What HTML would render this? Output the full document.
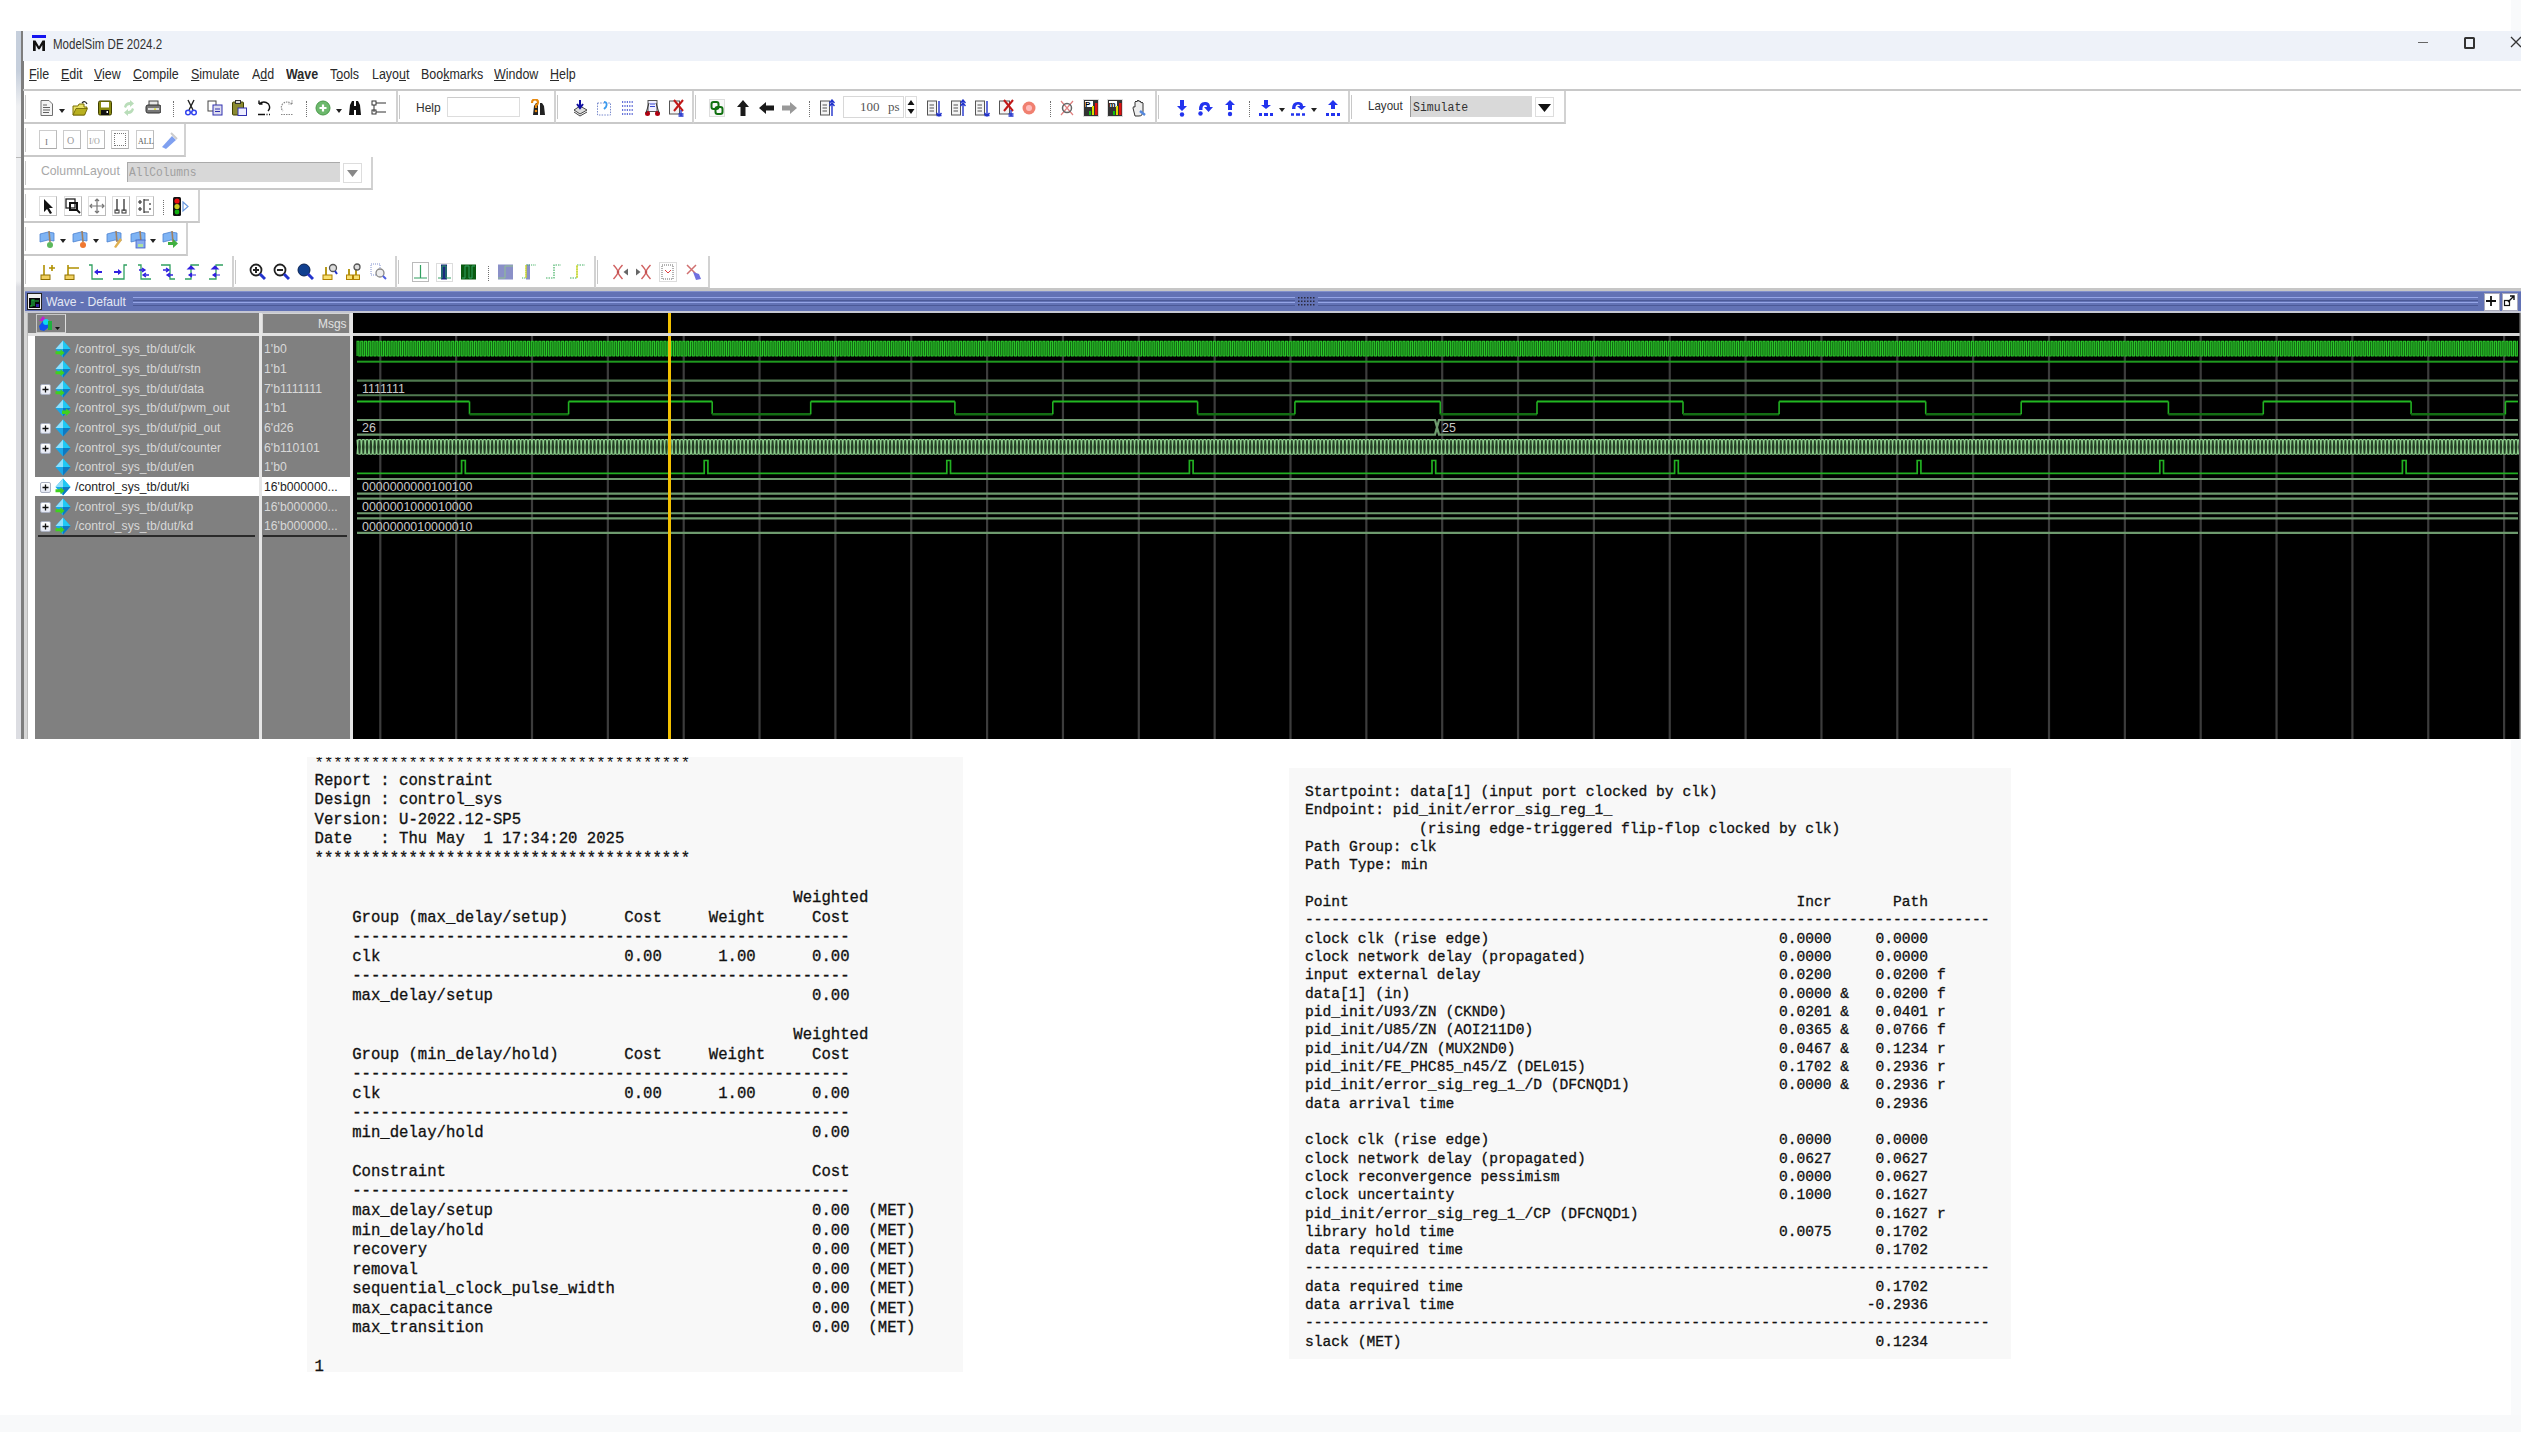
<!DOCTYPE html><html><head><meta charset="utf-8"><style>html,body{margin:0;padding:0;}body{width:2521px;height:1432px;position:relative;overflow:hidden;background:#fff;}</style></head><body><div style="position:absolute;left:0px;top:1415px;width:2521px;height:17px;background:#F8F9FA;"></div><div style="position:absolute;left:2511px;top:0px;width:10px;height:31px;background:#F9FAFB;"></div><div style="position:absolute;left:2511px;top:740px;width:10px;height:675px;background:#F9FAFB;"></div><div style="position:absolute;left:16px;top:31px;width:5px;height:708px;background:linear-gradient(#C6CFDC 0px,#C6CFDC 40px,#EEEFF1 75px,#EEEFF1 250px,#DCDDE2 256px,#DCDDE2 100%);"></div><div style="position:absolute;left:16px;top:157px;width:5px;height:1px;background:#B8B8B8;"></div><div style="position:absolute;left:21px;top:31px;width:2.5px;height:708px;background:#7E7E7E;"></div><div style="position:absolute;left:23.5px;top:91px;width:4px;height:648px;background:#D6D6D6;"></div><div style="position:absolute;left:23px;top:31px;width:2498px;height:30px;background:#EEF2F9;"></div><div style="position:absolute;left:32px;top:35px;width:14px;height:2.5px;background:#1414F0;"></div><svg style="position:absolute;left:31px;top:39px;" width="16" height="13" viewBox="0 0 16 13"><path d="M2 12 V1.5 H4.5 L8 7.5 L11.5 1.5 H14 V12 H11.3 V6 L8.8 10.3 H7.2 L4.7 6 V12 Z" fill="#111"/></svg><div style="position:absolute;left:53px;top:28.80px;height:30px;line-height:30px;font-family:'Liberation Sans', sans-serif;font-size:15px;color:#333;font-weight:normal;white-space:pre;transform:scaleX(0.77);transform-origin:0 0;">ModelSim DE 2024.2</div><div style="position:absolute;left:2418px;top:42px;width:10px;height:1px;background:#666;"></div><div style="position:absolute;left:2464px;top:37px;width:7px;height:8px;border:2px solid #333;border-radius:1.5px"></div><svg style="position:absolute;left:2510px;top:36px;" width="11" height="12" viewBox="0 0 11 12"><path d="M1 1 L11 11 M11 1 L1 11" stroke="#333" stroke-width="1.3"/></svg><div style="position:absolute;left:29px;top:60.15px;height:28px;line-height:28px;font-family:'Liberation Sans', sans-serif;font-size:14px;color:#2a2a2a;font-weight:normal;white-space:pre;transform:scaleX(0.89);transform-origin:0 0;text-underline-offset:1px;"><u>F</u>ile</div><div style="position:absolute;left:61px;top:60.15px;height:28px;line-height:28px;font-family:'Liberation Sans', sans-serif;font-size:14px;color:#2a2a2a;font-weight:normal;white-space:pre;transform:scaleX(0.89);transform-origin:0 0;text-underline-offset:1px;"><u>E</u>dit</div><div style="position:absolute;left:94px;top:60.15px;height:28px;line-height:28px;font-family:'Liberation Sans', sans-serif;font-size:14px;color:#2a2a2a;font-weight:normal;white-space:pre;transform:scaleX(0.89);transform-origin:0 0;text-underline-offset:1px;"><u>V</u>iew</div><div style="position:absolute;left:133px;top:60.15px;height:28px;line-height:28px;font-family:'Liberation Sans', sans-serif;font-size:14px;color:#2a2a2a;font-weight:normal;white-space:pre;transform:scaleX(0.89);transform-origin:0 0;text-underline-offset:1px;"><u>C</u>ompile</div><div style="position:absolute;left:191px;top:60.15px;height:28px;line-height:28px;font-family:'Liberation Sans', sans-serif;font-size:14px;color:#2a2a2a;font-weight:normal;white-space:pre;transform:scaleX(0.89);transform-origin:0 0;text-underline-offset:1px;"><u>S</u>imulate</div><div style="position:absolute;left:252px;top:60.15px;height:28px;line-height:28px;font-family:'Liberation Sans', sans-serif;font-size:14px;color:#2a2a2a;font-weight:normal;white-space:pre;transform:scaleX(0.89);transform-origin:0 0;text-underline-offset:1px;">A<u>d</u>d</div><div style="position:absolute;left:286px;top:60.15px;height:28px;line-height:28px;font-family:'Liberation Sans', sans-serif;font-size:14px;color:#2a2a2a;font-weight:bold;white-space:pre;transform:scaleX(0.89);transform-origin:0 0;text-underline-offset:1px;">W<u>a</u>ve</div><div style="position:absolute;left:330px;top:60.15px;height:28px;line-height:28px;font-family:'Liberation Sans', sans-serif;font-size:14px;color:#2a2a2a;font-weight:normal;white-space:pre;transform:scaleX(0.89);transform-origin:0 0;text-underline-offset:1px;">T<u>o</u>ols</div><div style="position:absolute;left:372px;top:60.15px;height:28px;line-height:28px;font-family:'Liberation Sans', sans-serif;font-size:14px;color:#2a2a2a;font-weight:normal;white-space:pre;transform:scaleX(0.89);transform-origin:0 0;text-underline-offset:1px;">Layo<u>u</u>t</div><div style="position:absolute;left:421px;top:60.15px;height:28px;line-height:28px;font-family:'Liberation Sans', sans-serif;font-size:14px;color:#2a2a2a;font-weight:normal;white-space:pre;transform:scaleX(0.89);transform-origin:0 0;text-underline-offset:1px;">Boo<u>k</u>marks</div><div style="position:absolute;left:494px;top:60.15px;height:28px;line-height:28px;font-family:'Liberation Sans', sans-serif;font-size:14px;color:#2a2a2a;font-weight:normal;white-space:pre;transform:scaleX(0.89);transform-origin:0 0;text-underline-offset:1px;"><u>W</u>indow</div><div style="position:absolute;left:550px;top:60.15px;height:28px;line-height:28px;font-family:'Liberation Sans', sans-serif;font-size:14px;color:#2a2a2a;font-weight:normal;white-space:pre;transform:scaleX(0.89);transform-origin:0 0;text-underline-offset:1px;"><u>H</u>elp</div><div style="position:absolute;left:23px;top:89px;width:2498px;height:2px;background:#C8C8C8;"></div><div style="position:absolute;left:24px;top:91px;width:374px;height:33px;background:#fff;border-right:2px solid #D2D2D2;border-bottom:2px solid #C9C9C9;box-sizing:border-box"></div><div style="position:absolute;left:25px;top:95px;width:1px;height:24px;background:#C8C8C8;"></div><div style="position:absolute;left:26px;top:95px;width:1px;height:24px;background:#FFFFFF;"></div><svg style="position:absolute;left:39px;top:99px;" width="16" height="18" viewBox="0 0 16 18"><path d="M2 1.5 H10 L13.5 5 V16.5 H2 Z" fill="#f4f4f4" stroke="#707070" stroke-width="1"/><path d="M4 6 H8 M4 8.5 H11 M4 11 H11 M4 13.5 H10" stroke="#606060" stroke-width="1.2"/></svg><svg style="position:absolute;left:72px;top:99px;" width="16" height="18" viewBox="0 0 16 18"><path d="M1 7 H6 L7 5 H12 V8 H15 L12.5 16 H1 Z" fill="#E8E066" stroke="#7a7000" stroke-width="1"/><path d="M1 16 L4 9.5 H15.5 L12.5 16 Z" fill="#B8B020" stroke="#6a6000" stroke-width="0.8"/><path d="M10 4 Q13 1 15 5" stroke="#222" fill="none" stroke-width="1.2"/></svg><svg style="position:absolute;left:97px;top:99px;" width="16" height="18" viewBox="0 0 16 18"><rect x="1.5" y="2" width="13" height="14" rx="1.5" fill="#8a8a10" stroke="#404000"/><rect x="4" y="3" width="8" height="5.5" fill="#fff"/><rect x="4" y="11" width="8" height="5" fill="#111"/><rect x="9.5" y="12" width="1.5" height="2" fill="#fff"/></svg><svg style="position:absolute;left:121px;top:99px;" width="16" height="18" viewBox="0 0 16 18"><path d="M3 8 Q4 3 9 3 L9 1 L13 4.5 L9 8 V6 Q6 6 5 9 Z M13 10 Q12 15 7 15 V17 L3 13.5 L7 10 V12 Q10 12 11 9 Z" fill="#B9DDB9"/></svg><svg style="position:absolute;left:145px;top:99px;" width="16" height="18" viewBox="0 0 16 18"><rect x="4" y="2" width="9" height="5" fill="#e8e8e8" stroke="#444"/><rect x="1" y="6" width="15" height="8" rx="2" fill="#777" stroke="#333"/><rect x="3" y="9" width="11" height="2" fill="#ddd"/><rect x="9" y="9.5" width="2" height="1.2" fill="#dd0"/></svg><svg style="position:absolute;left:183px;top:99px;" width="16" height="18" viewBox="0 0 16 18"><path d="M5 1 L10 11 M11 1 L6 11" stroke="#222" stroke-width="1.4"/><circle cx="5" cy="13.5" r="2.3" fill="none" stroke="#3344ee" stroke-width="1.5"/><circle cx="11" cy="13.5" r="2.3" fill="none" stroke="#3344ee" stroke-width="1.5"/></svg><svg style="position:absolute;left:207px;top:99px;" width="16" height="18" viewBox="0 0 16 18"><rect x="1" y="2" width="8" height="10" fill="#fff" stroke="#444"/><rect x="6" y="6" width="9" height="10" fill="#dde" stroke="#3030b0"/><path d="M8 10 H13 M8 12.5 H13" stroke="#3030b0"/></svg><svg style="position:absolute;left:231px;top:99px;" width="16" height="18" viewBox="0 0 16 18"><rect x="1.5" y="3" width="11" height="13" rx="1" fill="#8a8a30" stroke="#404000"/><rect x="4.5" y="1.5" width="5" height="3" fill="#ddd" stroke="#333"/><rect x="7" y="9" width="8.5" height="7.5" fill="#eef" stroke="#3030b0"/></svg><svg style="position:absolute;left:256px;top:99px;" width="16" height="18" viewBox="0 0 16 18"><path d="M3 5 L3 1.5 M3 5 H6.5 M3 5 Q8 1 12.5 5 Q15 9 12 12" stroke="#111" stroke-width="1.4" fill="none"/><path d="M2 15.5 H9 M10.5 15.5 H11.5 M13 15.5 H14" stroke="#111" stroke-width="1.6"/></svg><svg style="position:absolute;left:279px;top:99px;" width="16" height="18" viewBox="0 0 16 18"><path d="M13 5 L13 1.5 M13 5 H9.5 M13 5 Q8 1 3.5 5 Q1 9 4 12" stroke="#888" stroke-width="1.2" fill="none" stroke-dasharray="1.5 1"/><path d="M2 15.5 H14" stroke="#888" stroke-width="1.2" stroke-dasharray="1.5 1"/></svg><svg style="position:absolute;left:315px;top:99px;" width="16" height="18" viewBox="0 0 16 18"><circle cx="8" cy="9" r="7" fill="#6cb86c" stroke="#4a9a4a"/><path d="M8 5.5 V12.5 M4.5 9 H11.5" stroke="#fff" stroke-width="2.2"/></svg><svg style="position:absolute;left:347px;top:99px;" width="16" height="18" viewBox="0 0 16 18"><path d="M2 16 L3 6 L5 2 H7 V16 Z M14 16 L13 6 L11 2 H9 V16 Z" fill="#111"/><rect x="6" y="7" width="4" height="4" fill="#111"/></svg><svg style="position:absolute;left:371px;top:99px;" width="16" height="18" viewBox="0 0 16 18"><rect x="1" y="2" width="4" height="4" fill="#fff" stroke="#333"/><rect x="1" y="11" width="4" height="4" fill="#fff" stroke="#333"/><path d="M3 6 V13 M5 4 H15 M5 13 H15" stroke="#333"/></svg><svg style="position:absolute;left:59px;top:109px;" width="6" height="4" viewBox="0 0 6 4"><path d="M0 0 H6 L3 4 Z" fill="#222"/></svg><svg style="position:absolute;left:336px;top:109px;" width="6" height="4" viewBox="0 0 6 4"><path d="M0 0 H6 L3 4 Z" fill="#222"/></svg><div style="position:absolute;left:173px;top:101px;width:0;height:16px;border-left:1.5px dotted #707070"></div><div style="position:absolute;left:306px;top:101px;width:0;height:16px;border-left:1.5px dotted #707070"></div><div style="position:absolute;left:398px;top:91px;width:158px;height:33px;background:#fff;border-right:2px solid #D2D2D2;border-bottom:2px solid #C9C9C9;box-sizing:border-box"></div><div style="position:absolute;left:399px;top:95px;width:1px;height:24px;background:#C8C8C8;"></div><div style="position:absolute;left:400px;top:95px;width:1px;height:24px;background:#FFFFFF;"></div><div style="position:absolute;left:416px;top:94.50px;height:26px;line-height:26px;font-family:'Liberation Sans', sans-serif;font-size:13px;color:#333;font-weight:normal;white-space:pre;transform:scaleX(0.92);transform-origin:0 0;">Help</div><div style="position:absolute;left:447px;top:97px;width:73px;height:20px;background:#fff;border:1px solid #ddd;border-top-color:#ccc;box-sizing:border-box"></div><svg style="position:absolute;left:530px;top:99px;" width="16" height="18" viewBox="0 0 16 18"><path d="M3 16 L4 7 L6 4 H8 V16 Z M15 16 L14 7 L12 4 H10 V16 Z" fill="#222"/><path d="M2 4 Q2 0.5 5 0.5 Q8 0.5 8 3.5 Q8 5 6 6.5 V9" stroke="#E88A10" stroke-width="2.2" fill="none"/><circle cx="6" cy="12" r="1.3" fill="#E88A10"/></svg><div style="position:absolute;left:556px;top:91px;width:138px;height:33px;background:#fff;border-right:2px solid #D2D2D2;border-bottom:2px solid #C9C9C9;box-sizing:border-box"></div><div style="position:absolute;left:557px;top:95px;width:1px;height:24px;background:#C8C8C8;"></div><div style="position:absolute;left:558px;top:95px;width:1px;height:24px;background:#FFFFFF;"></div><svg style="position:absolute;left:572px;top:99px;" width="16" height="18" viewBox="0 0 16 18"><path d="M2 11 L8 7 L15 11 L8 15 Z" fill="#ddd" stroke="#444"/><path d="M2 13 L8 17 L15 13" stroke="#444" fill="none"/><path d="M8 1 V8 M5 5 L8 9 L11 5" stroke="#1010a0" stroke-width="2" fill="none"/></svg><svg style="position:absolute;left:596px;top:99px;" width="16" height="18" viewBox="0 0 16 18"><rect x="1.5" y="4" width="13" height="12" fill="none" stroke="#7788cc" stroke-dasharray="1.5 1.2"/><path d="M8 3 Q12 3 10 8 L8 10" stroke="#3a9aee" stroke-width="1.8" fill="none"/></svg><svg style="position:absolute;left:620px;top:99px;" width="16" height="18" viewBox="0 0 16 18"><path d="M2 3 H14 M2 7 H14 M2 11 H14 M2 15 H14" stroke="#3344cc" stroke-width="1.5" stroke-dasharray="1.2 1.2"/></svg><svg style="position:absolute;left:644px;top:99px;" width="16" height="18" viewBox="0 0 16 18"><rect x="4" y="1.5" width="9" height="11" fill="#eef" stroke="#555"/><path d="M6 5 H11 M6 7.5 H11" stroke="#3344cc"/><circle cx="3.5" cy="14.5" r="2.5" fill="#b00010"/><circle cx="13.5" cy="14.5" r="2.5" fill="#b00010"/><path d="M2 14 L5 4 M15 14 L12 4" stroke="#333"/></svg><svg style="position:absolute;left:668px;top:99px;" width="16" height="18" viewBox="0 0 16 18"><rect x="1.5" y="2" width="10" height="13" fill="#f4f4f4" stroke="#555"/><path d="M6 1 L15 12 M15 1 L6 12" stroke="#c01818" stroke-width="2"/><path d="M13 11 V17 M10.5 15 H15.5 M10.5 17 H15.5" stroke="#2233cc" stroke-width="1.3"/></svg><div style="position:absolute;left:694px;top:91px;width:463px;height:33px;background:#fff;border-right:2px solid #D2D2D2;border-bottom:2px solid #C9C9C9;box-sizing:border-box"></div><div style="position:absolute;left:695px;top:95px;width:1px;height:24px;background:#C8C8C8;"></div><div style="position:absolute;left:696px;top:95px;width:1px;height:24px;background:#FFFFFF;"></div><svg style="position:absolute;left:709px;top:99px;" width="16" height="18" viewBox="0 0 16 18"><rect x="0.5" y="0.5" width="15" height="17" fill="#f8f8f8" stroke="#ddd"/><rect x="2.5" y="3" width="7" height="7" rx="2" fill="none" stroke="#107010" stroke-width="2"/><rect x="6.5" y="8" width="7" height="7" rx="2" fill="none" stroke="#107010" stroke-width="2"/></svg><svg style="position:absolute;left:735px;top:99px;" width="16" height="18" viewBox="0 0 16 18"><path d="M8 1 L14 8 H10.5 V17 H5.5 V8 H2 Z" fill="#1a1a1a"/></svg><svg style="position:absolute;left:758px;top:99px;" width="16" height="18" viewBox="0 0 16 18"><path d="M1 9 L8 3 V6.5 H16 V11.5 H8 V15 Z" fill="#1a1a1a"/></svg><svg style="position:absolute;left:781px;top:99px;" width="16" height="18" viewBox="0 0 16 18"><path d="M16 9 L9 3 V6.5 H1 V11.5 H9 V15 Z" fill="#999"/></svg><svg style="position:absolute;left:819px;top:99px;" width="16" height="18" viewBox="0 0 16 18"><rect x="1.5" y="2" width="9" height="14" fill="#f4f4f4" stroke="#555"/><path d="M3.5 6 H8 M3.5 9 H8 M3.5 12 H8" stroke="#555"/><path d="M13 1 V17 M10.5 4 L13 1 L15.5 4 M10.5 7 L13 4 L15.5 7" stroke="#2233cc" stroke-width="1.4" fill="none"/></svg><svg style="position:absolute;left:926px;top:99px;" width="16" height="18" viewBox="0 0 16 18"><rect x="1.5" y="2" width="9" height="14" fill="#f4f4f4" stroke="#555"/><path d="M3.5 6 H8 M3.5 9 H8 M3.5 12 H8" stroke="#555"/><path d="M13 2 V16 M10.5 16.5 H15.5 M10.5 14 L13 17 L15.5 14" stroke="#2233cc" stroke-width="1.4" fill="none"/></svg><svg style="position:absolute;left:950px;top:99px;" width="16" height="18" viewBox="0 0 16 18"><rect x="1.5" y="2" width="9" height="14" fill="#f4f4f4" stroke="#555"/><path d="M3.5 6 H8 M3.5 9 H8 M3.5 12 H8" stroke="#555"/><path d="M13 1 V17 M10.5 4 L13 1 L15.5 4 M10.5 7 L13 4 L15.5 7" stroke="#2233cc" stroke-width="1.4" fill="none"/></svg><svg style="position:absolute;left:974px;top:99px;" width="16" height="18" viewBox="0 0 16 18"><rect x="1.5" y="2" width="9" height="14" fill="#f4f4f4" stroke="#555"/><path d="M3.5 6 H8 M3.5 9 H8 M3.5 12 H8" stroke="#555"/><path d="M13 2 V16 M10.5 16.5 H15.5 M10.5 14 L13 17 L15.5 14" stroke="#2233cc" stroke-width="1.4" fill="none"/></svg><svg style="position:absolute;left:998px;top:99px;" width="16" height="18" viewBox="0 0 16 18"><rect x="1.5" y="2" width="10" height="13" fill="#f4f4f4" stroke="#555"/><path d="M6 1 L15 12 M15 1 L6 12" stroke="#c01818" stroke-width="2"/><path d="M13 11 V17 M10.5 15 H15.5 M10.5 17 H15.5" stroke="#2233cc" stroke-width="1.3"/></svg><svg style="position:absolute;left:1021px;top:99px;" width="16" height="18" viewBox="0 0 16 18"><circle cx="8" cy="9" r="6.5" fill="#f08070"/><circle cx="8" cy="9" r="3" fill="#fbb"/></svg><svg style="position:absolute;left:1059px;top:99px;" width="16" height="18" viewBox="0 0 16 18"><path d="M2 2 L14 16 M14 2 L2 16" stroke="#e08080" stroke-width="1.2"/><circle cx="8" cy="9" r="4.5" fill="none" stroke="#666" stroke-width="1.5"/></svg><svg style="position:absolute;left:1083px;top:99px;" width="16" height="18" viewBox="0 0 16 18"><rect x="0.5" y="0.5" width="15" height="17" fill="#333" stroke="#ddd"/><rect x="2" y="2" width="8" height="6" fill="#fff"/><text x="2" y="8" font-size="8" font-weight="bold" fill="#000" font-family="Liberation Sans">P</text><rect x="9" y="7" width="2" height="9" fill="#dd0"/><rect x="12" y="4" width="2.5" height="12" fill="#e01010"/><rect x="6" y="12" width="2" height="4" fill="#10c010"/></svg><svg style="position:absolute;left:1107px;top:99px;" width="16" height="18" viewBox="0 0 16 18"><rect x="0.5" y="0.5" width="15" height="17" fill="#333" stroke="#ddd"/><rect x="2" y="2" width="8" height="6" fill="#fff"/><text x="1.5" y="8" font-size="8" font-weight="bold" fill="#000" font-family="Liberation Sans">m</text><rect x="9" y="7" width="2" height="9" fill="#dd0"/><rect x="12" y="4" width="2.5" height="12" fill="#e01010"/><rect x="6" y="12" width="2" height="4" fill="#10c010"/></svg><svg style="position:absolute;left:1131px;top:99px;" width="16" height="18" viewBox="0 0 16 18"><path d="M4 17 L2 9 Q2 7 4 8 V3 Q5 1 6 3 V2 Q7 0.5 8 2 V2.5 Q9 1 10 3 V4 Q11 2.5 12 4 V12 Q12 17 8 17 Z" fill="#eee" stroke="#333"/><path d="M9 12 L14 16" stroke="#5588dd" stroke-width="2.5"/></svg><div style="position:absolute;left:809px;top:101px;width:0;height:16px;border-left:1.5px dotted #707070"></div><div style="position:absolute;left:1050px;top:101px;width:0;height:16px;border-left:1.5px dotted #707070"></div><div style="position:absolute;left:843px;top:96px;width:61px;height:22px;background:#fff;border:1px solid #d8d8d8;box-sizing:border-box"></div><div style="position:absolute;left:860px;top:94.34px;height:26px;line-height:26px;font-family:'Liberation Serif', serif;font-size:13px;color:#555;font-weight:normal;white-space:pre;">100</div><div style="position:absolute;left:888px;top:94.34px;height:26px;line-height:26px;font-family:'Liberation Serif', serif;font-size:13px;color:#555;font-weight:normal;white-space:pre;">ps</div><div style="position:absolute;left:905px;top:96px;width:12px;height:22px;background:#fff;border:1px solid #ddd;box-sizing:border-box"></div><svg style="position:absolute;left:906px;top:98px;" width="10" height="18" viewBox="0 0 10 18"><path d="M1.5 7 L5 2 L8.5 7 Z M1.5 11 L5 16 L8.5 11 Z" fill="#111"/></svg><div style="position:absolute;left:1157px;top:91px;width:193px;height:33px;background:#fff;border-right:2px solid #D2D2D2;border-bottom:2px solid #C9C9C9;box-sizing:border-box"></div><div style="position:absolute;left:1158px;top:95px;width:1px;height:24px;background:#C8C8C8;"></div><div style="position:absolute;left:1159px;top:95px;width:1px;height:24px;background:#FFFFFF;"></div><svg style="position:absolute;left:1174px;top:99px;" width="16" height="18" viewBox="0 0 16 18"><path d="M6 1 V7 H3 L8 12 L13 7 H10 V1 Z" fill="#2233ee"/><circle cx="8" cy="15.5" r="2.2" fill="#2233ee"/></svg><svg style="position:absolute;left:1197px;top:99px;" width="16" height="18" viewBox="0 0 16 18"><path d="M2 11 Q2 2 9 3 Q13 3.5 13 8 H16 L11.5 13 L7 8 H10 Q10 6 8 6 Q5 6.5 5.5 11 Z" fill="#2233ee"/><circle cx="3.5" cy="14.5" r="2.2" fill="#2233ee"/></svg><svg style="position:absolute;left:1222px;top:99px;" width="16" height="18" viewBox="0 0 16 18"><path d="M8 1 L13 6 H10 V11 H6 V6 H3 Z" fill="#2233ee"/><circle cx="8" cy="15" r="2.2" fill="#2233ee"/></svg><svg style="position:absolute;left:1258px;top:99px;" width="16" height="18" viewBox="0 0 16 18"><path d="M6 1 V6 H3 L8 10 L13 6 H10 V1 Z" fill="#2233ee"/><path d="M1 15.5 H4 M6 15.5 H10 M12 15.5 H15" stroke="#2233ee" stroke-width="3"/></svg><svg style="position:absolute;left:1290px;top:99px;" width="16" height="18" viewBox="0 0 16 18"><path d="M2 10 Q2 2 9 3 Q13 3.5 13 7 H16 L11.5 11 L7 7 H10 Q10 5.5 8 5.5 Q5 6 5.5 10 Z" fill="#2233ee"/><path d="M1 15.5 H4 M6 15.5 H10 M12 15.5 H15" stroke="#2233ee" stroke-width="2.5"/></svg><svg style="position:absolute;left:1325px;top:99px;" width="16" height="18" viewBox="0 0 16 18"><path d="M8 1 L13 6 H10 V10 H6 V6 H3 Z" fill="#2233ee"/><path d="M1 15.5 H4 M6 15.5 H10 M12 15.5 H15" stroke="#2233ee" stroke-width="3"/></svg><svg style="position:absolute;left:1279px;top:108px;" width="6" height="4" viewBox="0 0 6 4"><path d="M0 0 H6 L3 4 Z" fill="#222"/></svg><svg style="position:absolute;left:1311px;top:108px;" width="6" height="4" viewBox="0 0 6 4"><path d="M0 0 H6 L3 4 Z" fill="#222"/></svg><div style="position:absolute;left:1249px;top:101px;width:0;height:16px;border-left:1.5px dotted #707070"></div><div style="position:absolute;left:1350px;top:91px;width:216px;height:33px;background:#fff;border-right:2px solid #D2D2D2;border-bottom:2px solid #C9C9C9;box-sizing:border-box"></div><div style="position:absolute;left:1351px;top:95px;width:1px;height:24px;background:#C8C8C8;"></div><div style="position:absolute;left:1352px;top:95px;width:1px;height:24px;background:#FFFFFF;"></div><div style="position:absolute;left:1368px;top:92.50px;height:26px;line-height:26px;font-family:'Liberation Sans', sans-serif;font-size:13px;color:#333;font-weight:normal;white-space:pre;transform:scaleX(0.89);transform-origin:0 0;">Layout</div><div style="position:absolute;left:1410px;top:96px;width:122px;height:21px;background:#D9D9D9;border-left:1.5px solid #999;box-sizing:border-box"></div><div style="position:absolute;left:1413px;top:96.17px;height:25.0px;line-height:25.0px;font-family:'Liberation Mono', monospace;font-size:12.5px;color:#333;font-weight:normal;white-space:pre;transform:scaleX(0.92);transform-origin:0 0;">Simulate</div><div style="position:absolute;left:1535px;top:97px;width:19px;height:20px;background:#fff;border:1px solid #ddd;box-sizing:border-box"></div><svg style="position:absolute;left:1537px;top:103px;" width="15" height="10" viewBox="0 0 15 10"><path d="M1 1 H14 L7.5 9 Z" fill="#111"/></svg><div style="position:absolute;left:24px;top:124px;width:162px;height:33px;background:#fff;border-right:2px solid #D2D2D2;border-bottom:2px solid #C9C9C9;box-sizing:border-box"></div><div style="position:absolute;left:25px;top:128px;width:1px;height:24px;background:#C8C8C8;"></div><div style="position:absolute;left:26px;top:128px;width:1px;height:24px;background:#FFFFFF;"></div><div style="position:absolute;left:39px;top:130px;width:18px;height:19px;background:#fff;border:1px solid #ccc;border-right-color:#bbb;border-bottom-color:#aaa;box-sizing:border-box"></div><div style="position:absolute;left:63px;top:130px;width:18px;height:19px;background:#fff;border:1px solid #ccc;border-right-color:#bbb;border-bottom-color:#aaa;box-sizing:border-box"></div><div style="position:absolute;left:87px;top:130px;width:18px;height:19px;background:#fff;border:1px solid #ccc;border-right-color:#bbb;border-bottom-color:#aaa;box-sizing:border-box"></div><div style="position:absolute;left:111px;top:130px;width:18px;height:19px;background:#fff;border:1px solid #ccc;border-right-color:#bbb;border-bottom-color:#aaa;box-sizing:border-box"></div><div style="position:absolute;left:136px;top:130px;width:18px;height:19px;background:#fff;border:1px solid #ccc;border-right-color:#bbb;border-bottom-color:#aaa;box-sizing:border-box"></div><div style="position:absolute;left:45px;top:132.60px;height:18px;line-height:18px;font-family:'Liberation Serif', serif;font-size:9px;color:#777;font-weight:normal;white-space:pre;">I</div><div style="position:absolute;left:67px;top:131.34px;height:20px;line-height:20px;font-family:'Liberation Serif', serif;font-size:10px;color:#999;font-weight:normal;white-space:pre;">O</div><div style="position:absolute;left:89px;top:133.87px;height:16px;line-height:16px;font-family:'Liberation Serif', serif;font-size:8px;color:#999;font-weight:normal;white-space:pre;">I/O</div><div style="position:absolute;left:114px;top:133px;width:12px;height:13px;border:1px dotted #777;box-sizing:border-box"></div><div style="position:absolute;left:138px;top:133.87px;height:16px;line-height:16px;font-family:'Liberation Serif', serif;font-size:8px;color:#555;font-weight:normal;white-space:pre;">ALL</div><svg style="position:absolute;left:159px;top:130px;" width="20" height="20" viewBox="0 0 20 20"><path d="M3 17 L13 6 L17 10 L7 19 Z" fill="#7fa0f0"/><path d="M12 3 L18 9" stroke="#ccc" stroke-width="2"/></svg><div style="position:absolute;left:24px;top:157px;width:349px;height:33px;background:#fff;border-right:2px solid #D2D2D2;border-bottom:2px solid #C9C9C9;box-sizing:border-box"></div><div style="position:absolute;left:25px;top:161px;width:1px;height:24px;background:#C8C8C8;"></div><div style="position:absolute;left:26px;top:161px;width:1px;height:24px;background:#FFFFFF;"></div><div style="position:absolute;left:41px;top:158.00px;height:26px;line-height:26px;font-family:'Liberation Sans', sans-serif;font-size:13px;color:#A8A8A8;font-weight:normal;white-space:pre;transform:scaleX(0.94);transform-origin:0 0;">ColumnLayout</div><div style="position:absolute;left:127px;top:162px;width:213px;height:20px;background:#D8D8D8;border-top:1.5px solid #aaa;border-left:1.5px solid #aaa;box-sizing:border-box"></div><div style="position:absolute;left:129px;top:161.17px;height:25.0px;line-height:25.0px;font-family:'Liberation Mono', monospace;font-size:12.5px;color:#A0A0A0;font-weight:normal;white-space:pre;transform:scaleX(0.9);transform-origin:0 0;">AllColumns</div><div style="position:absolute;left:343px;top:163px;width:19px;height:20px;background:#fff;border:1px solid #ddd;box-sizing:border-box"></div><svg style="position:absolute;left:345px;top:169px;" width="15" height="9" viewBox="0 0 15 9"><path d="M2 1 H13 L7.5 8 Z" fill="#888"/></svg><div style="position:absolute;left:24px;top:190px;width:176px;height:33px;background:#fff;border-right:2px solid #D2D2D2;border-bottom:2px solid #C9C9C9;box-sizing:border-box"></div><div style="position:absolute;left:25px;top:194px;width:1px;height:24px;background:#C8C8C8;"></div><div style="position:absolute;left:26px;top:194px;width:1px;height:24px;background:#FFFFFF;"></div><div style="position:absolute;left:39px;top:196px;width:18px;height:20px;background:#fff;border:1px solid #ddd;border-right-color:#bbb;border-bottom-color:#bbb;box-sizing:border-box"></div><div style="position:absolute;left:64px;top:196px;width:18px;height:20px;background:#fff;border:1px solid #ddd;border-right-color:#bbb;border-bottom-color:#bbb;box-sizing:border-box"></div><div style="position:absolute;left:88px;top:196px;width:18px;height:20px;background:#fff;border:1px solid #ddd;border-right-color:#bbb;border-bottom-color:#bbb;box-sizing:border-box"></div><div style="position:absolute;left:112px;top:196px;width:18px;height:20px;background:#fff;border:1px solid #ddd;border-right-color:#bbb;border-bottom-color:#bbb;box-sizing:border-box"></div><div style="position:absolute;left:136px;top:196px;width:18px;height:20px;background:#fff;border:1px solid #ddd;border-right-color:#bbb;border-bottom-color:#bbb;box-sizing:border-box"></div><svg style="position:absolute;left:41px;top:198px;" width="14" height="16" viewBox="0 0 14 16"><path d="M3 1 L12 10 H8 L11 15 L9 16 L6 11 L3 14 Z" fill="#111"/></svg><svg style="position:absolute;left:65px;top:198px;" width="16" height="16" viewBox="0 0 16 16"><rect x="1" y="1" width="9" height="9" fill="none" stroke="#222" stroke-width="1.3"/><rect x="5" y="5" width="7" height="7" fill="none" stroke="#111" stroke-width="2"/><path d="M11 11 L15 15" stroke="#111" stroke-width="1.8"/></svg><svg style="position:absolute;left:89px;top:198px;" width="16" height="16" viewBox="0 0 16 16"><path d="M8 1 V15 M1 8 H15 M6 3 L8 1 L10 3 M6 13 L8 15 L10 13 M3 6 L1 8 L3 10 M13 6 L15 8 L13 10" stroke="#777" fill="none" stroke-width="1.2"/></svg><svg style="position:absolute;left:113px;top:198px;" width="16" height="16" viewBox="0 0 16 16"><path d="M4 1 V13 M11 1 V13" stroke="#333" stroke-width="1.3"/><rect x="2" y="12" width="4" height="3" fill="none" stroke="#333"/><rect x="9" y="12" width="4" height="3" fill="none" stroke="#333"/></svg><svg style="position:absolute;left:137px;top:198px;" width="16" height="16" viewBox="0 0 16 16"><path d="M1 4 H5 M3 2 V6 M1 11 H5 M3 9 V13 M7 1 V15 M7 2 H12 M7 14 H12 M13 5 V7 M13 10 V12" stroke="#333" stroke-width="1.2"/></svg><div style="position:absolute;left:163px;top:200px;width:0;height:15px;border-left:1.5px dotted #707070"></div><svg style="position:absolute;left:172px;top:196px;" width="18" height="21" viewBox="0 0 18 21"><rect x="1" y="1" width="8" height="19" rx="1.5" fill="#111"/><circle cx="5" cy="5" r="2.6" fill="#ee1010"/><circle cx="5" cy="10.5" r="2.6" fill="#cccc20"/><circle cx="5" cy="16" r="2.4" fill="#10b010"/><path d="M11 6 L16 10.5 L11 15 Z" fill="none" stroke="#6a9ae0" stroke-width="1.2"/></svg><div style="position:absolute;left:24px;top:223px;width:164px;height:33px;background:#fff;border-right:2px solid #D2D2D2;border-bottom:2px solid #C9C9C9;box-sizing:border-box"></div><div style="position:absolute;left:25px;top:227px;width:1px;height:24px;background:#C8C8C8;"></div><div style="position:absolute;left:26px;top:227px;width:1px;height:24px;background:#FFFFFF;"></div><svg style="position:absolute;left:39px;top:230px;" width="17" height="19" viewBox="0 0 17 19"><path d="M1 4 L9 2 L15 3 L15 11 L9 10 L1 12 Z" fill="#7fb4f4" stroke="#4a80d0" stroke-width="0.8"/><path d="M10 1 L11 12" stroke="#a08060" stroke-width="1.6"/><circle cx="11" cy="15" r="3" fill="#5cb85c"/></svg><svg style="position:absolute;left:60px;top:239px;" width="6" height="4" viewBox="0 0 6 4"><path d="M0 0 H6 L3 4 Z" fill="#222"/></svg><svg style="position:absolute;left:72px;top:230px;" width="17" height="19" viewBox="0 0 17 19"><path d="M1 4 L9 2 L15 3 L15 11 L9 10 L1 12 Z" fill="#7fb4f4" stroke="#4a80d0" stroke-width="0.8"/><path d="M10 1 L11 12" stroke="#a08060" stroke-width="1.6"/><circle cx="11" cy="15" r="3" fill="#f07830"/></svg><svg style="position:absolute;left:93px;top:239px;" width="6" height="4" viewBox="0 0 6 4"><path d="M0 0 H6 L3 4 Z" fill="#222"/></svg><svg style="position:absolute;left:106px;top:230px;" width="17" height="19" viewBox="0 0 17 19"><path d="M1 4 L9 2 L15 3 L15 11 L9 10 L1 12 Z" fill="#7fb4f4" stroke="#4a80d0" stroke-width="0.8"/><path d="M10 1 L11 12" stroke="#a08060" stroke-width="1.6"/><path d="M8 17 L14 8 L16 10 L10 18 Z" fill="#e0b050"/></svg><svg style="position:absolute;left:130px;top:230px;" width="17" height="19" viewBox="0 0 17 19"><path d="M1 4 L9 2 L15 3 L15 11 L9 10 L1 12 Z" fill="#7fb4f4" stroke="#4a80d0" stroke-width="0.8"/><path d="M10 1 L11 12" stroke="#a08060" stroke-width="1.6"/><rect x="6" y="10" width="9" height="8" fill="#88aaee" stroke="#4060c0" stroke-width="0.8"/><rect x="8" y="14" width="5" height="3" fill="#aee0a0"/></svg><svg style="position:absolute;left:150px;top:239px;" width="6" height="4" viewBox="0 0 6 4"><path d="M0 0 H6 L3 4 Z" fill="#222"/></svg><svg style="position:absolute;left:162px;top:230px;" width="17" height="19" viewBox="0 0 17 19"><path d="M1 4 L9 2 L15 3 L15 11 L9 10 L1 12 Z" fill="#7fb4f4" stroke="#4a80d0" stroke-width="0.8"/><path d="M10 1 L11 12" stroke="#a08060" stroke-width="1.6"/><path d="M6 12 H11 V9 L16 13.5 L11 18 V15 H6 Z" fill="#40b040"/></svg><div style="position:absolute;left:24px;top:256px;width:210px;height:33px;background:#fff;border-right:2px solid #D2D2D2;border-bottom:2px solid #C9C9C9;box-sizing:border-box"></div><div style="position:absolute;left:25px;top:260px;width:1px;height:24px;background:#C8C8C8;"></div><div style="position:absolute;left:26px;top:260px;width:1px;height:24px;background:#FFFFFF;"></div><svg style="position:absolute;left:40px;top:263px;" width="16" height="18" viewBox="0 0 16 18"><path d="M4 2 V12 M9 5 H15 M12 2 V8" stroke="#b09000" stroke-width="1.6"/><rect x="1" y="12" width="9" height="4.5" fill="#f0d060" stroke="#907000"/></svg><svg style="position:absolute;left:64px;top:263px;" width="16" height="18" viewBox="0 0 16 18"><path d="M4 2 V12 M4 5 H15" stroke="#b09000" stroke-width="1.6"/><rect x="1" y="12" width="9" height="4.5" fill="#f0d060" stroke="#907000"/></svg><svg style="position:absolute;left:88px;top:263px;" width="16" height="18" viewBox="0 0 16 18"><path d="M1 2 H4 V16 H15" stroke="#30a060" fill="none" stroke-width="1.3"/><path d="M6 9 L10 6 V12 Z M10 8 H14 V10 H10 Z" fill="#3020e0"/></svg><svg style="position:absolute;left:112px;top:263px;" width="16" height="18" viewBox="0 0 16 18"><path d="M15 2 H12 V16 H1" stroke="#30a060" fill="none" stroke-width="1.3"/><path d="M10 9 L6 6 V12 Z M2 8 H6 V10 H2 Z" fill="#3020e0"/></svg><svg style="position:absolute;left:136px;top:263px;" width="16" height="18" viewBox="0 0 16 18"><path d="M2 2 H5 V16 H15" stroke="#30a060" fill="none" stroke-width="1.3"/><path d="M3 7 H9 M6 5 L9 7 L6 9 M7 12 H13 M10 10 L7 12 L10 14" stroke="#3020e0" fill="none" stroke-width="1.3"/></svg><svg style="position:absolute;left:160px;top:263px;" width="16" height="18" viewBox="0 0 16 18"><path d="M1 2 H10 V16 H15" stroke="#30a060" fill="none" stroke-width="1.3"/><path d="M3 7 H9 M6 5 L9 7 L6 9 M7 12 H13 M10 10 L7 12 L10 14" stroke="#3020e0" fill="none" stroke-width="1.3"/></svg><svg style="position:absolute;left:184px;top:263px;" width="16" height="18" viewBox="0 0 16 18"><path d="M1 16 H7 V2 H15" stroke="#30a060" fill="none" stroke-width="1.3"/><path d="M4 6 L7 3 L10 6 Z M5 12 H12 M8 10 L5 12 L8 14" fill="#3020e0" stroke="#3020e0" stroke-width="1.2"/></svg><svg style="position:absolute;left:208px;top:263px;" width="16" height="18" viewBox="0 0 16 18"><path d="M1 16 H8 V2 H15" stroke="#30a060" fill="none" stroke-width="1.3"/><path d="M4 6 L7 3 L10 6 Z M5 12 H12 M8 10 L5 12 L8 14" fill="#3020e0" stroke="#3020e0" stroke-width="1.2"/></svg><div style="position:absolute;left:234px;top:256px;width:163px;height:33px;background:#fff;border-right:2px solid #D2D2D2;border-bottom:2px solid #C9C9C9;box-sizing:border-box"></div><div style="position:absolute;left:235px;top:260px;width:1px;height:24px;background:#C8C8C8;"></div><div style="position:absolute;left:236px;top:260px;width:1px;height:24px;background:#FFFFFF;"></div><svg style="position:absolute;left:249px;top:263px;" width="17" height="18" viewBox="0 0 17 18"><circle cx="7" cy="7" r="5.5" fill="#fff" stroke="#222" stroke-width="1.8"/><path d="M7 4 V10 M4 7 H10" stroke="#222" stroke-width="2"/><path d="M11 11 L16 16" stroke="#2233cc" stroke-width="3"/></svg><svg style="position:absolute;left:273px;top:263px;" width="17" height="18" viewBox="0 0 17 18"><circle cx="7" cy="7" r="5.5" fill="#fff" stroke="#222" stroke-width="1.8"/><path d="M4 7 H10" stroke="#222" stroke-width="2"/><path d="M11 11 L16 16" stroke="#2233cc" stroke-width="3"/></svg><svg style="position:absolute;left:297px;top:263px;" width="17" height="18" viewBox="0 0 17 18"><circle cx="7" cy="7" r="6" fill="#104090" stroke="#082050"/><path d="M11 11 L16 16" stroke="#2233cc" stroke-width="3"/></svg><svg style="position:absolute;left:322px;top:263px;" width="18" height="18" viewBox="0 0 18 18"><path d="M4 4 V13" stroke="#b09000" stroke-width="1.8"/><rect x="1" y="12" width="9" height="4.5" fill="#f8e070" stroke="#b08000"/><circle cx="11" cy="5" r="3.5" fill="#ddd" stroke="#555" stroke-width="1.3"/><path d="M13 8 L15 11" stroke="#2233cc" stroke-width="2"/></svg><svg style="position:absolute;left:346px;top:263px;" width="18" height="18" viewBox="0 0 18 18"><path d="M3 6 V13 M10 4 V13" stroke="#b09000" stroke-width="1.8"/><rect x="0.5" y="12" width="6" height="4.5" fill="#f8e070" stroke="#b08000"/><rect x="7.5" y="12" width="6" height="4.5" fill="#f8e070" stroke="#b08000"/><circle cx="11" cy="4" r="3" fill="#ddd" stroke="#555" stroke-width="1.3"/></svg><svg style="position:absolute;left:370px;top:263px;" width="17" height="18" viewBox="0 0 17 18"><rect x="1" y="1" width="9" height="11" fill="none" stroke="#8090d0" stroke-dasharray="1 1"/><circle cx="10" cy="10" r="4" fill="#eee" stroke="#888" stroke-width="1.3"/><path d="M13 13 L16 16" stroke="#5060e0" stroke-width="2"/></svg><div style="position:absolute;left:397px;top:256px;width:199px;height:33px;background:#fff;border-right:2px solid #D2D2D2;border-bottom:2px solid #C9C9C9;box-sizing:border-box"></div><div style="position:absolute;left:398px;top:260px;width:1px;height:24px;background:#C8C8C8;"></div><div style="position:absolute;left:399px;top:260px;width:1px;height:24px;background:#FFFFFF;"></div><div style="position:absolute;left:412px;top:262px;width:17px;height:20px;background:#fff;border:1px solid #bbb;box-sizing:border-box"></div><svg style="position:absolute;left:413px;top:263px;" width="15" height="18" viewBox="0 0 15 18"><path d="M7.5 2 V15 M1 15 H14" stroke="#30a060" stroke-width="1.2"/></svg><div style="position:absolute;left:436px;top:263px;width:17px;height:19px;background:#fff;border:1px solid #ddd;box-sizing:border-box"></div><svg style="position:absolute;left:437px;top:263px;" width="15" height="18" viewBox="0 0 15 18"><rect x="4" y="1.5" width="6" height="15" fill="#1a2a80"/><path d="M1 15 H5 V3 H9 V15 H14" stroke="#30a060" fill="none" stroke-width="1"/></svg><svg style="position:absolute;left:460px;top:263px;" width="17" height="18" viewBox="0 0 17 18"><rect x="1" y="1.5" width="15" height="15" fill="#0a5a10"/><path d="M2 15 H5 V3 H9 V15 H12 V3 H15" stroke="#30a060" fill="none" stroke-width="1"/></svg><div style="position:absolute;left:488px;top:266px;width:0;height:15px;border-left:1.5px dotted #707070"></div><svg style="position:absolute;left:497px;top:263px;" width="17" height="18" viewBox="0 0 17 18"><rect x="1" y="1.5" width="15" height="15" fill="#8a90c8"/><path d="M1 15 H8 V3 H16" stroke="#90c090" fill="none" stroke-width="1"/></svg><svg style="position:absolute;left:521px;top:263px;" width="17" height="18" viewBox="0 0 17 18"><rect x="5" y="1.5" width="4" height="15" fill="#8a90c8"/><path d="M1 15 H5 V2 H15" stroke="#40b060" fill="none" stroke-width="1" stroke-dasharray="1.2 1"/><path d="M5 2 V15" stroke="#e8e020" stroke-width="1.2"/></svg><svg style="position:absolute;left:545px;top:263px;" width="17" height="18" viewBox="0 0 17 18"><path d="M1 15 H9 V2 H16" stroke="#40b060" fill="none" stroke-width="1.2" stroke-dasharray="1.5 1"/></svg><svg style="position:absolute;left:569px;top:263px;" width="17" height="18" viewBox="0 0 17 18"><path d="M1 15 H8 V2 H16" stroke="#40b060" fill="none" stroke-width="1.2" stroke-dasharray="1.5 1"/><path d="M8 2 V15" stroke="#e8e020" stroke-width="1.2"/></svg><div style="position:absolute;left:596px;top:256px;width:114px;height:33px;background:#fff;border-right:2px solid #D2D2D2;border-bottom:2px solid #C9C9C9;box-sizing:border-box"></div><div style="position:absolute;left:597px;top:260px;width:1px;height:24px;background:#C8C8C8;"></div><div style="position:absolute;left:598px;top:260px;width:1px;height:24px;background:#FFFFFF;"></div><svg style="position:absolute;left:612px;top:263px;" width="17" height="18" viewBox="0 0 17 18"><path d="M1.5 2 Q6 7 6 9 Q6 11 1.5 16 M10.5 2 Q6 7 6 9 Q6 11 10.5 16" stroke="#d06060" fill="none" stroke-width="1.4"/><circle cx="6" cy="9" r="1.3" fill="#c05050"/><path d="M16 5.5 L11.5 9 L16 12.5 Z" fill="#666"/></svg><svg style="position:absolute;left:635px;top:263px;" width="17" height="18" viewBox="0 0 17 18"><path d="M6.5 2 Q11 7 11 9 Q11 11 6.5 16 M15.5 2 Q11 7 11 9 Q11 11 15.5 16" stroke="#d06060" fill="none" stroke-width="1.4"/><circle cx="11" cy="9" r="1.3" fill="#c05050"/><path d="M1 5.5 L5.5 9 L1 12.5 Z" fill="#666"/></svg><div style="position:absolute;left:659px;top:262px;width:18px;height:20px;background:#fff;border:1px solid #ddd;box-sizing:border-box"></div><svg style="position:absolute;left:661px;top:264px;" width="14" height="16" viewBox="0 0 14 16"><rect x="1" y="1" width="11" height="14" fill="none" stroke="#666" stroke-dasharray="1 1"/><path d="M4 6 L7 9 L10 6" stroke="#e04040" fill="none"/></svg><svg style="position:absolute;left:686px;top:263px;" width="16" height="18" viewBox="0 0 16 18"><path d="M1 2 L10 11 M10 2 L1 11" stroke="#d07070" stroke-width="1.5"/><path d="M7 9 L13 11 L15 16 L10 17 Z" fill="#7070e0"/></svg><div style="position:absolute;left:23.5px;top:288px;width:2497.5px;height:3px;background:#C6C6C6;"></div><div style="position:absolute;left:25px;top:291px;width:2496px;height:20px;background:#6272B5;"></div><div style="position:absolute;left:25px;top:291px;width:2496px;height:1px;background:#8290CC;"></div><div style="position:absolute;left:25px;top:311px;width:2496px;height:2px;background:#C4C6D2;"></div><svg style="position:absolute;left:27px;top:293px;" width="15" height="17" viewBox="0 0 15 17"><rect x="0.5" y="0.5" width="14" height="16" fill="#eee" stroke="#222"/><rect x="2" y="5" width="11" height="10" fill="#06060a"/><path d="M3 13 H5 V7 H7 V13 M8 8 H12" stroke="#20c040" stroke-width="1.2" fill="none"/><rect x="9" y="11" width="3" height="3" fill="#3020a0"/></svg><div style="position:absolute;left:46px;top:287.82px;height:27.0px;line-height:27.0px;font-family:'Liberation Sans', sans-serif;font-size:13.5px;color:#E4E8F4;font-weight:normal;white-space:pre;transform:scaleX(0.9);transform-origin:0 0;">Wave - Default</div><div style="position:absolute;left:133px;top:297px;width:1162px;height:1px;background:#95A5E6;"></div><div style="position:absolute;left:1318px;top:297px;width:1160px;height:1px;background:#95A5E6;"></div><div style="position:absolute;left:133px;top:299.5px;width:1162px;height:1.5px;background:#4C5A98;"></div><div style="position:absolute;left:1318px;top:299.5px;width:1160px;height:1.5px;background:#4C5A98;"></div><div style="position:absolute;left:133px;top:302px;width:1162px;height:1px;background:#95A5E6;"></div><div style="position:absolute;left:1318px;top:302px;width:1160px;height:1px;background:#95A5E6;"></div><div style="position:absolute;left:133px;top:304.5px;width:1162px;height:1.5px;background:#4C5A98;"></div><div style="position:absolute;left:1318px;top:304.5px;width:1160px;height:1.5px;background:#4C5A98;"></div><svg style="position:absolute;left:1296px;top:296px;" width="20" height="11" viewBox="0 0 20 11"><rect x="2" y="1.0" width="1.5" height="1.5" fill="#2a2a40"/><rect x="2" y="4.5" width="1.5" height="1.5" fill="#2a2a40"/><rect x="2" y="8.0" width="1.5" height="1.5" fill="#2a2a40"/><rect x="5" y="1.0" width="1.5" height="1.5" fill="#2a2a40"/><rect x="5" y="4.5" width="1.5" height="1.5" fill="#2a2a40"/><rect x="5" y="8.0" width="1.5" height="1.5" fill="#2a2a40"/><rect x="8" y="1.0" width="1.5" height="1.5" fill="#2a2a40"/><rect x="8" y="4.5" width="1.5" height="1.5" fill="#2a2a40"/><rect x="8" y="8.0" width="1.5" height="1.5" fill="#2a2a40"/><rect x="11" y="1.0" width="1.5" height="1.5" fill="#2a2a40"/><rect x="11" y="4.5" width="1.5" height="1.5" fill="#2a2a40"/><rect x="11" y="8.0" width="1.5" height="1.5" fill="#2a2a40"/><rect x="14" y="1.0" width="1.5" height="1.5" fill="#2a2a40"/><rect x="14" y="4.5" width="1.5" height="1.5" fill="#2a2a40"/><rect x="14" y="8.0" width="1.5" height="1.5" fill="#2a2a40"/><rect x="17" y="1.0" width="1.5" height="1.5" fill="#2a2a40"/><rect x="17" y="4.5" width="1.5" height="1.5" fill="#2a2a40"/><rect x="17" y="8.0" width="1.5" height="1.5" fill="#2a2a40"/></svg><div style="position:absolute;left:2484px;top:293px;width:14px;height:16px;background:#fff;border:1px solid #aab"></div><svg style="position:absolute;left:2484px;top:293px;" width="14" height="16" viewBox="0 0 14 16"><path d="M7 3 V13 M2 8 H12" stroke="#111" stroke-width="1.8"/></svg><div style="position:absolute;left:2502px;top:293px;width:14px;height:16px;background:#fff;border:1px solid #aab"></div><svg style="position:absolute;left:2502px;top:293px;" width="14" height="16" viewBox="0 0 14 16"><rect x="2.5" y="7.5" width="5" height="5" fill="none" stroke="#111" stroke-width="1.2"/><path d="M6 9 L12 3 M8 3 H12 V7" stroke="#111" stroke-width="1.4" fill="none"/></svg><div style="position:absolute;left:23.5px;top:313px;width:4px;height:426px;background:#D6D6D6;"></div><div style="position:absolute;left:26.5px;top:313px;width:1px;height:426px;background:#BDBDBD;"></div><div style="position:absolute;left:27.5px;top:313px;width:7.5px;height:20px;background:#808080;"></div><div style="position:absolute;left:27.5px;top:336px;width:7.5px;height:403px;background:#FFFFFF;"></div><div style="position:absolute;left:35px;top:313px;width:224px;height:426px;background:#808080;"></div><div style="position:absolute;left:27.5px;top:333px;width:231.5px;height:3px;background:#E2E2E2;"></div><div style="position:absolute;left:36px;top:314px;width:30px;height:19px;border:1px solid #c8c8c8;border-right-color:#ddd;box-sizing:border-box"></div><svg style="position:absolute;left:38px;top:315px;" width="24" height="18" viewBox="0 0 24 18"><path d="M1 6 L5 1 L9 6 Z" fill="#c020d0"/><path d="M1 11 L5 6 L10 7 L11 12 L6 16 L2 15 Z" fill="#1050f0"/><circle cx="8" cy="7" r="3" fill="#10d8f0"/><rect x="10" y="6" width="4" height="9" fill="#20b040"/><path d="M17 12 H22 L19.5 15 Z" fill="#111"/></svg><div style="position:absolute;left:259px;top:313px;width:3px;height:426px;background:#E6E6E6;"></div><div style="position:absolute;left:262px;top:313px;width:88px;height:426px;background:#808080;"></div><div style="position:absolute;left:262px;top:313px;width:88px;height:20px;border:1px solid #D4D4D4;border-bottom:none;box-sizing:border-box"></div><div style="position:absolute;left:262px;top:333px;width:88px;height:3px;background:#E2E2E2;"></div><div style="position:absolute;left:350px;top:313px;width:3px;height:426px;background:#E6E6E6;"></div><div style="position:absolute;left:318px;top:310.50px;height:26px;line-height:26px;font-family:'Liberation Sans', sans-serif;font-size:13px;color:#E0E0E0;font-weight:normal;white-space:pre;transform:scaleX(0.92);transform-origin:0 0;">Msgs</div><div style="position:absolute;left:353px;top:313px;width:2168px;height:426px;background:#000;"></div><div style="position:absolute;left:353px;top:333px;width:2168px;height:3px;background:#D6D6D6;"></div><svg style="position:absolute;left:55px;top:340.3px;" width="16" height="18" viewBox="0 0 16 18"><path d="M8 0.5 L15.5 9 L8 17.5 L0.5 9 Z" fill="#18a8e8"/><path d="M8 0.5 L15.5 9 L8 9 Z" fill="#20c8f4"/><path d="M0.5 9 L8 0.5 L8 9 Z" fill="#90e0fa"/><path d="M8 9 L15.5 9 L8 17.5 Z" fill="#1078c0"/><path d="M9.5 12.8 L5.5 9.3 V11.3 H0.5 V14.3 H5.5 V16.3 Z" fill="#40d020"/></svg><div style="position:absolute;left:75px;top:336.30px;height:26px;line-height:26px;font-family:'Liberation Sans', sans-serif;font-size:13px;color:#D8D8D8;font-weight:normal;white-space:pre;transform:scaleX(0.935);transform-origin:0 0;">/control_sys_tb/dut/clk</div><div style="position:absolute;left:264px;top:336.30px;height:26px;line-height:26px;font-family:'Liberation Sans', sans-serif;font-size:13px;color:#D8D8D8;font-weight:normal;white-space:pre;transform:scaleX(0.94);transform-origin:0 0;">1&#x27;b0</div><svg style="position:absolute;left:55px;top:359.97px;" width="16" height="18" viewBox="0 0 16 18"><path d="M8 0.5 L15.5 9 L8 17.5 L0.5 9 Z" fill="#18a8e8"/><path d="M8 0.5 L15.5 9 L8 9 Z" fill="#20c8f4"/><path d="M0.5 9 L8 0.5 L8 9 Z" fill="#90e0fa"/><path d="M8 9 L15.5 9 L8 17.5 Z" fill="#1078c0"/><path d="M9.5 12.8 L5.5 9.3 V11.3 H0.5 V14.3 H5.5 V16.3 Z" fill="#40d020"/></svg><div style="position:absolute;left:75px;top:355.97px;height:26px;line-height:26px;font-family:'Liberation Sans', sans-serif;font-size:13px;color:#D8D8D8;font-weight:normal;white-space:pre;transform:scaleX(0.935);transform-origin:0 0;">/control_sys_tb/dut/rstn</div><div style="position:absolute;left:264px;top:355.97px;height:26px;line-height:26px;font-family:'Liberation Sans', sans-serif;font-size:13px;color:#D8D8D8;font-weight:normal;white-space:pre;transform:scaleX(0.94);transform-origin:0 0;">1&#x27;b1</div><div style="position:absolute;left:40px;top:383.64px;width:11px;height:11px;background:linear-gradient(#fff,#e4e8f4);border:1px solid #aab0c0;border-radius:2px;box-sizing:border-box"></div><svg style="position:absolute;left:40px;top:383.64px;" width="11" height="11" viewBox="0 0 11 11"><path d="M5.5 2.5 V8.5 M2.5 5.5 H8.5" stroke="#111" stroke-width="1.3"/></svg><svg style="position:absolute;left:55px;top:379.64px;" width="16" height="18" viewBox="0 0 16 18"><path d="M8 0.5 L15.5 9 L8 17.5 L0.5 9 Z" fill="#18a8e8"/><path d="M8 0.5 L15.5 9 L8 9 Z" fill="#20c8f4"/><path d="M0.5 9 L8 0.5 L8 9 Z" fill="#90e0fa"/><path d="M8 9 L15.5 9 L8 17.5 Z" fill="#1078c0"/><path d="M9.5 12.8 L5.5 9.3 V11.3 H0.5 V14.3 H5.5 V16.3 Z" fill="#40d020"/></svg><div style="position:absolute;left:75px;top:375.64px;height:26px;line-height:26px;font-family:'Liberation Sans', sans-serif;font-size:13px;color:#D8D8D8;font-weight:normal;white-space:pre;transform:scaleX(0.935);transform-origin:0 0;">/control_sys_tb/dut/data</div><div style="position:absolute;left:264px;top:375.64px;height:26px;line-height:26px;font-family:'Liberation Sans', sans-serif;font-size:13px;color:#D8D8D8;font-weight:normal;white-space:pre;transform:scaleX(0.94);transform-origin:0 0;">7&#x27;b1111111</div><svg style="position:absolute;left:55px;top:399.31px;" width="16" height="18" viewBox="0 0 16 18"><path d="M8 0.5 L15.5 9 L8 17.5 L0.5 9 Z" fill="#18a8e8"/><path d="M8 0.5 L15.5 9 L8 9 Z" fill="#20c8f4"/><path d="M0.5 9 L8 0.5 L8 9 Z" fill="#90e0fa"/><path d="M8 9 L15.5 9 L8 17.5 Z" fill="#1078c0"/><path d="M15.5 13 L11 9.5 V11.5 H7 V15 H11 V17 Z" fill="#40d020"/></svg><div style="position:absolute;left:75px;top:395.31px;height:26px;line-height:26px;font-family:'Liberation Sans', sans-serif;font-size:13px;color:#D8D8D8;font-weight:normal;white-space:pre;transform:scaleX(0.935);transform-origin:0 0;">/control_sys_tb/dut/pwm_out</div><div style="position:absolute;left:264px;top:395.31px;height:26px;line-height:26px;font-family:'Liberation Sans', sans-serif;font-size:13px;color:#D8D8D8;font-weight:normal;white-space:pre;transform:scaleX(0.94);transform-origin:0 0;">1&#x27;b1</div><div style="position:absolute;left:40px;top:422.98px;width:11px;height:11px;background:linear-gradient(#fff,#e4e8f4);border:1px solid #aab0c0;border-radius:2px;box-sizing:border-box"></div><svg style="position:absolute;left:40px;top:422.98px;" width="11" height="11" viewBox="0 0 11 11"><path d="M5.5 2.5 V8.5 M2.5 5.5 H8.5" stroke="#111" stroke-width="1.3"/></svg><svg style="position:absolute;left:55px;top:418.98px;" width="16" height="18" viewBox="0 0 16 18"><path d="M8 0.5 L15.5 9 L8 17.5 L0.5 9 Z" fill="#18a8e8"/><path d="M8 0.5 L15.5 9 L8 9 Z" fill="#20c8f4"/><path d="M0.5 9 L8 0.5 L8 9 Z" fill="#90e0fa"/><path d="M8 9 L15.5 9 L8 17.5 Z" fill="#1078c0"/></svg><div style="position:absolute;left:75px;top:414.98px;height:26px;line-height:26px;font-family:'Liberation Sans', sans-serif;font-size:13px;color:#D8D8D8;font-weight:normal;white-space:pre;transform:scaleX(0.935);transform-origin:0 0;">/control_sys_tb/dut/pid_out</div><div style="position:absolute;left:264px;top:414.98px;height:26px;line-height:26px;font-family:'Liberation Sans', sans-serif;font-size:13px;color:#D8D8D8;font-weight:normal;white-space:pre;transform:scaleX(0.94);transform-origin:0 0;">6&#x27;d26</div><div style="position:absolute;left:40px;top:442.65px;width:11px;height:11px;background:linear-gradient(#fff,#e4e8f4);border:1px solid #aab0c0;border-radius:2px;box-sizing:border-box"></div><svg style="position:absolute;left:40px;top:442.65000000000003px;" width="11" height="11" viewBox="0 0 11 11"><path d="M5.5 2.5 V8.5 M2.5 5.5 H8.5" stroke="#111" stroke-width="1.3"/></svg><svg style="position:absolute;left:55px;top:438.65000000000003px;" width="16" height="18" viewBox="0 0 16 18"><path d="M8 0.5 L15.5 9 L8 17.5 L0.5 9 Z" fill="#18a8e8"/><path d="M8 0.5 L15.5 9 L8 9 Z" fill="#20c8f4"/><path d="M0.5 9 L8 0.5 L8 9 Z" fill="#90e0fa"/><path d="M8 9 L15.5 9 L8 17.5 Z" fill="#1078c0"/></svg><div style="position:absolute;left:75px;top:434.65px;height:26px;line-height:26px;font-family:'Liberation Sans', sans-serif;font-size:13px;color:#D8D8D8;font-weight:normal;white-space:pre;transform:scaleX(0.935);transform-origin:0 0;">/control_sys_tb/dut/counter</div><div style="position:absolute;left:264px;top:434.65px;height:26px;line-height:26px;font-family:'Liberation Sans', sans-serif;font-size:13px;color:#D8D8D8;font-weight:normal;white-space:pre;transform:scaleX(0.94);transform-origin:0 0;">6&#x27;b110101</div><svg style="position:absolute;left:55px;top:458.32000000000005px;" width="16" height="18" viewBox="0 0 16 18"><path d="M8 0.5 L15.5 9 L8 17.5 L0.5 9 Z" fill="#18a8e8"/><path d="M8 0.5 L15.5 9 L8 9 Z" fill="#20c8f4"/><path d="M0.5 9 L8 0.5 L8 9 Z" fill="#90e0fa"/><path d="M8 9 L15.5 9 L8 17.5 Z" fill="#1078c0"/></svg><div style="position:absolute;left:75px;top:454.32px;height:26px;line-height:26px;font-family:'Liberation Sans', sans-serif;font-size:13px;color:#D8D8D8;font-weight:normal;white-space:pre;transform:scaleX(0.935);transform-origin:0 0;">/control_sys_tb/dut/en</div><div style="position:absolute;left:264px;top:454.32px;height:26px;line-height:26px;font-family:'Liberation Sans', sans-serif;font-size:13px;color:#D8D8D8;font-weight:normal;white-space:pre;transform:scaleX(0.94);transform-origin:0 0;">1&#x27;b0</div><div style="position:absolute;left:35px;top:477.39px;width:223.5px;height:18.2px;background:#FFFFFF;"></div><div style="position:absolute;left:262px;top:477.39px;width:88px;height:18.2px;background:#FFFFFF;"></div><div style="position:absolute;left:40px;top:481.99px;width:11px;height:11px;background:linear-gradient(#fff,#e4e8f4);border:1px solid #aab0c0;border-radius:2px;box-sizing:border-box"></div><svg style="position:absolute;left:40px;top:481.99px;" width="11" height="11" viewBox="0 0 11 11"><path d="M5.5 2.5 V8.5 M2.5 5.5 H8.5" stroke="#111" stroke-width="1.3"/></svg><svg style="position:absolute;left:55px;top:477.99px;" width="16" height="18" viewBox="0 0 16 18"><path d="M8 0.5 L15.5 9 L8 17.5 L0.5 9 Z" fill="#18a8e8"/><path d="M8 0.5 L15.5 9 L8 9 Z" fill="#20c8f4"/><path d="M0.5 9 L8 0.5 L8 9 Z" fill="#90e0fa"/><path d="M8 9 L15.5 9 L8 17.5 Z" fill="#1078c0"/><path d="M9.5 12.8 L5.5 9.3 V11.3 H0.5 V14.3 H5.5 V16.3 Z" fill="#40d020"/></svg><div style="position:absolute;left:75px;top:473.99px;height:26px;line-height:26px;font-family:'Liberation Sans', sans-serif;font-size:13px;color:#222;font-weight:normal;white-space:pre;transform:scaleX(0.935);transform-origin:0 0;">/control_sys_tb/dut/ki</div><div style="position:absolute;left:264px;top:473.99px;height:26px;line-height:26px;font-family:'Liberation Sans', sans-serif;font-size:13px;color:#222;font-weight:normal;white-space:pre;transform:scaleX(0.94);transform-origin:0 0;">16&#x27;b000000...</div><div style="position:absolute;left:40px;top:501.66px;width:11px;height:11px;background:linear-gradient(#fff,#e4e8f4);border:1px solid #aab0c0;border-radius:2px;box-sizing:border-box"></div><svg style="position:absolute;left:40px;top:501.66px;" width="11" height="11" viewBox="0 0 11 11"><path d="M5.5 2.5 V8.5 M2.5 5.5 H8.5" stroke="#111" stroke-width="1.3"/></svg><svg style="position:absolute;left:55px;top:497.66px;" width="16" height="18" viewBox="0 0 16 18"><path d="M8 0.5 L15.5 9 L8 17.5 L0.5 9 Z" fill="#18a8e8"/><path d="M8 0.5 L15.5 9 L8 9 Z" fill="#20c8f4"/><path d="M0.5 9 L8 0.5 L8 9 Z" fill="#90e0fa"/><path d="M8 9 L15.5 9 L8 17.5 Z" fill="#1078c0"/><path d="M9.5 12.8 L5.5 9.3 V11.3 H0.5 V14.3 H5.5 V16.3 Z" fill="#40d020"/></svg><div style="position:absolute;left:75px;top:493.66px;height:26px;line-height:26px;font-family:'Liberation Sans', sans-serif;font-size:13px;color:#D8D8D8;font-weight:normal;white-space:pre;transform:scaleX(0.935);transform-origin:0 0;">/control_sys_tb/dut/kp</div><div style="position:absolute;left:264px;top:493.66px;height:26px;line-height:26px;font-family:'Liberation Sans', sans-serif;font-size:13px;color:#D8D8D8;font-weight:normal;white-space:pre;transform:scaleX(0.94);transform-origin:0 0;">16&#x27;b000000...</div><div style="position:absolute;left:40px;top:521.33px;width:11px;height:11px;background:linear-gradient(#fff,#e4e8f4);border:1px solid #aab0c0;border-radius:2px;box-sizing:border-box"></div><svg style="position:absolute;left:40px;top:521.33px;" width="11" height="11" viewBox="0 0 11 11"><path d="M5.5 2.5 V8.5 M2.5 5.5 H8.5" stroke="#111" stroke-width="1.3"/></svg><svg style="position:absolute;left:55px;top:517.33px;" width="16" height="18" viewBox="0 0 16 18"><path d="M8 0.5 L15.5 9 L8 17.5 L0.5 9 Z" fill="#18a8e8"/><path d="M8 0.5 L15.5 9 L8 9 Z" fill="#20c8f4"/><path d="M0.5 9 L8 0.5 L8 9 Z" fill="#90e0fa"/><path d="M8 9 L15.5 9 L8 17.5 Z" fill="#1078c0"/><path d="M9.5 12.8 L5.5 9.3 V11.3 H0.5 V14.3 H5.5 V16.3 Z" fill="#40d020"/></svg><div style="position:absolute;left:75px;top:513.33px;height:26px;line-height:26px;font-family:'Liberation Sans', sans-serif;font-size:13px;color:#D8D8D8;font-weight:normal;white-space:pre;transform:scaleX(0.935);transform-origin:0 0;">/control_sys_tb/dut/kd</div><div style="position:absolute;left:264px;top:513.33px;height:26px;line-height:26px;font-family:'Liberation Sans', sans-serif;font-size:13px;color:#D8D8D8;font-weight:normal;white-space:pre;transform:scaleX(0.94);transform-origin:0 0;">16&#x27;b000000...</div><div style="position:absolute;left:38px;top:535px;width:217px;height:1.6px;background:#2a2a2a;"></div><div style="position:absolute;left:263px;top:535px;width:84px;height:1.6px;background:#2a2a2a;"></div><svg style="position:absolute;left:353px;top:313px;" width="2168" height="426" viewBox="0 0 2168 426"><rect x="26.20" y="23" width="2.2" height="403" fill="#3c3c3c"/><rect x="102.05" y="23" width="2.2" height="403" fill="#3c3c3c"/><rect x="177.90" y="23" width="2.2" height="403" fill="#3c3c3c"/><rect x="253.75" y="23" width="2.2" height="403" fill="#3c3c3c"/><rect x="329.60" y="23" width="2.2" height="403" fill="#3c3c3c"/><rect x="405.45" y="23" width="2.2" height="403" fill="#3c3c3c"/><rect x="481.30" y="23" width="2.2" height="403" fill="#3c3c3c"/><rect x="557.15" y="23" width="2.2" height="403" fill="#3c3c3c"/><rect x="633.00" y="23" width="2.2" height="403" fill="#3c3c3c"/><rect x="708.85" y="23" width="2.2" height="403" fill="#3c3c3c"/><rect x="784.70" y="23" width="2.2" height="403" fill="#3c3c3c"/><rect x="860.55" y="23" width="2.2" height="403" fill="#3c3c3c"/><rect x="936.40" y="23" width="2.2" height="403" fill="#3c3c3c"/><rect x="1012.25" y="23" width="2.2" height="403" fill="#3c3c3c"/><rect x="1088.10" y="23" width="2.2" height="403" fill="#3c3c3c"/><rect x="1163.95" y="23" width="2.2" height="403" fill="#3c3c3c"/><rect x="1239.80" y="23" width="2.2" height="403" fill="#3c3c3c"/><rect x="1315.65" y="23" width="2.2" height="403" fill="#3c3c3c"/><rect x="1391.50" y="23" width="2.2" height="403" fill="#3c3c3c"/><rect x="1467.35" y="23" width="2.2" height="403" fill="#3c3c3c"/><rect x="1543.20" y="23" width="2.2" height="403" fill="#3c3c3c"/><rect x="1619.05" y="23" width="2.2" height="403" fill="#3c3c3c"/><rect x="1694.90" y="23" width="2.2" height="403" fill="#3c3c3c"/><rect x="1770.75" y="23" width="2.2" height="403" fill="#3c3c3c"/><rect x="1846.60" y="23" width="2.2" height="403" fill="#3c3c3c"/><rect x="1922.45" y="23" width="2.2" height="403" fill="#3c3c3c"/><rect x="1998.30" y="23" width="2.2" height="403" fill="#3c3c3c"/><rect x="2074.15" y="23" width="2.2" height="403" fill="#3c3c3c"/><rect x="2150.00" y="23" width="2.2" height="403" fill="#3c3c3c"/><rect x="4" y="28.30" width="2161" height="14.60" fill="#115811"/><path d="M4.00 42.90 V28.30 H5.89 V42.90 H7.79 V28.30 H9.68 V42.90 H11.58 V28.30 H13.47 V42.90 H15.37 V28.30 H17.26 V42.90 H19.16 V28.30 H21.05 V42.90 H22.95 V28.30 H24.84 V42.90 H26.74 V28.30 H28.63 V42.90 H30.53 V28.30 H32.42 V42.90 H34.32 V28.30 H36.22 V42.90 H38.11 V28.30 H40.01 V42.90 H41.90 V28.30 H43.80 V42.90 H45.69 V28.30 H47.59 V42.90 H49.48 V28.30 H51.38 V42.90 H53.27 V28.30 H55.17 V42.90 H57.06 V28.30 H58.96 V42.90 H60.85 V28.30 H62.75 V42.90 H64.64 V28.30 H66.54 V42.90 H68.43 V28.30 H70.33 V42.90 H72.22 V28.30 H74.12 V42.90 H76.01 V28.30 H77.91 V42.90 H79.80 V28.30 H81.70 V42.90 H83.59 V28.30 H85.48 V42.90 H87.38 V28.30 H89.27 V42.90 H91.17 V28.30 H93.06 V42.90 H94.96 V28.30 H96.85 V42.90 H98.75 V28.30 H100.64 V42.90 H102.54 V28.30 H104.43 V42.90 H106.33 V28.30 H108.22 V42.90 H110.12 V28.30 H112.01 V42.90 H113.91 V28.30 H115.80 V42.90 H117.70 V28.30 H119.59 V42.90 H121.49 V28.30 H123.38 V42.90 H125.28 V28.30 H127.17 V42.90 H129.07 V28.30 H130.96 V42.90 H132.86 V28.30 H134.75 V42.90 H136.65 V28.30 H138.54 V42.90 H140.44 V28.30 H142.33 V42.90 H144.23 V28.30 H146.12 V42.90 H148.02 V28.30 H149.92 V42.90 H151.81 V28.30 H153.71 V42.90 H155.60 V28.30 H157.50 V42.90 H159.39 V28.30 H161.29 V42.90 H163.18 V28.30 H165.08 V42.90 H166.97 V28.30 H168.87 V42.90 H170.76 V28.30 H172.66 V42.90 H174.55 V28.30 H176.45 V42.90 H178.34 V28.30 H180.24 V42.90 H182.13 V28.30 H184.03 V42.90 H185.92 V28.30 H187.82 V42.90 H189.71 V28.30 H191.61 V42.90 H193.50 V28.30 H195.40 V42.90 H197.29 V28.30 H199.19 V42.90 H201.08 V28.30 H202.98 V42.90 H204.87 V28.30 H206.77 V42.90 H208.66 V28.30 H210.56 V42.90 H212.45 V28.30 H214.35 V42.90 H216.24 V28.30 H218.14 V42.90 H220.03 V28.30 H221.93 V42.90 H223.82 V28.30 H225.72 V42.90 H227.61 V28.30 H229.51 V42.90 H231.40 V28.30 H233.30 V42.90 H235.19 V28.30 H237.09 V42.90 H238.98 V28.30 H240.88 V42.90 H242.77 V28.30 H244.67 V42.90 H246.56 V28.30 H248.46 V42.90 H250.35 V28.30 H252.25 V42.90 H254.14 V28.30 H256.04 V42.90 H257.93 V28.30 H259.83 V42.90 H261.72 V28.30 H263.62 V42.90 H265.51 V28.30 H267.41 V42.90 H269.30 V28.30 H271.20 V42.90 H273.09 V28.30 H274.99 V42.90 H276.88 V28.30 H278.78 V42.90 H280.67 V28.30 H282.57 V42.90 H284.46 V28.30 H286.36 V42.90 H288.25 V28.30 H290.15 V42.90 H292.04 V28.30 H293.94 V42.90 H295.83 V28.30 H297.73 V42.90 H299.62 V28.30 H301.52 V42.90 H303.41 V28.30 H305.31 V42.90 H307.20 V28.30 H309.10 V42.90 H310.99 V28.30 H312.89 V42.90 H314.78 V28.30 H316.68 V42.90 H318.57 V28.30 H320.46 V42.90 H322.36 V28.30 H324.25 V42.90 H326.15 V28.30 H328.04 V42.90 H329.94 V28.30 H331.83 V42.90 H333.73 V28.30 H335.62 V42.90 H337.52 V28.30 H339.41 V42.90 H341.31 V28.30 H343.20 V42.90 H345.10 V28.30 H346.99 V42.90 H348.89 V28.30 H350.78 V42.90 H352.68 V28.30 H354.57 V42.90 H356.47 V28.30 H358.36 V42.90 H360.26 V28.30 H362.15 V42.90 H364.05 V28.30 H365.94 V42.90 H367.84 V28.30 H369.73 V42.90 H371.63 V28.30 H373.52 V42.90 H375.42 V28.30 H377.31 V42.90 H379.21 V28.30 H381.10 V42.90 H383.00 V28.30 H384.89 V42.90 H386.79 V28.30 H388.68 V42.90 H390.58 V28.30 H392.47 V42.90 H394.37 V28.30 H396.26 V42.90 H398.16 V28.30 H400.05 V42.90 H401.95 V28.30 H403.84 V42.90 H405.74 V28.30 H407.63 V42.90 H409.53 V28.30 H411.42 V42.90 H413.32 V28.30 H415.21 V42.90 H417.11 V28.30 H419.00 V42.90 H420.90 V28.30 H422.79 V42.90 H424.69 V28.30 H426.58 V42.90 H428.48 V28.30 H430.37 V42.90 H432.27 V28.30 H434.16 V42.90 H436.06 V28.30 H437.95 V42.90 H439.85 V28.30 H441.74 V42.90 H443.64 V28.30 H445.53 V42.90 H447.43 V28.30 H449.32 V42.90 H451.22 V28.30 H453.11 V42.90 H455.01 V28.30 H456.90 V42.90 H458.80 V28.30 H460.69 V42.90 H462.59 V28.30 H464.48 V42.90 H466.38 V28.30 H468.27 V42.90 H470.17 V28.30 H472.06 V42.90 H473.96 V28.30 H475.85 V42.90 H477.75 V28.30 H479.64 V42.90 H481.54 V28.30 H483.43 V42.90 H485.33 V28.30 H487.22 V42.90 H489.12 V28.30 H491.01 V42.90 H492.91 V28.30 H494.80 V42.90 H496.70 V28.30 H498.59 V42.90 H500.49 V28.30 H502.38 V42.90 H504.28 V28.30 H506.17 V42.90 H508.07 V28.30 H509.96 V42.90 H511.86 V28.30 H513.75 V42.90 H515.65 V28.30 H517.54 V42.90 H519.44 V28.30 H521.33 V42.90 H523.23 V28.30 H525.12 V42.90 H527.02 V28.30 H528.91 V42.90 H530.81 V28.30 H532.70 V42.90 H534.60 V28.30 H536.49 V42.90 H538.39 V28.30 H540.28 V42.90 H542.18 V28.30 H544.07 V42.90 H545.97 V28.30 H547.86 V42.90 H549.76 V28.30 H551.65 V42.90 H553.55 V28.30 H555.44 V42.90 H557.34 V28.30 H559.23 V42.90 H561.13 V28.30 H563.02 V42.90 H564.92 V28.30 H566.81 V42.90 H568.71 V28.30 H570.60 V42.90 H572.50 V28.30 H574.39 V42.90 H576.29 V28.30 H578.18 V42.90 H580.08 V28.30 H581.97 V42.90 H583.87 V28.30 H585.76 V42.90 H587.66 V28.30 H589.55 V42.90 H591.45 V28.30 H593.34 V42.90 H595.24 V28.30 H597.13 V42.90 H599.03 V28.30 H600.92 V42.90 H602.82 V28.30 H604.71 V42.90 H606.61 V28.30 H608.50 V42.90 H610.40 V28.30 H612.29 V42.90 H614.19 V28.30 H616.08 V42.90 H617.98 V28.30 H619.87 V42.90 H621.77 V28.30 H623.66 V42.90 H625.56 V28.30 H627.45 V42.90 H629.35 V28.30 H631.24 V42.90 H633.14 V28.30 H635.03 V42.90 H636.93 V28.30 H638.82 V42.90 H640.72 V28.30 H642.61 V42.90 H644.51 V28.30 H646.40 V42.90 H648.30 V28.30 H650.19 V42.90 H652.09 V28.30 H653.98 V42.90 H655.88 V28.30 H657.77 V42.90 H659.67 V28.30 H661.56 V42.90 H663.46 V28.30 H665.35 V42.90 H667.25 V28.30 H669.14 V42.90 H671.04 V28.30 H672.93 V42.90 H674.83 V28.30 H676.72 V42.90 H678.62 V28.30 H680.51 V42.90 H682.41 V28.30 H684.30 V42.90 H686.20 V28.30 H688.09 V42.90 H689.99 V28.30 H691.88 V42.90 H693.78 V28.30 H695.67 V42.90 H697.57 V28.30 H699.46 V42.90 H701.36 V28.30 H703.25 V42.90 H705.15 V28.30 H707.04 V42.90 H708.94 V28.30 H710.83 V42.90 H712.73 V28.30 H714.62 V42.90 H716.52 V28.30 H718.41 V42.90 H720.31 V28.30 H722.20 V42.90 H724.10 V28.30 H725.99 V42.90 H727.89 V28.30 H729.78 V42.90 H731.68 V28.30 H733.57 V42.90 H735.47 V28.30 H737.36 V42.90 H739.26 V28.30 H741.15 V42.90 H743.05 V28.30 H744.94 V42.90 H746.84 V28.30 H748.73 V42.90 H750.63 V28.30 H752.52 V42.90 H754.42 V28.30 H756.31 V42.90 H758.21 V28.30 H760.10 V42.90 H762.00 V28.30 H763.89 V42.90 H765.79 V28.30 H767.68 V42.90 H769.58 V28.30 H771.47 V42.90 H773.37 V28.30 H775.26 V42.90 H777.16 V28.30 H779.05 V42.90 H780.95 V28.30 H782.84 V42.90 H784.74 V28.30 H786.63 V42.90 H788.53 V28.30 H790.42 V42.90 H792.32 V28.30 H794.21 V42.90 H796.11 V28.30 H798.00 V42.90 H799.90 V28.30 H801.79 V42.90 H803.69 V28.30 H805.58 V42.90 H807.48 V28.30 H809.37 V42.90 H811.27 V28.30 H813.16 V42.90 H815.06 V28.30 H816.95 V42.90 H818.85 V28.30 H820.74 V42.90 H822.64 V28.30 H824.53 V42.90 H826.43 V28.30 H828.32 V42.90 H830.22 V28.30 H832.11 V42.90 H834.01 V28.30 H835.90 V42.90 H837.80 V28.30 H839.69 V42.90 H841.59 V28.30 H843.48 V42.90 H845.38 V28.30 H847.27 V42.90 H849.17 V28.30 H851.06 V42.90 H852.96 V28.30 H854.85 V42.90 H856.75 V28.30 H858.64 V42.90 H860.54 V28.30 H862.43 V42.90 H864.33 V28.30 H866.22 V42.90 H868.12 V28.30 H870.01 V42.90 H871.91 V28.30 H873.80 V42.90 H875.70 V28.30 H877.59 V42.90 H879.49 V28.30 H881.38 V42.90 H883.28 V28.30 H885.17 V42.90 H887.07 V28.30 H888.96 V42.90 H890.86 V28.30 H892.75 V42.90 H894.65 V28.30 H896.54 V42.90 H898.44 V28.30 H900.33 V42.90 H902.23 V28.30 H904.12 V42.90 H906.02 V28.30 H907.91 V42.90 H909.81 V28.30 H911.70 V42.90 H913.60 V28.30 H915.49 V42.90 H917.39 V28.30 H919.28 V42.90 H921.18 V28.30 H923.07 V42.90 H924.97 V28.30 H926.86 V42.90 H928.76 V28.30 H930.65 V42.90 H932.55 V28.30 H934.44 V42.90 H936.34 V28.30 H938.23 V42.90 H940.13 V28.30 H942.02 V42.90 H943.92 V28.30 H945.81 V42.90 H947.71 V28.30 H949.60 V42.90 H951.50 V28.30 H953.39 V42.90 H955.29 V28.30 H957.18 V42.90 H959.08 V28.30 H960.97 V42.90 H962.87 V28.30 H964.76 V42.90 H966.66 V28.30 H968.55 V42.90 H970.45 V28.30 H972.34 V42.90 H974.24 V28.30 H976.13 V42.90 H978.03 V28.30 H979.92 V42.90 H981.82 V28.30 H983.71 V42.90 H985.61 V28.30 H987.50 V42.90 H989.40 V28.30 H991.29 V42.90 H993.19 V28.30 H995.08 V42.90 H996.98 V28.30 H998.87 V42.90 H1000.77 V28.30 H1002.66 V42.90 H1004.56 V28.30 H1006.45 V42.90 H1008.35 V28.30 H1010.24 V42.90 H1012.14 V28.30 H1014.03 V42.90 H1015.93 V28.30 H1017.82 V42.90 H1019.72 V28.30 H1021.61 V42.90 H1023.51 V28.30 H1025.40 V42.90 H1027.30 V28.30 H1029.19 V42.90 H1031.09 V28.30 H1032.98 V42.90 H1034.88 V28.30 H1036.77 V42.90 H1038.67 V28.30 H1040.56 V42.90 H1042.46 V28.30 H1044.35 V42.90 H1046.25 V28.30 H1048.14 V42.90 H1050.04 V28.30 H1051.93 V42.90 H1053.83 V28.30 H1055.72 V42.90 H1057.62 V28.30 H1059.51 V42.90 H1061.41 V28.30 H1063.30 V42.90 H1065.20 V28.30 H1067.09 V42.90 H1068.99 V28.30 H1070.88 V42.90 H1072.78 V28.30 H1074.67 V42.90 H1076.57 V28.30 H1078.46 V42.90 H1080.36 V28.30 H1082.25 V42.90 H1084.15 V28.30 H1086.04 V42.90 H1087.94 V28.30 H1089.83 V42.90 H1091.73 V28.30 H1093.62 V42.90 H1095.52 V28.30 H1097.41 V42.90 H1099.31 V28.30 H1101.20 V42.90 H1103.10 V28.30 H1104.99 V42.90 H1106.89 V28.30 H1108.78 V42.90 H1110.68 V28.30 H1112.57 V42.90 H1114.47 V28.30 H1116.36 V42.90 H1118.26 V28.30 H1120.15 V42.90 H1122.05 V28.30 H1123.94 V42.90 H1125.84 V28.30 H1127.73 V42.90 H1129.63 V28.30 H1131.52 V42.90 H1133.42 V28.30 H1135.31 V42.90 H1137.21 V28.30 H1139.10 V42.90 H1141.00 V28.30 H1142.89 V42.90 H1144.79 V28.30 H1146.68 V42.90 H1148.58 V28.30 H1150.47 V42.90 H1152.37 V28.30 H1154.26 V42.90 H1156.16 V28.30 H1158.05 V42.90 H1159.95 V28.30 H1161.84 V42.90 H1163.74 V28.30 H1165.63 V42.90 H1167.53 V28.30 H1169.42 V42.90 H1171.32 V28.30 H1173.21 V42.90 H1175.11 V28.30 H1177.00 V42.90 H1178.90 V28.30 H1180.79 V42.90 H1182.69 V28.30 H1184.58 V42.90 H1186.48 V28.30 H1188.37 V42.90 H1190.27 V28.30 H1192.16 V42.90 H1194.06 V28.30 H1195.95 V42.90 H1197.85 V28.30 H1199.74 V42.90 H1201.64 V28.30 H1203.53 V42.90 H1205.43 V28.30 H1207.32 V42.90 H1209.22 V28.30 H1211.11 V42.90 H1213.01 V28.30 H1214.90 V42.90 H1216.80 V28.30 H1218.69 V42.90 H1220.59 V28.30 H1222.48 V42.90 H1224.38 V28.30 H1226.27 V42.90 H1228.17 V28.30 H1230.06 V42.90 H1231.96 V28.30 H1233.85 V42.90 H1235.75 V28.30 H1237.64 V42.90 H1239.54 V28.30 H1241.43 V42.90 H1243.33 V28.30 H1245.22 V42.90 H1247.12 V28.30 H1249.01 V42.90 H1250.91 V28.30 H1252.80 V42.90 H1254.70 V28.30 H1256.59 V42.90 H1258.49 V28.30 H1260.38 V42.90 H1262.28 V28.30 H1264.17 V42.90 H1266.07 V28.30 H1267.96 V42.90 H1269.86 V28.30 H1271.75 V42.90 H1273.65 V28.30 H1275.54 V42.90 H1277.44 V28.30 H1279.33 V42.90 H1281.23 V28.30 H1283.12 V42.90 H1285.02 V28.30 H1286.91 V42.90 H1288.81 V28.30 H1290.70 V42.90 H1292.60 V28.30 H1294.49 V42.90 H1296.39 V28.30 H1298.28 V42.90 H1300.18 V28.30 H1302.07 V42.90 H1303.97 V28.30 H1305.86 V42.90 H1307.76 V28.30 H1309.65 V42.90 H1311.55 V28.30 H1313.44 V42.90 H1315.34 V28.30 H1317.23 V42.90 H1319.13 V28.30 H1321.02 V42.90 H1322.92 V28.30 H1324.81 V42.90 H1326.71 V28.30 H1328.60 V42.90 H1330.50 V28.30 H1332.39 V42.90 H1334.29 V28.30 H1336.18 V42.90 H1338.08 V28.30 H1339.97 V42.90 H1341.87 V28.30 H1343.76 V42.90 H1345.66 V28.30 H1347.55 V42.90 H1349.45 V28.30 H1351.34 V42.90 H1353.24 V28.30 H1355.13 V42.90 H1357.03 V28.30 H1358.92 V42.90 H1360.82 V28.30 H1362.71 V42.90 H1364.61 V28.30 H1366.50 V42.90 H1368.40 V28.30 H1370.29 V42.90 H1372.19 V28.30 H1374.08 V42.90 H1375.98 V28.30 H1377.87 V42.90 H1379.77 V28.30 H1381.66 V42.90 H1383.56 V28.30 H1385.45 V42.90 H1387.35 V28.30 H1389.24 V42.90 H1391.14 V28.30 H1393.03 V42.90 H1394.93 V28.30 H1396.82 V42.90 H1398.72 V28.30 H1400.61 V42.90 H1402.51 V28.30 H1404.40 V42.90 H1406.30 V28.30 H1408.19 V42.90 H1410.09 V28.30 H1411.98 V42.90 H1413.88 V28.30 H1415.77 V42.90 H1417.67 V28.30 H1419.56 V42.90 H1421.46 V28.30 H1423.35 V42.90 H1425.25 V28.30 H1427.14 V42.90 H1429.04 V28.30 H1430.93 V42.90 H1432.83 V28.30 H1434.72 V42.90 H1436.62 V28.30 H1438.51 V42.90 H1440.41 V28.30 H1442.30 V42.90 H1444.20 V28.30 H1446.09 V42.90 H1447.99 V28.30 H1449.88 V42.90 H1451.78 V28.30 H1453.67 V42.90 H1455.57 V28.30 H1457.46 V42.90 H1459.36 V28.30 H1461.25 V42.90 H1463.15 V28.30 H1465.04 V42.90 H1466.94 V28.30 H1468.83 V42.90 H1470.73 V28.30 H1472.62 V42.90 H1474.52 V28.30 H1476.41 V42.90 H1478.31 V28.30 H1480.20 V42.90 H1482.10 V28.30 H1483.99 V42.90 H1485.89 V28.30 H1487.78 V42.90 H1489.68 V28.30 H1491.57 V42.90 H1493.47 V28.30 H1495.36 V42.90 H1497.26 V28.30 H1499.15 V42.90 H1501.05 V28.30 H1502.94 V42.90 H1504.84 V28.30 H1506.73 V42.90 H1508.63 V28.30 H1510.52 V42.90 H1512.42 V28.30 H1514.31 V42.90 H1516.21 V28.30 H1518.10 V42.90 H1520.00 V28.30 H1521.89 V42.90 H1523.79 V28.30 H1525.68 V42.90 H1527.58 V28.30 H1529.47 V42.90 H1531.37 V28.30 H1533.26 V42.90 H1535.16 V28.30 H1537.05 V42.90 H1538.95 V28.30 H1540.84 V42.90 H1542.74 V28.30 H1544.63 V42.90 H1546.53 V28.30 H1548.42 V42.90 H1550.32 V28.30 H1552.21 V42.90 H1554.11 V28.30 H1556.00 V42.90 H1557.90 V28.30 H1559.79 V42.90 H1561.69 V28.30 H1563.58 V42.90 H1565.48 V28.30 H1567.37 V42.90 H1569.27 V28.30 H1571.16 V42.90 H1573.06 V28.30 H1574.95 V42.90 H1576.85 V28.30 H1578.74 V42.90 H1580.64 V28.30 H1582.53 V42.90 H1584.43 V28.30 H1586.32 V42.90 H1588.22 V28.30 H1590.11 V42.90 H1592.01 V28.30 H1593.90 V42.90 H1595.80 V28.30 H1597.69 V42.90 H1599.59 V28.30 H1601.48 V42.90 H1603.38 V28.30 H1605.27 V42.90 H1607.17 V28.30 H1609.06 V42.90 H1610.96 V28.30 H1612.85 V42.90 H1614.75 V28.30 H1616.64 V42.90 H1618.54 V28.30 H1620.43 V42.90 H1622.33 V28.30 H1624.22 V42.90 H1626.12 V28.30 H1628.01 V42.90 H1629.91 V28.30 H1631.80 V42.90 H1633.70 V28.30 H1635.59 V42.90 H1637.49 V28.30 H1639.38 V42.90 H1641.28 V28.30 H1643.17 V42.90 H1645.07 V28.30 H1646.96 V42.90 H1648.86 V28.30 H1650.75 V42.90 H1652.65 V28.30 H1654.54 V42.90 H1656.44 V28.30 H1658.33 V42.90 H1660.23 V28.30 H1662.12 V42.90 H1664.02 V28.30 H1665.91 V42.90 H1667.81 V28.30 H1669.70 V42.90 H1671.60 V28.30 H1673.49 V42.90 H1675.39 V28.30 H1677.28 V42.90 H1679.18 V28.30 H1681.07 V42.90 H1682.97 V28.30 H1684.86 V42.90 H1686.76 V28.30 H1688.65 V42.90 H1690.55 V28.30 H1692.44 V42.90 H1694.34 V28.30 H1696.23 V42.90 H1698.13 V28.30 H1700.02 V42.90 H1701.92 V28.30 H1703.81 V42.90 H1705.71 V28.30 H1707.60 V42.90 H1709.50 V28.30 H1711.39 V42.90 H1713.29 V28.30 H1715.18 V42.90 H1717.08 V28.30 H1718.97 V42.90 H1720.87 V28.30 H1722.76 V42.90 H1724.66 V28.30 H1726.55 V42.90 H1728.45 V28.30 H1730.34 V42.90 H1732.24 V28.30 H1734.13 V42.90 H1736.03 V28.30 H1737.92 V42.90 H1739.82 V28.30 H1741.71 V42.90 H1743.61 V28.30 H1745.50 V42.90 H1747.40 V28.30 H1749.29 V42.90 H1751.19 V28.30 H1753.08 V42.90 H1754.98 V28.30 H1756.87 V42.90 H1758.77 V28.30 H1760.66 V42.90 H1762.56 V28.30 H1764.45 V42.90 H1766.35 V28.30 H1768.24 V42.90 H1770.14 V28.30 H1772.03 V42.90 H1773.93 V28.30 H1775.82 V42.90 H1777.72 V28.30 H1779.61 V42.90 H1781.51 V28.30 H1783.40 V42.90 H1785.30 V28.30 H1787.19 V42.90 H1789.09 V28.30 H1790.98 V42.90 H1792.88 V28.30 H1794.77 V42.90 H1796.67 V28.30 H1798.56 V42.90 H1800.46 V28.30 H1802.35 V42.90 H1804.25 V28.30 H1806.14 V42.90 H1808.04 V28.30 H1809.93 V42.90 H1811.83 V28.30 H1813.72 V42.90 H1815.62 V28.30 H1817.51 V42.90 H1819.41 V28.30 H1821.30 V42.90 H1823.20 V28.30 H1825.09 V42.90 H1826.99 V28.30 H1828.88 V42.90 H1830.78 V28.30 H1832.67 V42.90 H1834.57 V28.30 H1836.46 V42.90 H1838.36 V28.30 H1840.25 V42.90 H1842.15 V28.30 H1844.04 V42.90 H1845.94 V28.30 H1847.83 V42.90 H1849.73 V28.30 H1851.62 V42.90 H1853.52 V28.30 H1855.41 V42.90 H1857.31 V28.30 H1859.20 V42.90 H1861.10 V28.30 H1862.99 V42.90 H1864.89 V28.30 H1866.78 V42.90 H1868.68 V28.30 H1870.57 V42.90 H1872.47 V28.30 H1874.36 V42.90 H1876.26 V28.30 H1878.15 V42.90 H1880.05 V28.30 H1881.94 V42.90 H1883.84 V28.30 H1885.73 V42.90 H1887.63 V28.30 H1889.52 V42.90 H1891.42 V28.30 H1893.31 V42.90 H1895.21 V28.30 H1897.10 V42.90 H1899.00 V28.30 H1900.89 V42.90 H1902.79 V28.30 H1904.68 V42.90 H1906.58 V28.30 H1908.47 V42.90 H1910.37 V28.30 H1912.26 V42.90 H1914.16 V28.30 H1916.05 V42.90 H1917.95 V28.30 H1919.84 V42.90 H1921.74 V28.30 H1923.63 V42.90 H1925.53 V28.30 H1927.42 V42.90 H1929.32 V28.30 H1931.21 V42.90 H1933.11 V28.30 H1935.00 V42.90 H1936.90 V28.30 H1938.79 V42.90 H1940.69 V28.30 H1942.58 V42.90 H1944.48 V28.30 H1946.37 V42.90 H1948.27 V28.30 H1950.16 V42.90 H1952.06 V28.30 H1953.95 V42.90 H1955.85 V28.30 H1957.74 V42.90 H1959.64 V28.30 H1961.53 V42.90 H1963.43 V28.30 H1965.32 V42.90 H1967.22 V28.30 H1969.11 V42.90 H1971.01 V28.30 H1972.90 V42.90 H1974.80 V28.30 H1976.69 V42.90 H1978.59 V28.30 H1980.48 V42.90 H1982.38 V28.30 H1984.27 V42.90 H1986.17 V28.30 H1988.06 V42.90 H1989.96 V28.30 H1991.85 V42.90 H1993.75 V28.30 H1995.64 V42.90 H1997.54 V28.30 H1999.43 V42.90 H2001.33 V28.30 H2003.22 V42.90 H2005.12 V28.30 H2007.01 V42.90 H2008.91 V28.30 H2010.80 V42.90 H2012.70 V28.30 H2014.59 V42.90 H2016.49 V28.30 H2018.38 V42.90 H2020.28 V28.30 H2022.17 V42.90 H2024.07 V28.30 H2025.96 V42.90 H2027.86 V28.30 H2029.75 V42.90 H2031.65 V28.30 H2033.54 V42.90 H2035.44 V28.30 H2037.33 V42.90 H2039.23 V28.30 H2041.12 V42.90 H2043.02 V28.30 H2044.91 V42.90 H2046.81 V28.30 H2048.70 V42.90 H2050.60 V28.30 H2052.49 V42.90 H2054.39 V28.30 H2056.28 V42.90 H2058.18 V28.30 H2060.07 V42.90 H2061.97 V28.30 H2063.86 V42.90 H2065.76 V28.30 H2067.65 V42.90 H2069.55 V28.30 H2071.44 V42.90 H2073.34 V28.30 H2075.23 V42.90 H2077.13 V28.30 H2079.02 V42.90 H2080.92 V28.30 H2082.81 V42.90 H2084.71 V28.30 H2086.60 V42.90 H2088.50 V28.30 H2090.39 V42.90 H2092.29 V28.30 H2094.18 V42.90 H2096.08 V28.30 H2097.97 V42.90 H2099.87 V28.30 H2101.76 V42.90 H2103.66 V28.30 H2105.55 V42.90 H2107.45 V28.30 H2109.34 V42.90 H2111.24 V28.30 H2113.13 V42.90 H2115.03 V28.30 H2116.92 V42.90 H2118.82 V28.30 H2120.71 V42.90 H2122.61 V28.30 H2124.50 V42.90 H2126.40 V28.30 H2128.29 V42.90 H2130.19 V28.30 H2132.08 V42.90 H2133.98 V28.30 H2135.87 V42.90 H2137.77 V28.30 H2139.66 V42.90 H2141.56 V28.30 H2143.45 V42.90 H2145.35 V28.30 H2147.24 V42.90 H2149.14 V28.30 H2151.03 V42.90 H2152.93 V28.30 H2154.82 V42.90 H2156.72 V28.30 H2158.61 V42.90 H2160.51 V28.30 H2162.40 V42.90 H2164.30 V28.30 H2165.00" fill="none" stroke="#2AC82A" stroke-width="1.05"/><rect x="4" y="47.67" width="2161" height="2" fill="#1F9A1F"/><path d="M4.00 88.51 H116.50" stroke="#22B822" stroke-width="1.8" fill="none"/><path d="M116.50 88.51 V101.31" stroke="#22B022" stroke-width="1.6"/><path d="M116.50 101.31 H215.60" stroke="#136E13" stroke-width="2.6" fill="none"/><path d="M215.60 88.51 V101.31" stroke="#22B022" stroke-width="1.6"/><path d="M215.60 88.51 H359.20" stroke="#22B822" stroke-width="1.8" fill="none"/><path d="M359.20 88.51 V101.31" stroke="#22B022" stroke-width="1.6"/><path d="M359.20 101.31 H457.70" stroke="#136E13" stroke-width="2.6" fill="none"/><path d="M457.70 88.51 V101.31" stroke="#22B022" stroke-width="1.6"/><path d="M457.70 88.51 H601.90" stroke="#22B822" stroke-width="1.8" fill="none"/><path d="M601.90 88.51 V101.31" stroke="#22B022" stroke-width="1.6"/><path d="M601.90 101.31 H699.80" stroke="#136E13" stroke-width="2.6" fill="none"/><path d="M699.80 88.51 V101.31" stroke="#22B022" stroke-width="1.6"/><path d="M699.80 88.51 H844.60" stroke="#22B822" stroke-width="1.8" fill="none"/><path d="M844.60 88.51 V101.31" stroke="#22B022" stroke-width="1.6"/><path d="M844.60 101.31 H941.90" stroke="#136E13" stroke-width="2.6" fill="none"/><path d="M941.90 88.51 V101.31" stroke="#22B022" stroke-width="1.6"/><path d="M941.90 88.51 H1087.30" stroke="#22B822" stroke-width="1.8" fill="none"/><path d="M1087.30 88.51 V101.31" stroke="#22B022" stroke-width="1.6"/><path d="M1087.30 101.31 H1184.00" stroke="#136E13" stroke-width="2.6" fill="none"/><path d="M1184.00 88.51 V101.31" stroke="#22B022" stroke-width="1.6"/><path d="M1184.00 88.51 H1330.00" stroke="#22B822" stroke-width="1.8" fill="none"/><path d="M1330.00 88.51 V101.31" stroke="#22B022" stroke-width="1.6"/><path d="M1330.00 101.31 H1426.10" stroke="#136E13" stroke-width="2.6" fill="none"/><path d="M1426.10 88.51 V101.31" stroke="#22B022" stroke-width="1.6"/><path d="M1426.10 88.51 H1572.70" stroke="#22B822" stroke-width="1.8" fill="none"/><path d="M1572.70 88.51 V101.31" stroke="#22B022" stroke-width="1.6"/><path d="M1572.70 101.31 H1668.20" stroke="#136E13" stroke-width="2.6" fill="none"/><path d="M1668.20 88.51 V101.31" stroke="#22B022" stroke-width="1.6"/><path d="M1668.20 88.51 H1815.40" stroke="#22B822" stroke-width="1.8" fill="none"/><path d="M1815.40 88.51 V101.31" stroke="#22B022" stroke-width="1.6"/><path d="M1815.40 101.31 H1910.30" stroke="#136E13" stroke-width="2.6" fill="none"/><path d="M1910.30 88.51 V101.31" stroke="#22B022" stroke-width="1.6"/><path d="M1910.30 88.51 H2058.10" stroke="#22B822" stroke-width="1.8" fill="none"/><path d="M2058.10 88.51 V101.31" stroke="#22B022" stroke-width="1.6"/><path d="M2058.10 101.31 H2152.40" stroke="#136E13" stroke-width="2.6" fill="none"/><path d="M2152.40 88.51 V101.31" stroke="#22B022" stroke-width="1.6"/><path d="M2152.40 88.51 H2165.00" stroke="#22B822" stroke-width="1.8" fill="none"/><path d="M4 160.32 H108.60 V147.52 H112.30 V160.32 H351.20 V147.52 H354.90 V160.32 H593.80 V147.52 H597.50 V160.32 H836.40 V147.52 H840.10 V160.32 H1079.00 V147.52 H1082.70 V160.32 H1321.60 V147.52 H1325.30 V160.32 H1564.20 V147.52 H1567.90 V160.32 H1806.80 V147.52 H1810.50 V160.32 H2049.40 V147.52 H2053.10 V160.32 H2165" fill="none" stroke="#22B022" stroke-width="1.7"/><path d="M4 67.64 H2165 M4 82.24 H2165" stroke="#507A50" stroke-width="2.2" fill="none"/><path d="M4 165.99 H2165 M4 180.59 H2165" stroke="#6E9A6E" stroke-width="2.2" fill="none"/><path d="M4 185.66 H2165 M4 200.26 H2165" stroke="#6E9A6E" stroke-width="2.2" fill="none"/><path d="M4 205.33 H2165 M4 219.93 H2165" stroke="#6E9A6E" stroke-width="2.2" fill="none"/><path d="M4 106.98 H1082 L1086 121.58 H2165 M4 121.58 H1082 L1086 106.98 H2165" stroke="#6E9A6E" stroke-width="2.2" fill="none"/><rect x="4" y="126.65" width="2161" height="14.60" fill="#243E24"/><path d="M4.00 126.65 L5.20 141.25 M4.00 141.25 L5.20 126.65 M5.20 126.65 H7.79 M5.20 141.25 H7.79 M7.79 126.65 L8.99 141.25 M7.79 141.25 L8.99 126.65 M8.99 126.65 H11.58 M8.99 141.25 H11.58 M11.58 126.65 L12.78 141.25 M11.58 141.25 L12.78 126.65 M12.78 126.65 H15.37 M12.78 141.25 H15.37 M15.37 126.65 L16.57 141.25 M15.37 141.25 L16.57 126.65 M16.57 126.65 H19.16 M16.57 141.25 H19.16 M19.16 126.65 L20.36 141.25 M19.16 141.25 L20.36 126.65 M20.36 126.65 H22.95 M20.36 141.25 H22.95 M22.95 126.65 L24.15 141.25 M22.95 141.25 L24.15 126.65 M24.15 126.65 H26.74 M24.15 141.25 H26.74 M26.74 126.65 L27.94 141.25 M26.74 141.25 L27.94 126.65 M27.94 126.65 H30.53 M27.94 141.25 H30.53 M30.53 126.65 L31.73 141.25 M30.53 141.25 L31.73 126.65 M31.73 126.65 H34.32 M31.73 141.25 H34.32 M34.32 126.65 L35.52 141.25 M34.32 141.25 L35.52 126.65 M35.52 126.65 H38.11 M35.52 141.25 H38.11 M38.11 126.65 L39.31 141.25 M38.11 141.25 L39.31 126.65 M39.31 126.65 H41.90 M39.31 141.25 H41.90 M41.90 126.65 L43.10 141.25 M41.90 141.25 L43.10 126.65 M43.10 126.65 H45.69 M43.10 141.25 H45.69 M45.69 126.65 L46.89 141.25 M45.69 141.25 L46.89 126.65 M46.89 126.65 H49.48 M46.89 141.25 H49.48 M49.48 126.65 L50.68 141.25 M49.48 141.25 L50.68 126.65 M50.68 126.65 H53.27 M50.68 141.25 H53.27 M53.27 126.65 L54.47 141.25 M53.27 141.25 L54.47 126.65 M54.47 126.65 H57.06 M54.47 141.25 H57.06 M57.06 126.65 L58.26 141.25 M57.06 141.25 L58.26 126.65 M58.26 126.65 H60.85 M58.26 141.25 H60.85 M60.85 126.65 L62.05 141.25 M60.85 141.25 L62.05 126.65 M62.05 126.65 H64.64 M62.05 141.25 H64.64 M64.64 126.65 L65.84 141.25 M64.64 141.25 L65.84 126.65 M65.84 126.65 H68.43 M65.84 141.25 H68.43 M68.43 126.65 L69.63 141.25 M68.43 141.25 L69.63 126.65 M69.63 126.65 H72.22 M69.63 141.25 H72.22 M72.22 126.65 L73.42 141.25 M72.22 141.25 L73.42 126.65 M73.42 126.65 H76.01 M73.42 141.25 H76.01 M76.01 126.65 L77.21 141.25 M76.01 141.25 L77.21 126.65 M77.21 126.65 H79.80 M77.21 141.25 H79.80 M79.80 126.65 L81.00 141.25 M79.80 141.25 L81.00 126.65 M81.00 126.65 H83.59 M81.00 141.25 H83.59 M83.59 126.65 L84.79 141.25 M83.59 141.25 L84.79 126.65 M84.79 126.65 H87.38 M84.79 141.25 H87.38 M87.38 126.65 L88.58 141.25 M87.38 141.25 L88.58 126.65 M88.58 126.65 H91.17 M88.58 141.25 H91.17 M91.17 126.65 L92.37 141.25 M91.17 141.25 L92.37 126.65 M92.37 126.65 H94.96 M92.37 141.25 H94.96 M94.96 126.65 L96.16 141.25 M94.96 141.25 L96.16 126.65 M96.16 126.65 H98.75 M96.16 141.25 H98.75 M98.75 126.65 L99.95 141.25 M98.75 141.25 L99.95 126.65 M99.95 126.65 H102.54 M99.95 141.25 H102.54 M102.54 126.65 L103.74 141.25 M102.54 141.25 L103.74 126.65 M103.74 126.65 H106.33 M103.74 141.25 H106.33 M106.33 126.65 L107.53 141.25 M106.33 141.25 L107.53 126.65 M107.53 126.65 H110.12 M107.53 141.25 H110.12 M110.12 126.65 L111.32 141.25 M110.12 141.25 L111.32 126.65 M111.32 126.65 H113.91 M111.32 141.25 H113.91 M113.91 126.65 L115.11 141.25 M113.91 141.25 L115.11 126.65 M115.11 126.65 H117.70 M115.11 141.25 H117.70 M117.70 126.65 L118.90 141.25 M117.70 141.25 L118.90 126.65 M118.90 126.65 H121.49 M118.90 141.25 H121.49 M121.49 126.65 L122.69 141.25 M121.49 141.25 L122.69 126.65 M122.69 126.65 H125.28 M122.69 141.25 H125.28 M125.28 126.65 L126.48 141.25 M125.28 141.25 L126.48 126.65 M126.48 126.65 H129.07 M126.48 141.25 H129.07 M129.07 126.65 L130.27 141.25 M129.07 141.25 L130.27 126.65 M130.27 126.65 H132.86 M130.27 141.25 H132.86 M132.86 126.65 L134.06 141.25 M132.86 141.25 L134.06 126.65 M134.06 126.65 H136.65 M134.06 141.25 H136.65 M136.65 126.65 L137.85 141.25 M136.65 141.25 L137.85 126.65 M137.85 126.65 H140.44 M137.85 141.25 H140.44 M140.44 126.65 L141.64 141.25 M140.44 141.25 L141.64 126.65 M141.64 126.65 H144.23 M141.64 141.25 H144.23 M144.23 126.65 L145.43 141.25 M144.23 141.25 L145.43 126.65 M145.43 126.65 H148.02 M145.43 141.25 H148.02 M148.02 126.65 L149.22 141.25 M148.02 141.25 L149.22 126.65 M149.22 126.65 H151.81 M149.22 141.25 H151.81 M151.81 126.65 L153.01 141.25 M151.81 141.25 L153.01 126.65 M153.01 126.65 H155.60 M153.01 141.25 H155.60 M155.60 126.65 L156.80 141.25 M155.60 141.25 L156.80 126.65 M156.80 126.65 H159.39 M156.80 141.25 H159.39 M159.39 126.65 L160.59 141.25 M159.39 141.25 L160.59 126.65 M160.59 126.65 H163.18 M160.59 141.25 H163.18 M163.18 126.65 L164.38 141.25 M163.18 141.25 L164.38 126.65 M164.38 126.65 H166.97 M164.38 141.25 H166.97 M166.97 126.65 L168.17 141.25 M166.97 141.25 L168.17 126.65 M168.17 126.65 H170.76 M168.17 141.25 H170.76 M170.76 126.65 L171.96 141.25 M170.76 141.25 L171.96 126.65 M171.96 126.65 H174.55 M171.96 141.25 H174.55 M174.55 126.65 L175.75 141.25 M174.55 141.25 L175.75 126.65 M175.75 126.65 H178.34 M175.75 141.25 H178.34 M178.34 126.65 L179.54 141.25 M178.34 141.25 L179.54 126.65 M179.54 126.65 H182.13 M179.54 141.25 H182.13 M182.13 126.65 L183.33 141.25 M182.13 141.25 L183.33 126.65 M183.33 126.65 H185.92 M183.33 141.25 H185.92 M185.92 126.65 L187.12 141.25 M185.92 141.25 L187.12 126.65 M187.12 126.65 H189.71 M187.12 141.25 H189.71 M189.71 126.65 L190.91 141.25 M189.71 141.25 L190.91 126.65 M190.91 126.65 H193.50 M190.91 141.25 H193.50 M193.50 126.65 L194.70 141.25 M193.50 141.25 L194.70 126.65 M194.70 126.65 H197.29 M194.70 141.25 H197.29 M197.29 126.65 L198.49 141.25 M197.29 141.25 L198.49 126.65 M198.49 126.65 H201.08 M198.49 141.25 H201.08 M201.08 126.65 L202.28 141.25 M201.08 141.25 L202.28 126.65 M202.28 126.65 H204.87 M202.28 141.25 H204.87 M204.87 126.65 L206.07 141.25 M204.87 141.25 L206.07 126.65 M206.07 126.65 H208.66 M206.07 141.25 H208.66 M208.66 126.65 L209.86 141.25 M208.66 141.25 L209.86 126.65 M209.86 126.65 H212.45 M209.86 141.25 H212.45 M212.45 126.65 L213.65 141.25 M212.45 141.25 L213.65 126.65 M213.65 126.65 H216.24 M213.65 141.25 H216.24 M216.24 126.65 L217.44 141.25 M216.24 141.25 L217.44 126.65 M217.44 126.65 H220.03 M217.44 141.25 H220.03 M220.03 126.65 L221.23 141.25 M220.03 141.25 L221.23 126.65 M221.23 126.65 H223.82 M221.23 141.25 H223.82 M223.82 126.65 L225.02 141.25 M223.82 141.25 L225.02 126.65 M225.02 126.65 H227.61 M225.02 141.25 H227.61 M227.61 126.65 L228.81 141.25 M227.61 141.25 L228.81 126.65 M228.81 126.65 H231.40 M228.81 141.25 H231.40 M231.40 126.65 L232.60 141.25 M231.40 141.25 L232.60 126.65 M232.60 126.65 H235.19 M232.60 141.25 H235.19 M235.19 126.65 L236.39 141.25 M235.19 141.25 L236.39 126.65 M236.39 126.65 H238.98 M236.39 141.25 H238.98 M238.98 126.65 L240.18 141.25 M238.98 141.25 L240.18 126.65 M240.18 126.65 H242.77 M240.18 141.25 H242.77 M242.77 126.65 L243.97 141.25 M242.77 141.25 L243.97 126.65 M243.97 126.65 H246.56 M243.97 141.25 H246.56 M246.56 126.65 L247.76 141.25 M246.56 141.25 L247.76 126.65 M247.76 126.65 H250.35 M247.76 141.25 H250.35 M250.35 126.65 L251.55 141.25 M250.35 141.25 L251.55 126.65 M251.55 126.65 H254.14 M251.55 141.25 H254.14 M254.14 126.65 L255.34 141.25 M254.14 141.25 L255.34 126.65 M255.34 126.65 H257.93 M255.34 141.25 H257.93 M257.93 126.65 L259.13 141.25 M257.93 141.25 L259.13 126.65 M259.13 126.65 H261.72 M259.13 141.25 H261.72 M261.72 126.65 L262.92 141.25 M261.72 141.25 L262.92 126.65 M262.92 126.65 H265.51 M262.92 141.25 H265.51 M265.51 126.65 L266.71 141.25 M265.51 141.25 L266.71 126.65 M266.71 126.65 H269.30 M266.71 141.25 H269.30 M269.30 126.65 L270.50 141.25 M269.30 141.25 L270.50 126.65 M270.50 126.65 H273.09 M270.50 141.25 H273.09 M273.09 126.65 L274.29 141.25 M273.09 141.25 L274.29 126.65 M274.29 126.65 H276.88 M274.29 141.25 H276.88 M276.88 126.65 L278.08 141.25 M276.88 141.25 L278.08 126.65 M278.08 126.65 H280.67 M278.08 141.25 H280.67 M280.67 126.65 L281.87 141.25 M280.67 141.25 L281.87 126.65 M281.87 126.65 H284.46 M281.87 141.25 H284.46 M284.46 126.65 L285.66 141.25 M284.46 141.25 L285.66 126.65 M285.66 126.65 H288.25 M285.66 141.25 H288.25 M288.25 126.65 L289.45 141.25 M288.25 141.25 L289.45 126.65 M289.45 126.65 H292.04 M289.45 141.25 H292.04 M292.04 126.65 L293.24 141.25 M292.04 141.25 L293.24 126.65 M293.24 126.65 H295.83 M293.24 141.25 H295.83 M295.83 126.65 L297.03 141.25 M295.83 141.25 L297.03 126.65 M297.03 126.65 H299.62 M297.03 141.25 H299.62 M299.62 126.65 L300.82 141.25 M299.62 141.25 L300.82 126.65 M300.82 126.65 H303.41 M300.82 141.25 H303.41 M303.41 126.65 L304.61 141.25 M303.41 141.25 L304.61 126.65 M304.61 126.65 H307.20 M304.61 141.25 H307.20 M307.20 126.65 L308.40 141.25 M307.20 141.25 L308.40 126.65 M308.40 126.65 H310.99 M308.40 141.25 H310.99 M310.99 126.65 L312.19 141.25 M310.99 141.25 L312.19 126.65 M312.19 126.65 H314.78 M312.19 141.25 H314.78 M314.78 126.65 L315.98 141.25 M314.78 141.25 L315.98 126.65 M315.98 126.65 H318.57 M315.98 141.25 H318.57 M318.57 126.65 L319.77 141.25 M318.57 141.25 L319.77 126.65 M319.77 126.65 H322.36 M319.77 141.25 H322.36 M322.36 126.65 L323.56 141.25 M322.36 141.25 L323.56 126.65 M323.56 126.65 H326.15 M323.56 141.25 H326.15 M326.15 126.65 L327.35 141.25 M326.15 141.25 L327.35 126.65 M327.35 126.65 H329.94 M327.35 141.25 H329.94 M329.94 126.65 L331.14 141.25 M329.94 141.25 L331.14 126.65 M331.14 126.65 H333.73 M331.14 141.25 H333.73 M333.73 126.65 L334.93 141.25 M333.73 141.25 L334.93 126.65 M334.93 126.65 H337.52 M334.93 141.25 H337.52 M337.52 126.65 L338.72 141.25 M337.52 141.25 L338.72 126.65 M338.72 126.65 H341.31 M338.72 141.25 H341.31 M341.31 126.65 L342.51 141.25 M341.31 141.25 L342.51 126.65 M342.51 126.65 H345.10 M342.51 141.25 H345.10 M345.10 126.65 L346.30 141.25 M345.10 141.25 L346.30 126.65 M346.30 126.65 H348.89 M346.30 141.25 H348.89 M348.89 126.65 L350.09 141.25 M348.89 141.25 L350.09 126.65 M350.09 126.65 H352.68 M350.09 141.25 H352.68 M352.68 126.65 L353.88 141.25 M352.68 141.25 L353.88 126.65 M353.88 126.65 H356.47 M353.88 141.25 H356.47 M356.47 126.65 L357.67 141.25 M356.47 141.25 L357.67 126.65 M357.67 126.65 H360.26 M357.67 141.25 H360.26 M360.26 126.65 L361.46 141.25 M360.26 141.25 L361.46 126.65 M361.46 126.65 H364.05 M361.46 141.25 H364.05 M364.05 126.65 L365.25 141.25 M364.05 141.25 L365.25 126.65 M365.25 126.65 H367.84 M365.25 141.25 H367.84 M367.84 126.65 L369.04 141.25 M367.84 141.25 L369.04 126.65 M369.04 126.65 H371.63 M369.04 141.25 H371.63 M371.63 126.65 L372.83 141.25 M371.63 141.25 L372.83 126.65 M372.83 126.65 H375.42 M372.83 141.25 H375.42 M375.42 126.65 L376.62 141.25 M375.42 141.25 L376.62 126.65 M376.62 126.65 H379.21 M376.62 141.25 H379.21 M379.21 126.65 L380.41 141.25 M379.21 141.25 L380.41 126.65 M380.41 126.65 H383.00 M380.41 141.25 H383.00 M383.00 126.65 L384.20 141.25 M383.00 141.25 L384.20 126.65 M384.20 126.65 H386.79 M384.20 141.25 H386.79 M386.79 126.65 L387.99 141.25 M386.79 141.25 L387.99 126.65 M387.99 126.65 H390.58 M387.99 141.25 H390.58 M390.58 126.65 L391.78 141.25 M390.58 141.25 L391.78 126.65 M391.78 126.65 H394.37 M391.78 141.25 H394.37 M394.37 126.65 L395.57 141.25 M394.37 141.25 L395.57 126.65 M395.57 126.65 H398.16 M395.57 141.25 H398.16 M398.16 126.65 L399.36 141.25 M398.16 141.25 L399.36 126.65 M399.36 126.65 H401.95 M399.36 141.25 H401.95 M401.95 126.65 L403.15 141.25 M401.95 141.25 L403.15 126.65 M403.15 126.65 H405.74 M403.15 141.25 H405.74 M405.74 126.65 L406.94 141.25 M405.74 141.25 L406.94 126.65 M406.94 126.65 H409.53 M406.94 141.25 H409.53 M409.53 126.65 L410.73 141.25 M409.53 141.25 L410.73 126.65 M410.73 126.65 H413.32 M410.73 141.25 H413.32 M413.32 126.65 L414.52 141.25 M413.32 141.25 L414.52 126.65 M414.52 126.65 H417.11 M414.52 141.25 H417.11 M417.11 126.65 L418.31 141.25 M417.11 141.25 L418.31 126.65 M418.31 126.65 H420.90 M418.31 141.25 H420.90 M420.90 126.65 L422.10 141.25 M420.90 141.25 L422.10 126.65 M422.10 126.65 H424.69 M422.10 141.25 H424.69 M424.69 126.65 L425.89 141.25 M424.69 141.25 L425.89 126.65 M425.89 126.65 H428.48 M425.89 141.25 H428.48 M428.48 126.65 L429.68 141.25 M428.48 141.25 L429.68 126.65 M429.68 126.65 H432.27 M429.68 141.25 H432.27 M432.27 126.65 L433.47 141.25 M432.27 141.25 L433.47 126.65 M433.47 126.65 H436.06 M433.47 141.25 H436.06 M436.06 126.65 L437.26 141.25 M436.06 141.25 L437.26 126.65 M437.26 126.65 H439.85 M437.26 141.25 H439.85 M439.85 126.65 L441.05 141.25 M439.85 141.25 L441.05 126.65 M441.05 126.65 H443.64 M441.05 141.25 H443.64 M443.64 126.65 L444.84 141.25 M443.64 141.25 L444.84 126.65 M444.84 126.65 H447.43 M444.84 141.25 H447.43 M447.43 126.65 L448.63 141.25 M447.43 141.25 L448.63 126.65 M448.63 126.65 H451.22 M448.63 141.25 H451.22 M451.22 126.65 L452.42 141.25 M451.22 141.25 L452.42 126.65 M452.42 126.65 H455.01 M452.42 141.25 H455.01 M455.01 126.65 L456.21 141.25 M455.01 141.25 L456.21 126.65 M456.21 126.65 H458.80 M456.21 141.25 H458.80 M458.80 126.65 L460.00 141.25 M458.80 141.25 L460.00 126.65 M460.00 126.65 H462.59 M460.00 141.25 H462.59 M462.59 126.65 L463.79 141.25 M462.59 141.25 L463.79 126.65 M463.79 126.65 H466.38 M463.79 141.25 H466.38 M466.38 126.65 L467.58 141.25 M466.38 141.25 L467.58 126.65 M467.58 126.65 H470.17 M467.58 141.25 H470.17 M470.17 126.65 L471.37 141.25 M470.17 141.25 L471.37 126.65 M471.37 126.65 H473.96 M471.37 141.25 H473.96 M473.96 126.65 L475.16 141.25 M473.96 141.25 L475.16 126.65 M475.16 126.65 H477.75 M475.16 141.25 H477.75 M477.75 126.65 L478.95 141.25 M477.75 141.25 L478.95 126.65 M478.95 126.65 H481.54 M478.95 141.25 H481.54 M481.54 126.65 L482.74 141.25 M481.54 141.25 L482.74 126.65 M482.74 126.65 H485.33 M482.74 141.25 H485.33 M485.33 126.65 L486.53 141.25 M485.33 141.25 L486.53 126.65 M486.53 126.65 H489.12 M486.53 141.25 H489.12 M489.12 126.65 L490.32 141.25 M489.12 141.25 L490.32 126.65 M490.32 126.65 H492.91 M490.32 141.25 H492.91 M492.91 126.65 L494.11 141.25 M492.91 141.25 L494.11 126.65 M494.11 126.65 H496.70 M494.11 141.25 H496.70 M496.70 126.65 L497.90 141.25 M496.70 141.25 L497.90 126.65 M497.90 126.65 H500.49 M497.90 141.25 H500.49 M500.49 126.65 L501.69 141.25 M500.49 141.25 L501.69 126.65 M501.69 126.65 H504.28 M501.69 141.25 H504.28 M504.28 126.65 L505.48 141.25 M504.28 141.25 L505.48 126.65 M505.48 126.65 H508.07 M505.48 141.25 H508.07 M508.07 126.65 L509.27 141.25 M508.07 141.25 L509.27 126.65 M509.27 126.65 H511.86 M509.27 141.25 H511.86 M511.86 126.65 L513.06 141.25 M511.86 141.25 L513.06 126.65 M513.06 126.65 H515.65 M513.06 141.25 H515.65 M515.65 126.65 L516.85 141.25 M515.65 141.25 L516.85 126.65 M516.85 126.65 H519.44 M516.85 141.25 H519.44 M519.44 126.65 L520.64 141.25 M519.44 141.25 L520.64 126.65 M520.64 126.65 H523.23 M520.64 141.25 H523.23 M523.23 126.65 L524.43 141.25 M523.23 141.25 L524.43 126.65 M524.43 126.65 H527.02 M524.43 141.25 H527.02 M527.02 126.65 L528.22 141.25 M527.02 141.25 L528.22 126.65 M528.22 126.65 H530.81 M528.22 141.25 H530.81 M530.81 126.65 L532.01 141.25 M530.81 141.25 L532.01 126.65 M532.01 126.65 H534.60 M532.01 141.25 H534.60 M534.60 126.65 L535.80 141.25 M534.60 141.25 L535.80 126.65 M535.80 126.65 H538.39 M535.80 141.25 H538.39 M538.39 126.65 L539.59 141.25 M538.39 141.25 L539.59 126.65 M539.59 126.65 H542.18 M539.59 141.25 H542.18 M542.18 126.65 L543.38 141.25 M542.18 141.25 L543.38 126.65 M543.38 126.65 H545.97 M543.38 141.25 H545.97 M545.97 126.65 L547.17 141.25 M545.97 141.25 L547.17 126.65 M547.17 126.65 H549.76 M547.17 141.25 H549.76 M549.76 126.65 L550.96 141.25 M549.76 141.25 L550.96 126.65 M550.96 126.65 H553.55 M550.96 141.25 H553.55 M553.55 126.65 L554.75 141.25 M553.55 141.25 L554.75 126.65 M554.75 126.65 H557.34 M554.75 141.25 H557.34 M557.34 126.65 L558.54 141.25 M557.34 141.25 L558.54 126.65 M558.54 126.65 H561.13 M558.54 141.25 H561.13 M561.13 126.65 L562.33 141.25 M561.13 141.25 L562.33 126.65 M562.33 126.65 H564.92 M562.33 141.25 H564.92 M564.92 126.65 L566.12 141.25 M564.92 141.25 L566.12 126.65 M566.12 126.65 H568.71 M566.12 141.25 H568.71 M568.71 126.65 L569.91 141.25 M568.71 141.25 L569.91 126.65 M569.91 126.65 H572.50 M569.91 141.25 H572.50 M572.50 126.65 L573.70 141.25 M572.50 141.25 L573.70 126.65 M573.70 126.65 H576.29 M573.70 141.25 H576.29 M576.29 126.65 L577.49 141.25 M576.29 141.25 L577.49 126.65 M577.49 126.65 H580.08 M577.49 141.25 H580.08 M580.08 126.65 L581.28 141.25 M580.08 141.25 L581.28 126.65 M581.28 126.65 H583.87 M581.28 141.25 H583.87 M583.87 126.65 L585.07 141.25 M583.87 141.25 L585.07 126.65 M585.07 126.65 H587.66 M585.07 141.25 H587.66 M587.66 126.65 L588.86 141.25 M587.66 141.25 L588.86 126.65 M588.86 126.65 H591.45 M588.86 141.25 H591.45 M591.45 126.65 L592.65 141.25 M591.45 141.25 L592.65 126.65 M592.65 126.65 H595.24 M592.65 141.25 H595.24 M595.24 126.65 L596.44 141.25 M595.24 141.25 L596.44 126.65 M596.44 126.65 H599.03 M596.44 141.25 H599.03 M599.03 126.65 L600.23 141.25 M599.03 141.25 L600.23 126.65 M600.23 126.65 H602.82 M600.23 141.25 H602.82 M602.82 126.65 L604.02 141.25 M602.82 141.25 L604.02 126.65 M604.02 126.65 H606.61 M604.02 141.25 H606.61 M606.61 126.65 L607.81 141.25 M606.61 141.25 L607.81 126.65 M607.81 126.65 H610.40 M607.81 141.25 H610.40 M610.40 126.65 L611.60 141.25 M610.40 141.25 L611.60 126.65 M611.60 126.65 H614.19 M611.60 141.25 H614.19 M614.19 126.65 L615.39 141.25 M614.19 141.25 L615.39 126.65 M615.39 126.65 H617.98 M615.39 141.25 H617.98 M617.98 126.65 L619.18 141.25 M617.98 141.25 L619.18 126.65 M619.18 126.65 H621.77 M619.18 141.25 H621.77 M621.77 126.65 L622.97 141.25 M621.77 141.25 L622.97 126.65 M622.97 126.65 H625.56 M622.97 141.25 H625.56 M625.56 126.65 L626.76 141.25 M625.56 141.25 L626.76 126.65 M626.76 126.65 H629.35 M626.76 141.25 H629.35 M629.35 126.65 L630.55 141.25 M629.35 141.25 L630.55 126.65 M630.55 126.65 H633.14 M630.55 141.25 H633.14 M633.14 126.65 L634.34 141.25 M633.14 141.25 L634.34 126.65 M634.34 126.65 H636.93 M634.34 141.25 H636.93 M636.93 126.65 L638.13 141.25 M636.93 141.25 L638.13 126.65 M638.13 126.65 H640.72 M638.13 141.25 H640.72 M640.72 126.65 L641.92 141.25 M640.72 141.25 L641.92 126.65 M641.92 126.65 H644.51 M641.92 141.25 H644.51 M644.51 126.65 L645.71 141.25 M644.51 141.25 L645.71 126.65 M645.71 126.65 H648.30 M645.71 141.25 H648.30 M648.30 126.65 L649.50 141.25 M648.30 141.25 L649.50 126.65 M649.50 126.65 H652.09 M649.50 141.25 H652.09 M652.09 126.65 L653.29 141.25 M652.09 141.25 L653.29 126.65 M653.29 126.65 H655.88 M653.29 141.25 H655.88 M655.88 126.65 L657.08 141.25 M655.88 141.25 L657.08 126.65 M657.08 126.65 H659.67 M657.08 141.25 H659.67 M659.67 126.65 L660.87 141.25 M659.67 141.25 L660.87 126.65 M660.87 126.65 H663.46 M660.87 141.25 H663.46 M663.46 126.65 L664.66 141.25 M663.46 141.25 L664.66 126.65 M664.66 126.65 H667.25 M664.66 141.25 H667.25 M667.25 126.65 L668.45 141.25 M667.25 141.25 L668.45 126.65 M668.45 126.65 H671.04 M668.45 141.25 H671.04 M671.04 126.65 L672.24 141.25 M671.04 141.25 L672.24 126.65 M672.24 126.65 H674.83 M672.24 141.25 H674.83 M674.83 126.65 L676.03 141.25 M674.83 141.25 L676.03 126.65 M676.03 126.65 H678.62 M676.03 141.25 H678.62 M678.62 126.65 L679.82 141.25 M678.62 141.25 L679.82 126.65 M679.82 126.65 H682.41 M679.82 141.25 H682.41 M682.41 126.65 L683.61 141.25 M682.41 141.25 L683.61 126.65 M683.61 126.65 H686.20 M683.61 141.25 H686.20 M686.20 126.65 L687.40 141.25 M686.20 141.25 L687.40 126.65 M687.40 126.65 H689.99 M687.40 141.25 H689.99 M689.99 126.65 L691.19 141.25 M689.99 141.25 L691.19 126.65 M691.19 126.65 H693.78 M691.19 141.25 H693.78 M693.78 126.65 L694.98 141.25 M693.78 141.25 L694.98 126.65 M694.98 126.65 H697.57 M694.98 141.25 H697.57 M697.57 126.65 L698.77 141.25 M697.57 141.25 L698.77 126.65 M698.77 126.65 H701.36 M698.77 141.25 H701.36 M701.36 126.65 L702.56 141.25 M701.36 141.25 L702.56 126.65 M702.56 126.65 H705.15 M702.56 141.25 H705.15 M705.15 126.65 L706.35 141.25 M705.15 141.25 L706.35 126.65 M706.35 126.65 H708.94 M706.35 141.25 H708.94 M708.94 126.65 L710.14 141.25 M708.94 141.25 L710.14 126.65 M710.14 126.65 H712.73 M710.14 141.25 H712.73 M712.73 126.65 L713.93 141.25 M712.73 141.25 L713.93 126.65 M713.93 126.65 H716.52 M713.93 141.25 H716.52 M716.52 126.65 L717.72 141.25 M716.52 141.25 L717.72 126.65 M717.72 126.65 H720.31 M717.72 141.25 H720.31 M720.31 126.65 L721.51 141.25 M720.31 141.25 L721.51 126.65 M721.51 126.65 H724.10 M721.51 141.25 H724.10 M724.10 126.65 L725.30 141.25 M724.10 141.25 L725.30 126.65 M725.30 126.65 H727.89 M725.30 141.25 H727.89 M727.89 126.65 L729.09 141.25 M727.89 141.25 L729.09 126.65 M729.09 126.65 H731.68 M729.09 141.25 H731.68 M731.68 126.65 L732.88 141.25 M731.68 141.25 L732.88 126.65 M732.88 126.65 H735.47 M732.88 141.25 H735.47 M735.47 126.65 L736.67 141.25 M735.47 141.25 L736.67 126.65 M736.67 126.65 H739.26 M736.67 141.25 H739.26 M739.26 126.65 L740.46 141.25 M739.26 141.25 L740.46 126.65 M740.46 126.65 H743.05 M740.46 141.25 H743.05 M743.05 126.65 L744.25 141.25 M743.05 141.25 L744.25 126.65 M744.25 126.65 H746.84 M744.25 141.25 H746.84 M746.84 126.65 L748.04 141.25 M746.84 141.25 L748.04 126.65 M748.04 126.65 H750.63 M748.04 141.25 H750.63 M750.63 126.65 L751.83 141.25 M750.63 141.25 L751.83 126.65 M751.83 126.65 H754.42 M751.83 141.25 H754.42 M754.42 126.65 L755.62 141.25 M754.42 141.25 L755.62 126.65 M755.62 126.65 H758.21 M755.62 141.25 H758.21 M758.21 126.65 L759.41 141.25 M758.21 141.25 L759.41 126.65 M759.41 126.65 H762.00 M759.41 141.25 H762.00 M762.00 126.65 L763.20 141.25 M762.00 141.25 L763.20 126.65 M763.20 126.65 H765.79 M763.20 141.25 H765.79 M765.79 126.65 L766.99 141.25 M765.79 141.25 L766.99 126.65 M766.99 126.65 H769.58 M766.99 141.25 H769.58 M769.58 126.65 L770.78 141.25 M769.58 141.25 L770.78 126.65 M770.78 126.65 H773.37 M770.78 141.25 H773.37 M773.37 126.65 L774.57 141.25 M773.37 141.25 L774.57 126.65 M774.57 126.65 H777.16 M774.57 141.25 H777.16 M777.16 126.65 L778.36 141.25 M777.16 141.25 L778.36 126.65 M778.36 126.65 H780.95 M778.36 141.25 H780.95 M780.95 126.65 L782.15 141.25 M780.95 141.25 L782.15 126.65 M782.15 126.65 H784.74 M782.15 141.25 H784.74 M784.74 126.65 L785.94 141.25 M784.74 141.25 L785.94 126.65 M785.94 126.65 H788.53 M785.94 141.25 H788.53 M788.53 126.65 L789.73 141.25 M788.53 141.25 L789.73 126.65 M789.73 126.65 H792.32 M789.73 141.25 H792.32 M792.32 126.65 L793.52 141.25 M792.32 141.25 L793.52 126.65 M793.52 126.65 H796.11 M793.52 141.25 H796.11 M796.11 126.65 L797.31 141.25 M796.11 141.25 L797.31 126.65 M797.31 126.65 H799.90 M797.31 141.25 H799.90 M799.90 126.65 L801.10 141.25 M799.90 141.25 L801.10 126.65 M801.10 126.65 H803.69 M801.10 141.25 H803.69 M803.69 126.65 L804.89 141.25 M803.69 141.25 L804.89 126.65 M804.89 126.65 H807.48 M804.89 141.25 H807.48 M807.48 126.65 L808.68 141.25 M807.48 141.25 L808.68 126.65 M808.68 126.65 H811.27 M808.68 141.25 H811.27 M811.27 126.65 L812.47 141.25 M811.27 141.25 L812.47 126.65 M812.47 126.65 H815.06 M812.47 141.25 H815.06 M815.06 126.65 L816.26 141.25 M815.06 141.25 L816.26 126.65 M816.26 126.65 H818.85 M816.26 141.25 H818.85 M818.85 126.65 L820.05 141.25 M818.85 141.25 L820.05 126.65 M820.05 126.65 H822.64 M820.05 141.25 H822.64 M822.64 126.65 L823.84 141.25 M822.64 141.25 L823.84 126.65 M823.84 126.65 H826.43 M823.84 141.25 H826.43 M826.43 126.65 L827.63 141.25 M826.43 141.25 L827.63 126.65 M827.63 126.65 H830.22 M827.63 141.25 H830.22 M830.22 126.65 L831.42 141.25 M830.22 141.25 L831.42 126.65 M831.42 126.65 H834.01 M831.42 141.25 H834.01 M834.01 126.65 L835.21 141.25 M834.01 141.25 L835.21 126.65 M835.21 126.65 H837.80 M835.21 141.25 H837.80 M837.80 126.65 L839.00 141.25 M837.80 141.25 L839.00 126.65 M839.00 126.65 H841.59 M839.00 141.25 H841.59 M841.59 126.65 L842.79 141.25 M841.59 141.25 L842.79 126.65 M842.79 126.65 H845.38 M842.79 141.25 H845.38 M845.38 126.65 L846.58 141.25 M845.38 141.25 L846.58 126.65 M846.58 126.65 H849.17 M846.58 141.25 H849.17 M849.17 126.65 L850.37 141.25 M849.17 141.25 L850.37 126.65 M850.37 126.65 H852.96 M850.37 141.25 H852.96 M852.96 126.65 L854.16 141.25 M852.96 141.25 L854.16 126.65 M854.16 126.65 H856.75 M854.16 141.25 H856.75 M856.75 126.65 L857.95 141.25 M856.75 141.25 L857.95 126.65 M857.95 126.65 H860.54 M857.95 141.25 H860.54 M860.54 126.65 L861.74 141.25 M860.54 141.25 L861.74 126.65 M861.74 126.65 H864.33 M861.74 141.25 H864.33 M864.33 126.65 L865.53 141.25 M864.33 141.25 L865.53 126.65 M865.53 126.65 H868.12 M865.53 141.25 H868.12 M868.12 126.65 L869.32 141.25 M868.12 141.25 L869.32 126.65 M869.32 126.65 H871.91 M869.32 141.25 H871.91 M871.91 126.65 L873.11 141.25 M871.91 141.25 L873.11 126.65 M873.11 126.65 H875.70 M873.11 141.25 H875.70 M875.70 126.65 L876.90 141.25 M875.70 141.25 L876.90 126.65 M876.90 126.65 H879.49 M876.90 141.25 H879.49 M879.49 126.65 L880.69 141.25 M879.49 141.25 L880.69 126.65 M880.69 126.65 H883.28 M880.69 141.25 H883.28 M883.28 126.65 L884.48 141.25 M883.28 141.25 L884.48 126.65 M884.48 126.65 H887.07 M884.48 141.25 H887.07 M887.07 126.65 L888.27 141.25 M887.07 141.25 L888.27 126.65 M888.27 126.65 H890.86 M888.27 141.25 H890.86 M890.86 126.65 L892.06 141.25 M890.86 141.25 L892.06 126.65 M892.06 126.65 H894.65 M892.06 141.25 H894.65 M894.65 126.65 L895.85 141.25 M894.65 141.25 L895.85 126.65 M895.85 126.65 H898.44 M895.85 141.25 H898.44 M898.44 126.65 L899.64 141.25 M898.44 141.25 L899.64 126.65 M899.64 126.65 H902.23 M899.64 141.25 H902.23 M902.23 126.65 L903.43 141.25 M902.23 141.25 L903.43 126.65 M903.43 126.65 H906.02 M903.43 141.25 H906.02 M906.02 126.65 L907.22 141.25 M906.02 141.25 L907.22 126.65 M907.22 126.65 H909.81 M907.22 141.25 H909.81 M909.81 126.65 L911.01 141.25 M909.81 141.25 L911.01 126.65 M911.01 126.65 H913.60 M911.01 141.25 H913.60 M913.60 126.65 L914.80 141.25 M913.60 141.25 L914.80 126.65 M914.80 126.65 H917.39 M914.80 141.25 H917.39 M917.39 126.65 L918.59 141.25 M917.39 141.25 L918.59 126.65 M918.59 126.65 H921.18 M918.59 141.25 H921.18 M921.18 126.65 L922.38 141.25 M921.18 141.25 L922.38 126.65 M922.38 126.65 H924.97 M922.38 141.25 H924.97 M924.97 126.65 L926.17 141.25 M924.97 141.25 L926.17 126.65 M926.17 126.65 H928.76 M926.17 141.25 H928.76 M928.76 126.65 L929.96 141.25 M928.76 141.25 L929.96 126.65 M929.96 126.65 H932.55 M929.96 141.25 H932.55 M932.55 126.65 L933.75 141.25 M932.55 141.25 L933.75 126.65 M933.75 126.65 H936.34 M933.75 141.25 H936.34 M936.34 126.65 L937.54 141.25 M936.34 141.25 L937.54 126.65 M937.54 126.65 H940.13 M937.54 141.25 H940.13 M940.13 126.65 L941.33 141.25 M940.13 141.25 L941.33 126.65 M941.33 126.65 H943.92 M941.33 141.25 H943.92 M943.92 126.65 L945.12 141.25 M943.92 141.25 L945.12 126.65 M945.12 126.65 H947.71 M945.12 141.25 H947.71 M947.71 126.65 L948.91 141.25 M947.71 141.25 L948.91 126.65 M948.91 126.65 H951.50 M948.91 141.25 H951.50 M951.50 126.65 L952.70 141.25 M951.50 141.25 L952.70 126.65 M952.70 126.65 H955.29 M952.70 141.25 H955.29 M955.29 126.65 L956.49 141.25 M955.29 141.25 L956.49 126.65 M956.49 126.65 H959.08 M956.49 141.25 H959.08 M959.08 126.65 L960.28 141.25 M959.08 141.25 L960.28 126.65 M960.28 126.65 H962.87 M960.28 141.25 H962.87 M962.87 126.65 L964.07 141.25 M962.87 141.25 L964.07 126.65 M964.07 126.65 H966.66 M964.07 141.25 H966.66 M966.66 126.65 L967.86 141.25 M966.66 141.25 L967.86 126.65 M967.86 126.65 H970.45 M967.86 141.25 H970.45 M970.45 126.65 L971.65 141.25 M970.45 141.25 L971.65 126.65 M971.65 126.65 H974.24 M971.65 141.25 H974.24 M974.24 126.65 L975.44 141.25 M974.24 141.25 L975.44 126.65 M975.44 126.65 H978.03 M975.44 141.25 H978.03 M978.03 126.65 L979.23 141.25 M978.03 141.25 L979.23 126.65 M979.23 126.65 H981.82 M979.23 141.25 H981.82 M981.82 126.65 L983.02 141.25 M981.82 141.25 L983.02 126.65 M983.02 126.65 H985.61 M983.02 141.25 H985.61 M985.61 126.65 L986.81 141.25 M985.61 141.25 L986.81 126.65 M986.81 126.65 H989.40 M986.81 141.25 H989.40 M989.40 126.65 L990.60 141.25 M989.40 141.25 L990.60 126.65 M990.60 126.65 H993.19 M990.60 141.25 H993.19 M993.19 126.65 L994.39 141.25 M993.19 141.25 L994.39 126.65 M994.39 126.65 H996.98 M994.39 141.25 H996.98 M996.98 126.65 L998.18 141.25 M996.98 141.25 L998.18 126.65 M998.18 126.65 H1000.77 M998.18 141.25 H1000.77 M1000.77 126.65 L1001.97 141.25 M1000.77 141.25 L1001.97 126.65 M1001.97 126.65 H1004.56 M1001.97 141.25 H1004.56 M1004.56 126.65 L1005.76 141.25 M1004.56 141.25 L1005.76 126.65 M1005.76 126.65 H1008.35 M1005.76 141.25 H1008.35 M1008.35 126.65 L1009.55 141.25 M1008.35 141.25 L1009.55 126.65 M1009.55 126.65 H1012.14 M1009.55 141.25 H1012.14 M1012.14 126.65 L1013.34 141.25 M1012.14 141.25 L1013.34 126.65 M1013.34 126.65 H1015.93 M1013.34 141.25 H1015.93 M1015.93 126.65 L1017.13 141.25 M1015.93 141.25 L1017.13 126.65 M1017.13 126.65 H1019.72 M1017.13 141.25 H1019.72 M1019.72 126.65 L1020.92 141.25 M1019.72 141.25 L1020.92 126.65 M1020.92 126.65 H1023.51 M1020.92 141.25 H1023.51 M1023.51 126.65 L1024.71 141.25 M1023.51 141.25 L1024.71 126.65 M1024.71 126.65 H1027.30 M1024.71 141.25 H1027.30 M1027.30 126.65 L1028.50 141.25 M1027.30 141.25 L1028.50 126.65 M1028.50 126.65 H1031.09 M1028.50 141.25 H1031.09 M1031.09 126.65 L1032.29 141.25 M1031.09 141.25 L1032.29 126.65 M1032.29 126.65 H1034.88 M1032.29 141.25 H1034.88 M1034.88 126.65 L1036.08 141.25 M1034.88 141.25 L1036.08 126.65 M1036.08 126.65 H1038.67 M1036.08 141.25 H1038.67 M1038.67 126.65 L1039.87 141.25 M1038.67 141.25 L1039.87 126.65 M1039.87 126.65 H1042.46 M1039.87 141.25 H1042.46 M1042.46 126.65 L1043.66 141.25 M1042.46 141.25 L1043.66 126.65 M1043.66 126.65 H1046.25 M1043.66 141.25 H1046.25 M1046.25 126.65 L1047.45 141.25 M1046.25 141.25 L1047.45 126.65 M1047.45 126.65 H1050.04 M1047.45 141.25 H1050.04 M1050.04 126.65 L1051.24 141.25 M1050.04 141.25 L1051.24 126.65 M1051.24 126.65 H1053.83 M1051.24 141.25 H1053.83 M1053.83 126.65 L1055.03 141.25 M1053.83 141.25 L1055.03 126.65 M1055.03 126.65 H1057.62 M1055.03 141.25 H1057.62 M1057.62 126.65 L1058.82 141.25 M1057.62 141.25 L1058.82 126.65 M1058.82 126.65 H1061.41 M1058.82 141.25 H1061.41 M1061.41 126.65 L1062.61 141.25 M1061.41 141.25 L1062.61 126.65 M1062.61 126.65 H1065.20 M1062.61 141.25 H1065.20 M1065.20 126.65 L1066.40 141.25 M1065.20 141.25 L1066.40 126.65 M1066.40 126.65 H1068.99 M1066.40 141.25 H1068.99 M1068.99 126.65 L1070.19 141.25 M1068.99 141.25 L1070.19 126.65 M1070.19 126.65 H1072.78 M1070.19 141.25 H1072.78 M1072.78 126.65 L1073.98 141.25 M1072.78 141.25 L1073.98 126.65 M1073.98 126.65 H1076.57 M1073.98 141.25 H1076.57 M1076.57 126.65 L1077.77 141.25 M1076.57 141.25 L1077.77 126.65 M1077.77 126.65 H1080.36 M1077.77 141.25 H1080.36 M1080.36 126.65 L1081.56 141.25 M1080.36 141.25 L1081.56 126.65 M1081.56 126.65 H1084.15 M1081.56 141.25 H1084.15 M1084.15 126.65 L1085.35 141.25 M1084.15 141.25 L1085.35 126.65 M1085.35 126.65 H1087.94 M1085.35 141.25 H1087.94 M1087.94 126.65 L1089.14 141.25 M1087.94 141.25 L1089.14 126.65 M1089.14 126.65 H1091.73 M1089.14 141.25 H1091.73 M1091.73 126.65 L1092.93 141.25 M1091.73 141.25 L1092.93 126.65 M1092.93 126.65 H1095.52 M1092.93 141.25 H1095.52 M1095.52 126.65 L1096.72 141.25 M1095.52 141.25 L1096.72 126.65 M1096.72 126.65 H1099.31 M1096.72 141.25 H1099.31 M1099.31 126.65 L1100.51 141.25 M1099.31 141.25 L1100.51 126.65 M1100.51 126.65 H1103.10 M1100.51 141.25 H1103.10 M1103.10 126.65 L1104.30 141.25 M1103.10 141.25 L1104.30 126.65 M1104.30 126.65 H1106.89 M1104.30 141.25 H1106.89 M1106.89 126.65 L1108.09 141.25 M1106.89 141.25 L1108.09 126.65 M1108.09 126.65 H1110.68 M1108.09 141.25 H1110.68 M1110.68 126.65 L1111.88 141.25 M1110.68 141.25 L1111.88 126.65 M1111.88 126.65 H1114.47 M1111.88 141.25 H1114.47 M1114.47 126.65 L1115.67 141.25 M1114.47 141.25 L1115.67 126.65 M1115.67 126.65 H1118.26 M1115.67 141.25 H1118.26 M1118.26 126.65 L1119.46 141.25 M1118.26 141.25 L1119.46 126.65 M1119.46 126.65 H1122.05 M1119.46 141.25 H1122.05 M1122.05 126.65 L1123.25 141.25 M1122.05 141.25 L1123.25 126.65 M1123.25 126.65 H1125.84 M1123.25 141.25 H1125.84 M1125.84 126.65 L1127.04 141.25 M1125.84 141.25 L1127.04 126.65 M1127.04 126.65 H1129.63 M1127.04 141.25 H1129.63 M1129.63 126.65 L1130.83 141.25 M1129.63 141.25 L1130.83 126.65 M1130.83 126.65 H1133.42 M1130.83 141.25 H1133.42 M1133.42 126.65 L1134.62 141.25 M1133.42 141.25 L1134.62 126.65 M1134.62 126.65 H1137.21 M1134.62 141.25 H1137.21 M1137.21 126.65 L1138.41 141.25 M1137.21 141.25 L1138.41 126.65 M1138.41 126.65 H1141.00 M1138.41 141.25 H1141.00 M1141.00 126.65 L1142.20 141.25 M1141.00 141.25 L1142.20 126.65 M1142.20 126.65 H1144.79 M1142.20 141.25 H1144.79 M1144.79 126.65 L1145.99 141.25 M1144.79 141.25 L1145.99 126.65 M1145.99 126.65 H1148.58 M1145.99 141.25 H1148.58 M1148.58 126.65 L1149.78 141.25 M1148.58 141.25 L1149.78 126.65 M1149.78 126.65 H1152.37 M1149.78 141.25 H1152.37 M1152.37 126.65 L1153.57 141.25 M1152.37 141.25 L1153.57 126.65 M1153.57 126.65 H1156.16 M1153.57 141.25 H1156.16 M1156.16 126.65 L1157.36 141.25 M1156.16 141.25 L1157.36 126.65 M1157.36 126.65 H1159.95 M1157.36 141.25 H1159.95 M1159.95 126.65 L1161.15 141.25 M1159.95 141.25 L1161.15 126.65 M1161.15 126.65 H1163.74 M1161.15 141.25 H1163.74 M1163.74 126.65 L1164.94 141.25 M1163.74 141.25 L1164.94 126.65 M1164.94 126.65 H1167.53 M1164.94 141.25 H1167.53 M1167.53 126.65 L1168.73 141.25 M1167.53 141.25 L1168.73 126.65 M1168.73 126.65 H1171.32 M1168.73 141.25 H1171.32 M1171.32 126.65 L1172.52 141.25 M1171.32 141.25 L1172.52 126.65 M1172.52 126.65 H1175.11 M1172.52 141.25 H1175.11 M1175.11 126.65 L1176.31 141.25 M1175.11 141.25 L1176.31 126.65 M1176.31 126.65 H1178.90 M1176.31 141.25 H1178.90 M1178.90 126.65 L1180.10 141.25 M1178.90 141.25 L1180.10 126.65 M1180.10 126.65 H1182.69 M1180.10 141.25 H1182.69 M1182.69 126.65 L1183.89 141.25 M1182.69 141.25 L1183.89 126.65 M1183.89 126.65 H1186.48 M1183.89 141.25 H1186.48 M1186.48 126.65 L1187.68 141.25 M1186.48 141.25 L1187.68 126.65 M1187.68 126.65 H1190.27 M1187.68 141.25 H1190.27 M1190.27 126.65 L1191.47 141.25 M1190.27 141.25 L1191.47 126.65 M1191.47 126.65 H1194.06 M1191.47 141.25 H1194.06 M1194.06 126.65 L1195.26 141.25 M1194.06 141.25 L1195.26 126.65 M1195.26 126.65 H1197.85 M1195.26 141.25 H1197.85 M1197.85 126.65 L1199.05 141.25 M1197.85 141.25 L1199.05 126.65 M1199.05 126.65 H1201.64 M1199.05 141.25 H1201.64 M1201.64 126.65 L1202.84 141.25 M1201.64 141.25 L1202.84 126.65 M1202.84 126.65 H1205.43 M1202.84 141.25 H1205.43 M1205.43 126.65 L1206.63 141.25 M1205.43 141.25 L1206.63 126.65 M1206.63 126.65 H1209.22 M1206.63 141.25 H1209.22 M1209.22 126.65 L1210.42 141.25 M1209.22 141.25 L1210.42 126.65 M1210.42 126.65 H1213.01 M1210.42 141.25 H1213.01 M1213.01 126.65 L1214.21 141.25 M1213.01 141.25 L1214.21 126.65 M1214.21 126.65 H1216.80 M1214.21 141.25 H1216.80 M1216.80 126.65 L1218.00 141.25 M1216.80 141.25 L1218.00 126.65 M1218.00 126.65 H1220.59 M1218.00 141.25 H1220.59 M1220.59 126.65 L1221.79 141.25 M1220.59 141.25 L1221.79 126.65 M1221.79 126.65 H1224.38 M1221.79 141.25 H1224.38 M1224.38 126.65 L1225.58 141.25 M1224.38 141.25 L1225.58 126.65 M1225.58 126.65 H1228.17 M1225.58 141.25 H1228.17 M1228.17 126.65 L1229.37 141.25 M1228.17 141.25 L1229.37 126.65 M1229.37 126.65 H1231.96 M1229.37 141.25 H1231.96 M1231.96 126.65 L1233.16 141.25 M1231.96 141.25 L1233.16 126.65 M1233.16 126.65 H1235.75 M1233.16 141.25 H1235.75 M1235.75 126.65 L1236.95 141.25 M1235.75 141.25 L1236.95 126.65 M1236.95 126.65 H1239.54 M1236.95 141.25 H1239.54 M1239.54 126.65 L1240.74 141.25 M1239.54 141.25 L1240.74 126.65 M1240.74 126.65 H1243.33 M1240.74 141.25 H1243.33 M1243.33 126.65 L1244.53 141.25 M1243.33 141.25 L1244.53 126.65 M1244.53 126.65 H1247.12 M1244.53 141.25 H1247.12 M1247.12 126.65 L1248.32 141.25 M1247.12 141.25 L1248.32 126.65 M1248.32 126.65 H1250.91 M1248.32 141.25 H1250.91 M1250.91 126.65 L1252.11 141.25 M1250.91 141.25 L1252.11 126.65 M1252.11 126.65 H1254.70 M1252.11 141.25 H1254.70 M1254.70 126.65 L1255.90 141.25 M1254.70 141.25 L1255.90 126.65 M1255.90 126.65 H1258.49 M1255.90 141.25 H1258.49 M1258.49 126.65 L1259.69 141.25 M1258.49 141.25 L1259.69 126.65 M1259.69 126.65 H1262.28 M1259.69 141.25 H1262.28 M1262.28 126.65 L1263.48 141.25 M1262.28 141.25 L1263.48 126.65 M1263.48 126.65 H1266.07 M1263.48 141.25 H1266.07 M1266.07 126.65 L1267.27 141.25 M1266.07 141.25 L1267.27 126.65 M1267.27 126.65 H1269.86 M1267.27 141.25 H1269.86 M1269.86 126.65 L1271.06 141.25 M1269.86 141.25 L1271.06 126.65 M1271.06 126.65 H1273.65 M1271.06 141.25 H1273.65 M1273.65 126.65 L1274.85 141.25 M1273.65 141.25 L1274.85 126.65 M1274.85 126.65 H1277.44 M1274.85 141.25 H1277.44 M1277.44 126.65 L1278.64 141.25 M1277.44 141.25 L1278.64 126.65 M1278.64 126.65 H1281.23 M1278.64 141.25 H1281.23 M1281.23 126.65 L1282.43 141.25 M1281.23 141.25 L1282.43 126.65 M1282.43 126.65 H1285.02 M1282.43 141.25 H1285.02 M1285.02 126.65 L1286.22 141.25 M1285.02 141.25 L1286.22 126.65 M1286.22 126.65 H1288.81 M1286.22 141.25 H1288.81 M1288.81 126.65 L1290.01 141.25 M1288.81 141.25 L1290.01 126.65 M1290.01 126.65 H1292.60 M1290.01 141.25 H1292.60 M1292.60 126.65 L1293.80 141.25 M1292.60 141.25 L1293.80 126.65 M1293.80 126.65 H1296.39 M1293.80 141.25 H1296.39 M1296.39 126.65 L1297.59 141.25 M1296.39 141.25 L1297.59 126.65 M1297.59 126.65 H1300.18 M1297.59 141.25 H1300.18 M1300.18 126.65 L1301.38 141.25 M1300.18 141.25 L1301.38 126.65 M1301.38 126.65 H1303.97 M1301.38 141.25 H1303.97 M1303.97 126.65 L1305.17 141.25 M1303.97 141.25 L1305.17 126.65 M1305.17 126.65 H1307.76 M1305.17 141.25 H1307.76 M1307.76 126.65 L1308.96 141.25 M1307.76 141.25 L1308.96 126.65 M1308.96 126.65 H1311.55 M1308.96 141.25 H1311.55 M1311.55 126.65 L1312.75 141.25 M1311.55 141.25 L1312.75 126.65 M1312.75 126.65 H1315.34 M1312.75 141.25 H1315.34 M1315.34 126.65 L1316.54 141.25 M1315.34 141.25 L1316.54 126.65 M1316.54 126.65 H1319.13 M1316.54 141.25 H1319.13 M1319.13 126.65 L1320.33 141.25 M1319.13 141.25 L1320.33 126.65 M1320.33 126.65 H1322.92 M1320.33 141.25 H1322.92 M1322.92 126.65 L1324.12 141.25 M1322.92 141.25 L1324.12 126.65 M1324.12 126.65 H1326.71 M1324.12 141.25 H1326.71 M1326.71 126.65 L1327.91 141.25 M1326.71 141.25 L1327.91 126.65 M1327.91 126.65 H1330.50 M1327.91 141.25 H1330.50 M1330.50 126.65 L1331.70 141.25 M1330.50 141.25 L1331.70 126.65 M1331.70 126.65 H1334.29 M1331.70 141.25 H1334.29 M1334.29 126.65 L1335.49 141.25 M1334.29 141.25 L1335.49 126.65 M1335.49 126.65 H1338.08 M1335.49 141.25 H1338.08 M1338.08 126.65 L1339.28 141.25 M1338.08 141.25 L1339.28 126.65 M1339.28 126.65 H1341.87 M1339.28 141.25 H1341.87 M1341.87 126.65 L1343.07 141.25 M1341.87 141.25 L1343.07 126.65 M1343.07 126.65 H1345.66 M1343.07 141.25 H1345.66 M1345.66 126.65 L1346.86 141.25 M1345.66 141.25 L1346.86 126.65 M1346.86 126.65 H1349.45 M1346.86 141.25 H1349.45 M1349.45 126.65 L1350.65 141.25 M1349.45 141.25 L1350.65 126.65 M1350.65 126.65 H1353.24 M1350.65 141.25 H1353.24 M1353.24 126.65 L1354.44 141.25 M1353.24 141.25 L1354.44 126.65 M1354.44 126.65 H1357.03 M1354.44 141.25 H1357.03 M1357.03 126.65 L1358.23 141.25 M1357.03 141.25 L1358.23 126.65 M1358.23 126.65 H1360.82 M1358.23 141.25 H1360.82 M1360.82 126.65 L1362.02 141.25 M1360.82 141.25 L1362.02 126.65 M1362.02 126.65 H1364.61 M1362.02 141.25 H1364.61 M1364.61 126.65 L1365.81 141.25 M1364.61 141.25 L1365.81 126.65 M1365.81 126.65 H1368.40 M1365.81 141.25 H1368.40 M1368.40 126.65 L1369.60 141.25 M1368.40 141.25 L1369.60 126.65 M1369.60 126.65 H1372.19 M1369.60 141.25 H1372.19 M1372.19 126.65 L1373.39 141.25 M1372.19 141.25 L1373.39 126.65 M1373.39 126.65 H1375.98 M1373.39 141.25 H1375.98 M1375.98 126.65 L1377.18 141.25 M1375.98 141.25 L1377.18 126.65 M1377.18 126.65 H1379.77 M1377.18 141.25 H1379.77 M1379.77 126.65 L1380.97 141.25 M1379.77 141.25 L1380.97 126.65 M1380.97 126.65 H1383.56 M1380.97 141.25 H1383.56 M1383.56 126.65 L1384.76 141.25 M1383.56 141.25 L1384.76 126.65 M1384.76 126.65 H1387.35 M1384.76 141.25 H1387.35 M1387.35 126.65 L1388.55 141.25 M1387.35 141.25 L1388.55 126.65 M1388.55 126.65 H1391.14 M1388.55 141.25 H1391.14 M1391.14 126.65 L1392.34 141.25 M1391.14 141.25 L1392.34 126.65 M1392.34 126.65 H1394.93 M1392.34 141.25 H1394.93 M1394.93 126.65 L1396.13 141.25 M1394.93 141.25 L1396.13 126.65 M1396.13 126.65 H1398.72 M1396.13 141.25 H1398.72 M1398.72 126.65 L1399.92 141.25 M1398.72 141.25 L1399.92 126.65 M1399.92 126.65 H1402.51 M1399.92 141.25 H1402.51 M1402.51 126.65 L1403.71 141.25 M1402.51 141.25 L1403.71 126.65 M1403.71 126.65 H1406.30 M1403.71 141.25 H1406.30 M1406.30 126.65 L1407.50 141.25 M1406.30 141.25 L1407.50 126.65 M1407.50 126.65 H1410.09 M1407.50 141.25 H1410.09 M1410.09 126.65 L1411.29 141.25 M1410.09 141.25 L1411.29 126.65 M1411.29 126.65 H1413.88 M1411.29 141.25 H1413.88 M1413.88 126.65 L1415.08 141.25 M1413.88 141.25 L1415.08 126.65 M1415.08 126.65 H1417.67 M1415.08 141.25 H1417.67 M1417.67 126.65 L1418.87 141.25 M1417.67 141.25 L1418.87 126.65 M1418.87 126.65 H1421.46 M1418.87 141.25 H1421.46 M1421.46 126.65 L1422.66 141.25 M1421.46 141.25 L1422.66 126.65 M1422.66 126.65 H1425.25 M1422.66 141.25 H1425.25 M1425.25 126.65 L1426.45 141.25 M1425.25 141.25 L1426.45 126.65 M1426.45 126.65 H1429.04 M1426.45 141.25 H1429.04 M1429.04 126.65 L1430.24 141.25 M1429.04 141.25 L1430.24 126.65 M1430.24 126.65 H1432.83 M1430.24 141.25 H1432.83 M1432.83 126.65 L1434.03 141.25 M1432.83 141.25 L1434.03 126.65 M1434.03 126.65 H1436.62 M1434.03 141.25 H1436.62 M1436.62 126.65 L1437.82 141.25 M1436.62 141.25 L1437.82 126.65 M1437.82 126.65 H1440.41 M1437.82 141.25 H1440.41 M1440.41 126.65 L1441.61 141.25 M1440.41 141.25 L1441.61 126.65 M1441.61 126.65 H1444.20 M1441.61 141.25 H1444.20 M1444.20 126.65 L1445.40 141.25 M1444.20 141.25 L1445.40 126.65 M1445.40 126.65 H1447.99 M1445.40 141.25 H1447.99 M1447.99 126.65 L1449.19 141.25 M1447.99 141.25 L1449.19 126.65 M1449.19 126.65 H1451.78 M1449.19 141.25 H1451.78 M1451.78 126.65 L1452.98 141.25 M1451.78 141.25 L1452.98 126.65 M1452.98 126.65 H1455.57 M1452.98 141.25 H1455.57 M1455.57 126.65 L1456.77 141.25 M1455.57 141.25 L1456.77 126.65 M1456.77 126.65 H1459.36 M1456.77 141.25 H1459.36 M1459.36 126.65 L1460.56 141.25 M1459.36 141.25 L1460.56 126.65 M1460.56 126.65 H1463.15 M1460.56 141.25 H1463.15 M1463.15 126.65 L1464.35 141.25 M1463.15 141.25 L1464.35 126.65 M1464.35 126.65 H1466.94 M1464.35 141.25 H1466.94 M1466.94 126.65 L1468.14 141.25 M1466.94 141.25 L1468.14 126.65 M1468.14 126.65 H1470.73 M1468.14 141.25 H1470.73 M1470.73 126.65 L1471.93 141.25 M1470.73 141.25 L1471.93 126.65 M1471.93 126.65 H1474.52 M1471.93 141.25 H1474.52 M1474.52 126.65 L1475.72 141.25 M1474.52 141.25 L1475.72 126.65 M1475.72 126.65 H1478.31 M1475.72 141.25 H1478.31 M1478.31 126.65 L1479.51 141.25 M1478.31 141.25 L1479.51 126.65 M1479.51 126.65 H1482.10 M1479.51 141.25 H1482.10 M1482.10 126.65 L1483.30 141.25 M1482.10 141.25 L1483.30 126.65 M1483.30 126.65 H1485.89 M1483.30 141.25 H1485.89 M1485.89 126.65 L1487.09 141.25 M1485.89 141.25 L1487.09 126.65 M1487.09 126.65 H1489.68 M1487.09 141.25 H1489.68 M1489.68 126.65 L1490.88 141.25 M1489.68 141.25 L1490.88 126.65 M1490.88 126.65 H1493.47 M1490.88 141.25 H1493.47 M1493.47 126.65 L1494.67 141.25 M1493.47 141.25 L1494.67 126.65 M1494.67 126.65 H1497.26 M1494.67 141.25 H1497.26 M1497.26 126.65 L1498.46 141.25 M1497.26 141.25 L1498.46 126.65 M1498.46 126.65 H1501.05 M1498.46 141.25 H1501.05 M1501.05 126.65 L1502.25 141.25 M1501.05 141.25 L1502.25 126.65 M1502.25 126.65 H1504.84 M1502.25 141.25 H1504.84 M1504.84 126.65 L1506.04 141.25 M1504.84 141.25 L1506.04 126.65 M1506.04 126.65 H1508.63 M1506.04 141.25 H1508.63 M1508.63 126.65 L1509.83 141.25 M1508.63 141.25 L1509.83 126.65 M1509.83 126.65 H1512.42 M1509.83 141.25 H1512.42 M1512.42 126.65 L1513.62 141.25 M1512.42 141.25 L1513.62 126.65 M1513.62 126.65 H1516.21 M1513.62 141.25 H1516.21 M1516.21 126.65 L1517.41 141.25 M1516.21 141.25 L1517.41 126.65 M1517.41 126.65 H1520.00 M1517.41 141.25 H1520.00 M1520.00 126.65 L1521.20 141.25 M1520.00 141.25 L1521.20 126.65 M1521.20 126.65 H1523.79 M1521.20 141.25 H1523.79 M1523.79 126.65 L1524.99 141.25 M1523.79 141.25 L1524.99 126.65 M1524.99 126.65 H1527.58 M1524.99 141.25 H1527.58 M1527.58 126.65 L1528.78 141.25 M1527.58 141.25 L1528.78 126.65 M1528.78 126.65 H1531.37 M1528.78 141.25 H1531.37 M1531.37 126.65 L1532.57 141.25 M1531.37 141.25 L1532.57 126.65 M1532.57 126.65 H1535.16 M1532.57 141.25 H1535.16 M1535.16 126.65 L1536.36 141.25 M1535.16 141.25 L1536.36 126.65 M1536.36 126.65 H1538.95 M1536.36 141.25 H1538.95 M1538.95 126.65 L1540.15 141.25 M1538.95 141.25 L1540.15 126.65 M1540.15 126.65 H1542.74 M1540.15 141.25 H1542.74 M1542.74 126.65 L1543.94 141.25 M1542.74 141.25 L1543.94 126.65 M1543.94 126.65 H1546.53 M1543.94 141.25 H1546.53 M1546.53 126.65 L1547.73 141.25 M1546.53 141.25 L1547.73 126.65 M1547.73 126.65 H1550.32 M1547.73 141.25 H1550.32 M1550.32 126.65 L1551.52 141.25 M1550.32 141.25 L1551.52 126.65 M1551.52 126.65 H1554.11 M1551.52 141.25 H1554.11 M1554.11 126.65 L1555.31 141.25 M1554.11 141.25 L1555.31 126.65 M1555.31 126.65 H1557.90 M1555.31 141.25 H1557.90 M1557.90 126.65 L1559.10 141.25 M1557.90 141.25 L1559.10 126.65 M1559.10 126.65 H1561.69 M1559.10 141.25 H1561.69 M1561.69 126.65 L1562.89 141.25 M1561.69 141.25 L1562.89 126.65 M1562.89 126.65 H1565.48 M1562.89 141.25 H1565.48 M1565.48 126.65 L1566.68 141.25 M1565.48 141.25 L1566.68 126.65 M1566.68 126.65 H1569.27 M1566.68 141.25 H1569.27 M1569.27 126.65 L1570.47 141.25 M1569.27 141.25 L1570.47 126.65 M1570.47 126.65 H1573.06 M1570.47 141.25 H1573.06 M1573.06 126.65 L1574.26 141.25 M1573.06 141.25 L1574.26 126.65 M1574.26 126.65 H1576.85 M1574.26 141.25 H1576.85 M1576.85 126.65 L1578.05 141.25 M1576.85 141.25 L1578.05 126.65 M1578.05 126.65 H1580.64 M1578.05 141.25 H1580.64 M1580.64 126.65 L1581.84 141.25 M1580.64 141.25 L1581.84 126.65 M1581.84 126.65 H1584.43 M1581.84 141.25 H1584.43 M1584.43 126.65 L1585.63 141.25 M1584.43 141.25 L1585.63 126.65 M1585.63 126.65 H1588.22 M1585.63 141.25 H1588.22 M1588.22 126.65 L1589.42 141.25 M1588.22 141.25 L1589.42 126.65 M1589.42 126.65 H1592.01 M1589.42 141.25 H1592.01 M1592.01 126.65 L1593.21 141.25 M1592.01 141.25 L1593.21 126.65 M1593.21 126.65 H1595.80 M1593.21 141.25 H1595.80 M1595.80 126.65 L1597.00 141.25 M1595.80 141.25 L1597.00 126.65 M1597.00 126.65 H1599.59 M1597.00 141.25 H1599.59 M1599.59 126.65 L1600.79 141.25 M1599.59 141.25 L1600.79 126.65 M1600.79 126.65 H1603.38 M1600.79 141.25 H1603.38 M1603.38 126.65 L1604.58 141.25 M1603.38 141.25 L1604.58 126.65 M1604.58 126.65 H1607.17 M1604.58 141.25 H1607.17 M1607.17 126.65 L1608.37 141.25 M1607.17 141.25 L1608.37 126.65 M1608.37 126.65 H1610.96 M1608.37 141.25 H1610.96 M1610.96 126.65 L1612.16 141.25 M1610.96 141.25 L1612.16 126.65 M1612.16 126.65 H1614.75 M1612.16 141.25 H1614.75 M1614.75 126.65 L1615.95 141.25 M1614.75 141.25 L1615.95 126.65 M1615.95 126.65 H1618.54 M1615.95 141.25 H1618.54 M1618.54 126.65 L1619.74 141.25 M1618.54 141.25 L1619.74 126.65 M1619.74 126.65 H1622.33 M1619.74 141.25 H1622.33 M1622.33 126.65 L1623.53 141.25 M1622.33 141.25 L1623.53 126.65 M1623.53 126.65 H1626.12 M1623.53 141.25 H1626.12 M1626.12 126.65 L1627.32 141.25 M1626.12 141.25 L1627.32 126.65 M1627.32 126.65 H1629.91 M1627.32 141.25 H1629.91 M1629.91 126.65 L1631.11 141.25 M1629.91 141.25 L1631.11 126.65 M1631.11 126.65 H1633.70 M1631.11 141.25 H1633.70 M1633.70 126.65 L1634.90 141.25 M1633.70 141.25 L1634.90 126.65 M1634.90 126.65 H1637.49 M1634.90 141.25 H1637.49 M1637.49 126.65 L1638.69 141.25 M1637.49 141.25 L1638.69 126.65 M1638.69 126.65 H1641.28 M1638.69 141.25 H1641.28 M1641.28 126.65 L1642.48 141.25 M1641.28 141.25 L1642.48 126.65 M1642.48 126.65 H1645.07 M1642.48 141.25 H1645.07 M1645.07 126.65 L1646.27 141.25 M1645.07 141.25 L1646.27 126.65 M1646.27 126.65 H1648.86 M1646.27 141.25 H1648.86 M1648.86 126.65 L1650.06 141.25 M1648.86 141.25 L1650.06 126.65 M1650.06 126.65 H1652.65 M1650.06 141.25 H1652.65 M1652.65 126.65 L1653.85 141.25 M1652.65 141.25 L1653.85 126.65 M1653.85 126.65 H1656.44 M1653.85 141.25 H1656.44 M1656.44 126.65 L1657.64 141.25 M1656.44 141.25 L1657.64 126.65 M1657.64 126.65 H1660.23 M1657.64 141.25 H1660.23 M1660.23 126.65 L1661.43 141.25 M1660.23 141.25 L1661.43 126.65 M1661.43 126.65 H1664.02 M1661.43 141.25 H1664.02 M1664.02 126.65 L1665.22 141.25 M1664.02 141.25 L1665.22 126.65 M1665.22 126.65 H1667.81 M1665.22 141.25 H1667.81 M1667.81 126.65 L1669.01 141.25 M1667.81 141.25 L1669.01 126.65 M1669.01 126.65 H1671.60 M1669.01 141.25 H1671.60 M1671.60 126.65 L1672.80 141.25 M1671.60 141.25 L1672.80 126.65 M1672.80 126.65 H1675.39 M1672.80 141.25 H1675.39 M1675.39 126.65 L1676.59 141.25 M1675.39 141.25 L1676.59 126.65 M1676.59 126.65 H1679.18 M1676.59 141.25 H1679.18 M1679.18 126.65 L1680.38 141.25 M1679.18 141.25 L1680.38 126.65 M1680.38 126.65 H1682.97 M1680.38 141.25 H1682.97 M1682.97 126.65 L1684.17 141.25 M1682.97 141.25 L1684.17 126.65 M1684.17 126.65 H1686.76 M1684.17 141.25 H1686.76 M1686.76 126.65 L1687.96 141.25 M1686.76 141.25 L1687.96 126.65 M1687.96 126.65 H1690.55 M1687.96 141.25 H1690.55 M1690.55 126.65 L1691.75 141.25 M1690.55 141.25 L1691.75 126.65 M1691.75 126.65 H1694.34 M1691.75 141.25 H1694.34 M1694.34 126.65 L1695.54 141.25 M1694.34 141.25 L1695.54 126.65 M1695.54 126.65 H1698.13 M1695.54 141.25 H1698.13 M1698.13 126.65 L1699.33 141.25 M1698.13 141.25 L1699.33 126.65 M1699.33 126.65 H1701.92 M1699.33 141.25 H1701.92 M1701.92 126.65 L1703.12 141.25 M1701.92 141.25 L1703.12 126.65 M1703.12 126.65 H1705.71 M1703.12 141.25 H1705.71 M1705.71 126.65 L1706.91 141.25 M1705.71 141.25 L1706.91 126.65 M1706.91 126.65 H1709.50 M1706.91 141.25 H1709.50 M1709.50 126.65 L1710.70 141.25 M1709.50 141.25 L1710.70 126.65 M1710.70 126.65 H1713.29 M1710.70 141.25 H1713.29 M1713.29 126.65 L1714.49 141.25 M1713.29 141.25 L1714.49 126.65 M1714.49 126.65 H1717.08 M1714.49 141.25 H1717.08 M1717.08 126.65 L1718.28 141.25 M1717.08 141.25 L1718.28 126.65 M1718.28 126.65 H1720.87 M1718.28 141.25 H1720.87 M1720.87 126.65 L1722.07 141.25 M1720.87 141.25 L1722.07 126.65 M1722.07 126.65 H1724.66 M1722.07 141.25 H1724.66 M1724.66 126.65 L1725.86 141.25 M1724.66 141.25 L1725.86 126.65 M1725.86 126.65 H1728.45 M1725.86 141.25 H1728.45 M1728.45 126.65 L1729.65 141.25 M1728.45 141.25 L1729.65 126.65 M1729.65 126.65 H1732.24 M1729.65 141.25 H1732.24 M1732.24 126.65 L1733.44 141.25 M1732.24 141.25 L1733.44 126.65 M1733.44 126.65 H1736.03 M1733.44 141.25 H1736.03 M1736.03 126.65 L1737.23 141.25 M1736.03 141.25 L1737.23 126.65 M1737.23 126.65 H1739.82 M1737.23 141.25 H1739.82 M1739.82 126.65 L1741.02 141.25 M1739.82 141.25 L1741.02 126.65 M1741.02 126.65 H1743.61 M1741.02 141.25 H1743.61 M1743.61 126.65 L1744.81 141.25 M1743.61 141.25 L1744.81 126.65 M1744.81 126.65 H1747.40 M1744.81 141.25 H1747.40 M1747.40 126.65 L1748.60 141.25 M1747.40 141.25 L1748.60 126.65 M1748.60 126.65 H1751.19 M1748.60 141.25 H1751.19 M1751.19 126.65 L1752.39 141.25 M1751.19 141.25 L1752.39 126.65 M1752.39 126.65 H1754.98 M1752.39 141.25 H1754.98 M1754.98 126.65 L1756.18 141.25 M1754.98 141.25 L1756.18 126.65 M1756.18 126.65 H1758.77 M1756.18 141.25 H1758.77 M1758.77 126.65 L1759.97 141.25 M1758.77 141.25 L1759.97 126.65 M1759.97 126.65 H1762.56 M1759.97 141.25 H1762.56 M1762.56 126.65 L1763.76 141.25 M1762.56 141.25 L1763.76 126.65 M1763.76 126.65 H1766.35 M1763.76 141.25 H1766.35 M1766.35 126.65 L1767.55 141.25 M1766.35 141.25 L1767.55 126.65 M1767.55 126.65 H1770.14 M1767.55 141.25 H1770.14 M1770.14 126.65 L1771.34 141.25 M1770.14 141.25 L1771.34 126.65 M1771.34 126.65 H1773.93 M1771.34 141.25 H1773.93 M1773.93 126.65 L1775.13 141.25 M1773.93 141.25 L1775.13 126.65 M1775.13 126.65 H1777.72 M1775.13 141.25 H1777.72 M1777.72 126.65 L1778.92 141.25 M1777.72 141.25 L1778.92 126.65 M1778.92 126.65 H1781.51 M1778.92 141.25 H1781.51 M1781.51 126.65 L1782.71 141.25 M1781.51 141.25 L1782.71 126.65 M1782.71 126.65 H1785.30 M1782.71 141.25 H1785.30 M1785.30 126.65 L1786.50 141.25 M1785.30 141.25 L1786.50 126.65 M1786.50 126.65 H1789.09 M1786.50 141.25 H1789.09 M1789.09 126.65 L1790.29 141.25 M1789.09 141.25 L1790.29 126.65 M1790.29 126.65 H1792.88 M1790.29 141.25 H1792.88 M1792.88 126.65 L1794.08 141.25 M1792.88 141.25 L1794.08 126.65 M1794.08 126.65 H1796.67 M1794.08 141.25 H1796.67 M1796.67 126.65 L1797.87 141.25 M1796.67 141.25 L1797.87 126.65 M1797.87 126.65 H1800.46 M1797.87 141.25 H1800.46 M1800.46 126.65 L1801.66 141.25 M1800.46 141.25 L1801.66 126.65 M1801.66 126.65 H1804.25 M1801.66 141.25 H1804.25 M1804.25 126.65 L1805.45 141.25 M1804.25 141.25 L1805.45 126.65 M1805.45 126.65 H1808.04 M1805.45 141.25 H1808.04 M1808.04 126.65 L1809.24 141.25 M1808.04 141.25 L1809.24 126.65 M1809.24 126.65 H1811.83 M1809.24 141.25 H1811.83 M1811.83 126.65 L1813.03 141.25 M1811.83 141.25 L1813.03 126.65 M1813.03 126.65 H1815.62 M1813.03 141.25 H1815.62 M1815.62 126.65 L1816.82 141.25 M1815.62 141.25 L1816.82 126.65 M1816.82 126.65 H1819.41 M1816.82 141.25 H1819.41 M1819.41 126.65 L1820.61 141.25 M1819.41 141.25 L1820.61 126.65 M1820.61 126.65 H1823.20 M1820.61 141.25 H1823.20 M1823.20 126.65 L1824.40 141.25 M1823.20 141.25 L1824.40 126.65 M1824.40 126.65 H1826.99 M1824.40 141.25 H1826.99 M1826.99 126.65 L1828.19 141.25 M1826.99 141.25 L1828.19 126.65 M1828.19 126.65 H1830.78 M1828.19 141.25 H1830.78 M1830.78 126.65 L1831.98 141.25 M1830.78 141.25 L1831.98 126.65 M1831.98 126.65 H1834.57 M1831.98 141.25 H1834.57 M1834.57 126.65 L1835.77 141.25 M1834.57 141.25 L1835.77 126.65 M1835.77 126.65 H1838.36 M1835.77 141.25 H1838.36 M1838.36 126.65 L1839.56 141.25 M1838.36 141.25 L1839.56 126.65 M1839.56 126.65 H1842.15 M1839.56 141.25 H1842.15 M1842.15 126.65 L1843.35 141.25 M1842.15 141.25 L1843.35 126.65 M1843.35 126.65 H1845.94 M1843.35 141.25 H1845.94 M1845.94 126.65 L1847.14 141.25 M1845.94 141.25 L1847.14 126.65 M1847.14 126.65 H1849.73 M1847.14 141.25 H1849.73 M1849.73 126.65 L1850.93 141.25 M1849.73 141.25 L1850.93 126.65 M1850.93 126.65 H1853.52 M1850.93 141.25 H1853.52 M1853.52 126.65 L1854.72 141.25 M1853.52 141.25 L1854.72 126.65 M1854.72 126.65 H1857.31 M1854.72 141.25 H1857.31 M1857.31 126.65 L1858.51 141.25 M1857.31 141.25 L1858.51 126.65 M1858.51 126.65 H1861.10 M1858.51 141.25 H1861.10 M1861.10 126.65 L1862.30 141.25 M1861.10 141.25 L1862.30 126.65 M1862.30 126.65 H1864.89 M1862.30 141.25 H1864.89 M1864.89 126.65 L1866.09 141.25 M1864.89 141.25 L1866.09 126.65 M1866.09 126.65 H1868.68 M1866.09 141.25 H1868.68 M1868.68 126.65 L1869.88 141.25 M1868.68 141.25 L1869.88 126.65 M1869.88 126.65 H1872.47 M1869.88 141.25 H1872.47 M1872.47 126.65 L1873.67 141.25 M1872.47 141.25 L1873.67 126.65 M1873.67 126.65 H1876.26 M1873.67 141.25 H1876.26 M1876.26 126.65 L1877.46 141.25 M1876.26 141.25 L1877.46 126.65 M1877.46 126.65 H1880.05 M1877.46 141.25 H1880.05 M1880.05 126.65 L1881.25 141.25 M1880.05 141.25 L1881.25 126.65 M1881.25 126.65 H1883.84 M1881.25 141.25 H1883.84 M1883.84 126.65 L1885.04 141.25 M1883.84 141.25 L1885.04 126.65 M1885.04 126.65 H1887.63 M1885.04 141.25 H1887.63 M1887.63 126.65 L1888.83 141.25 M1887.63 141.25 L1888.83 126.65 M1888.83 126.65 H1891.42 M1888.83 141.25 H1891.42 M1891.42 126.65 L1892.62 141.25 M1891.42 141.25 L1892.62 126.65 M1892.62 126.65 H1895.21 M1892.62 141.25 H1895.21 M1895.21 126.65 L1896.41 141.25 M1895.21 141.25 L1896.41 126.65 M1896.41 126.65 H1899.00 M1896.41 141.25 H1899.00 M1899.00 126.65 L1900.20 141.25 M1899.00 141.25 L1900.20 126.65 M1900.20 126.65 H1902.79 M1900.20 141.25 H1902.79 M1902.79 126.65 L1903.99 141.25 M1902.79 141.25 L1903.99 126.65 M1903.99 126.65 H1906.58 M1903.99 141.25 H1906.58 M1906.58 126.65 L1907.78 141.25 M1906.58 141.25 L1907.78 126.65 M1907.78 126.65 H1910.37 M1907.78 141.25 H1910.37 M1910.37 126.65 L1911.57 141.25 M1910.37 141.25 L1911.57 126.65 M1911.57 126.65 H1914.16 M1911.57 141.25 H1914.16 M1914.16 126.65 L1915.36 141.25 M1914.16 141.25 L1915.36 126.65 M1915.36 126.65 H1917.95 M1915.36 141.25 H1917.95 M1917.95 126.65 L1919.15 141.25 M1917.95 141.25 L1919.15 126.65 M1919.15 126.65 H1921.74 M1919.15 141.25 H1921.74 M1921.74 126.65 L1922.94 141.25 M1921.74 141.25 L1922.94 126.65 M1922.94 126.65 H1925.53 M1922.94 141.25 H1925.53 M1925.53 126.65 L1926.73 141.25 M1925.53 141.25 L1926.73 126.65 M1926.73 126.65 H1929.32 M1926.73 141.25 H1929.32 M1929.32 126.65 L1930.52 141.25 M1929.32 141.25 L1930.52 126.65 M1930.52 126.65 H1933.11 M1930.52 141.25 H1933.11 M1933.11 126.65 L1934.31 141.25 M1933.11 141.25 L1934.31 126.65 M1934.31 126.65 H1936.90 M1934.31 141.25 H1936.90 M1936.90 126.65 L1938.10 141.25 M1936.90 141.25 L1938.10 126.65 M1938.10 126.65 H1940.69 M1938.10 141.25 H1940.69 M1940.69 126.65 L1941.89 141.25 M1940.69 141.25 L1941.89 126.65 M1941.89 126.65 H1944.48 M1941.89 141.25 H1944.48 M1944.48 126.65 L1945.68 141.25 M1944.48 141.25 L1945.68 126.65 M1945.68 126.65 H1948.27 M1945.68 141.25 H1948.27 M1948.27 126.65 L1949.47 141.25 M1948.27 141.25 L1949.47 126.65 M1949.47 126.65 H1952.06 M1949.47 141.25 H1952.06 M1952.06 126.65 L1953.26 141.25 M1952.06 141.25 L1953.26 126.65 M1953.26 126.65 H1955.85 M1953.26 141.25 H1955.85 M1955.85 126.65 L1957.05 141.25 M1955.85 141.25 L1957.05 126.65 M1957.05 126.65 H1959.64 M1957.05 141.25 H1959.64 M1959.64 126.65 L1960.84 141.25 M1959.64 141.25 L1960.84 126.65 M1960.84 126.65 H1963.43 M1960.84 141.25 H1963.43 M1963.43 126.65 L1964.63 141.25 M1963.43 141.25 L1964.63 126.65 M1964.63 126.65 H1967.22 M1964.63 141.25 H1967.22 M1967.22 126.65 L1968.42 141.25 M1967.22 141.25 L1968.42 126.65 M1968.42 126.65 H1971.01 M1968.42 141.25 H1971.01 M1971.01 126.65 L1972.21 141.25 M1971.01 141.25 L1972.21 126.65 M1972.21 126.65 H1974.80 M1972.21 141.25 H1974.80 M1974.80 126.65 L1976.00 141.25 M1974.80 141.25 L1976.00 126.65 M1976.00 126.65 H1978.59 M1976.00 141.25 H1978.59 M1978.59 126.65 L1979.79 141.25 M1978.59 141.25 L1979.79 126.65 M1979.79 126.65 H1982.38 M1979.79 141.25 H1982.38 M1982.38 126.65 L1983.58 141.25 M1982.38 141.25 L1983.58 126.65 M1983.58 126.65 H1986.17 M1983.58 141.25 H1986.17 M1986.17 126.65 L1987.37 141.25 M1986.17 141.25 L1987.37 126.65 M1987.37 126.65 H1989.96 M1987.37 141.25 H1989.96 M1989.96 126.65 L1991.16 141.25 M1989.96 141.25 L1991.16 126.65 M1991.16 126.65 H1993.75 M1991.16 141.25 H1993.75 M1993.75 126.65 L1994.95 141.25 M1993.75 141.25 L1994.95 126.65 M1994.95 126.65 H1997.54 M1994.95 141.25 H1997.54 M1997.54 126.65 L1998.74 141.25 M1997.54 141.25 L1998.74 126.65 M1998.74 126.65 H2001.33 M1998.74 141.25 H2001.33 M2001.33 126.65 L2002.53 141.25 M2001.33 141.25 L2002.53 126.65 M2002.53 126.65 H2005.12 M2002.53 141.25 H2005.12 M2005.12 126.65 L2006.32 141.25 M2005.12 141.25 L2006.32 126.65 M2006.32 126.65 H2008.91 M2006.32 141.25 H2008.91 M2008.91 126.65 L2010.11 141.25 M2008.91 141.25 L2010.11 126.65 M2010.11 126.65 H2012.70 M2010.11 141.25 H2012.70 M2012.70 126.65 L2013.90 141.25 M2012.70 141.25 L2013.90 126.65 M2013.90 126.65 H2016.49 M2013.90 141.25 H2016.49 M2016.49 126.65 L2017.69 141.25 M2016.49 141.25 L2017.69 126.65 M2017.69 126.65 H2020.28 M2017.69 141.25 H2020.28 M2020.28 126.65 L2021.48 141.25 M2020.28 141.25 L2021.48 126.65 M2021.48 126.65 H2024.07 M2021.48 141.25 H2024.07 M2024.07 126.65 L2025.27 141.25 M2024.07 141.25 L2025.27 126.65 M2025.27 126.65 H2027.86 M2025.27 141.25 H2027.86 M2027.86 126.65 L2029.06 141.25 M2027.86 141.25 L2029.06 126.65 M2029.06 126.65 H2031.65 M2029.06 141.25 H2031.65 M2031.65 126.65 L2032.85 141.25 M2031.65 141.25 L2032.85 126.65 M2032.85 126.65 H2035.44 M2032.85 141.25 H2035.44 M2035.44 126.65 L2036.64 141.25 M2035.44 141.25 L2036.64 126.65 M2036.64 126.65 H2039.23 M2036.64 141.25 H2039.23 M2039.23 126.65 L2040.43 141.25 M2039.23 141.25 L2040.43 126.65 M2040.43 126.65 H2043.02 M2040.43 141.25 H2043.02 M2043.02 126.65 L2044.22 141.25 M2043.02 141.25 L2044.22 126.65 M2044.22 126.65 H2046.81 M2044.22 141.25 H2046.81 M2046.81 126.65 L2048.01 141.25 M2046.81 141.25 L2048.01 126.65 M2048.01 126.65 H2050.60 M2048.01 141.25 H2050.60 M2050.60 126.65 L2051.80 141.25 M2050.60 141.25 L2051.80 126.65 M2051.80 126.65 H2054.39 M2051.80 141.25 H2054.39 M2054.39 126.65 L2055.59 141.25 M2054.39 141.25 L2055.59 126.65 M2055.59 126.65 H2058.18 M2055.59 141.25 H2058.18 M2058.18 126.65 L2059.38 141.25 M2058.18 141.25 L2059.38 126.65 M2059.38 126.65 H2061.97 M2059.38 141.25 H2061.97 M2061.97 126.65 L2063.17 141.25 M2061.97 141.25 L2063.17 126.65 M2063.17 126.65 H2065.76 M2063.17 141.25 H2065.76 M2065.76 126.65 L2066.96 141.25 M2065.76 141.25 L2066.96 126.65 M2066.96 126.65 H2069.55 M2066.96 141.25 H2069.55 M2069.55 126.65 L2070.75 141.25 M2069.55 141.25 L2070.75 126.65 M2070.75 126.65 H2073.34 M2070.75 141.25 H2073.34 M2073.34 126.65 L2074.54 141.25 M2073.34 141.25 L2074.54 126.65 M2074.54 126.65 H2077.13 M2074.54 141.25 H2077.13 M2077.13 126.65 L2078.33 141.25 M2077.13 141.25 L2078.33 126.65 M2078.33 126.65 H2080.92 M2078.33 141.25 H2080.92 M2080.92 126.65 L2082.12 141.25 M2080.92 141.25 L2082.12 126.65 M2082.12 126.65 H2084.71 M2082.12 141.25 H2084.71 M2084.71 126.65 L2085.91 141.25 M2084.71 141.25 L2085.91 126.65 M2085.91 126.65 H2088.50 M2085.91 141.25 H2088.50 M2088.50 126.65 L2089.70 141.25 M2088.50 141.25 L2089.70 126.65 M2089.70 126.65 H2092.29 M2089.70 141.25 H2092.29 M2092.29 126.65 L2093.49 141.25 M2092.29 141.25 L2093.49 126.65 M2093.49 126.65 H2096.08 M2093.49 141.25 H2096.08 M2096.08 126.65 L2097.28 141.25 M2096.08 141.25 L2097.28 126.65 M2097.28 126.65 H2099.87 M2097.28 141.25 H2099.87 M2099.87 126.65 L2101.07 141.25 M2099.87 141.25 L2101.07 126.65 M2101.07 126.65 H2103.66 M2101.07 141.25 H2103.66 M2103.66 126.65 L2104.86 141.25 M2103.66 141.25 L2104.86 126.65 M2104.86 126.65 H2107.45 M2104.86 141.25 H2107.45 M2107.45 126.65 L2108.65 141.25 M2107.45 141.25 L2108.65 126.65 M2108.65 126.65 H2111.24 M2108.65 141.25 H2111.24 M2111.24 126.65 L2112.44 141.25 M2111.24 141.25 L2112.44 126.65 M2112.44 126.65 H2115.03 M2112.44 141.25 H2115.03 M2115.03 126.65 L2116.23 141.25 M2115.03 141.25 L2116.23 126.65 M2116.23 126.65 H2118.82 M2116.23 141.25 H2118.82 M2118.82 126.65 L2120.02 141.25 M2118.82 141.25 L2120.02 126.65 M2120.02 126.65 H2122.61 M2120.02 141.25 H2122.61 M2122.61 126.65 L2123.81 141.25 M2122.61 141.25 L2123.81 126.65 M2123.81 126.65 H2126.40 M2123.81 141.25 H2126.40 M2126.40 126.65 L2127.60 141.25 M2126.40 141.25 L2127.60 126.65 M2127.60 126.65 H2130.19 M2127.60 141.25 H2130.19 M2130.19 126.65 L2131.39 141.25 M2130.19 141.25 L2131.39 126.65 M2131.39 126.65 H2133.98 M2131.39 141.25 H2133.98 M2133.98 126.65 L2135.18 141.25 M2133.98 141.25 L2135.18 126.65 M2135.18 126.65 H2137.77 M2135.18 141.25 H2137.77 M2137.77 126.65 L2138.97 141.25 M2137.77 141.25 L2138.97 126.65 M2138.97 126.65 H2141.56 M2138.97 141.25 H2141.56 M2141.56 126.65 L2142.76 141.25 M2141.56 141.25 L2142.76 126.65 M2142.76 126.65 H2145.35 M2142.76 141.25 H2145.35 M2145.35 126.65 L2146.55 141.25 M2145.35 141.25 L2146.55 126.65 M2146.55 126.65 H2149.14 M2146.55 141.25 H2149.14 M2149.14 126.65 L2150.34 141.25 M2149.14 141.25 L2150.34 126.65 M2150.34 126.65 H2152.93 M2150.34 141.25 H2152.93 M2152.93 126.65 L2154.13 141.25 M2152.93 141.25 L2154.13 126.65 M2154.13 126.65 H2156.72 M2154.13 141.25 H2156.72 M2156.72 126.65 L2157.92 141.25 M2156.72 141.25 L2157.92 126.65 M2157.92 126.65 H2160.51 M2157.92 141.25 H2160.51 M2160.51 126.65 L2161.71 141.25 M2160.51 141.25 L2161.71 126.65 M2161.71 126.65 H2164.30 M2161.71 141.25 H2164.30 M2164.30 126.65 L2165.50 141.25 M2164.30 141.25 L2165.50 126.65 M2165.50 126.65 H2165.00 M2165.50 141.25 H2165.00" fill="none" stroke="#8CCC8C" stroke-width="1.1"/><rect x="315" y="0" width="3" height="426" fill="#F2C000"/><rect x="0" y="20" width="2168" height="3" fill="#D6D6D6"/><rect x="2166.5" y="0" width="1.5" height="426" fill="#8a8a8a"/></svg><div style="position:absolute;left:362px;top:374.96px;height:27.0px;line-height:27.0px;font-family:'Liberation Sans', sans-serif;font-size:13.5px;color:#C8C8C8;font-weight:normal;white-space:pre;transform:scaleX(0.92);transform-origin:0 0;">1111111</div><div style="position:absolute;left:362px;top:414.30px;height:27.0px;line-height:27.0px;font-family:'Liberation Sans', sans-serif;font-size:13.5px;color:#C8C8C8;font-weight:normal;white-space:pre;transform:scaleX(0.92);transform-origin:0 0;">26</div><div style="position:absolute;left:362px;top:473.31px;height:27.0px;line-height:27.0px;font-family:'Liberation Sans', sans-serif;font-size:13.5px;color:#C8C8C8;font-weight:normal;white-space:pre;transform:scaleX(0.92);transform-origin:0 0;">0000000000100100</div><div style="position:absolute;left:362px;top:492.98px;height:27.0px;line-height:27.0px;font-family:'Liberation Sans', sans-serif;font-size:13.5px;color:#C8C8C8;font-weight:normal;white-space:pre;transform:scaleX(0.92);transform-origin:0 0;">0000001000010000</div><div style="position:absolute;left:362px;top:512.65px;height:27.0px;line-height:27.0px;font-family:'Liberation Sans', sans-serif;font-size:13.5px;color:#C8C8C8;font-weight:normal;white-space:pre;transform:scaleX(0.92);transform-origin:0 0;">0000000010000010</div><div style="position:absolute;left:1442px;top:414.30px;height:27.0px;line-height:27.0px;font-family:'Liberation Sans', sans-serif;font-size:13.5px;color:#C8C8C8;font-weight:normal;white-space:pre;transform:scaleX(0.92);transform-origin:0 0;">25</div><div style="position:absolute;left:307px;top:756.7px;width:656px;height:614.8999999999999px;background:#F8F8F8;overflow:hidden"><div style="position:absolute;left:7.60px;top:-10.58px;height:31.3px;line-height:31.3px;font-family:'Liberation Mono', monospace;font-size:15.65px;color:#111;white-space:pre;-webkit-text-stroke:0.3px #111"></div><div style="position:absolute;left:7.60px;top:8.98px;height:31.3px;line-height:31.3px;font-family:'Liberation Mono', monospace;font-size:15.65px;color:#111;white-space:pre;-webkit-text-stroke:0.3px #111">Report : constraint</div><div style="position:absolute;left:7.60px;top:28.54px;height:31.3px;line-height:31.3px;font-family:'Liberation Mono', monospace;font-size:15.65px;color:#111;white-space:pre;-webkit-text-stroke:0.3px #111">Design : control_sys</div><div style="position:absolute;left:7.60px;top:48.10px;height:31.3px;line-height:31.3px;font-family:'Liberation Mono', monospace;font-size:15.65px;color:#111;white-space:pre;-webkit-text-stroke:0.3px #111">Version: U-2022.12-SP5</div><div style="position:absolute;left:7.60px;top:67.66px;height:31.3px;line-height:31.3px;font-family:'Liberation Mono', monospace;font-size:15.65px;color:#111;white-space:pre;-webkit-text-stroke:0.3px #111">Date   : Thu May  1 17:34:20 2025</div><div style="position:absolute;left:7.60px;top:87.22px;height:31.3px;line-height:31.3px;font-family:'Liberation Mono', monospace;font-size:15.65px;color:#111;white-space:pre;-webkit-text-stroke:0.3px #111">****************************************</div><div style="position:absolute;left:7.60px;top:106.78px;height:31.3px;line-height:31.3px;font-family:'Liberation Mono', monospace;font-size:15.65px;color:#111;white-space:pre;-webkit-text-stroke:0.3px #111"></div><div style="position:absolute;left:7.60px;top:126.34px;height:31.3px;line-height:31.3px;font-family:'Liberation Mono', monospace;font-size:15.65px;color:#111;white-space:pre;-webkit-text-stroke:0.3px #111">                                                   Weighted</div><div style="position:absolute;left:7.60px;top:145.90px;height:31.3px;line-height:31.3px;font-family:'Liberation Mono', monospace;font-size:15.65px;color:#111;white-space:pre;-webkit-text-stroke:0.3px #111">    Group (max_delay/setup)      Cost     Weight     Cost</div><div style="position:absolute;left:7.60px;top:165.46px;height:31.3px;line-height:31.3px;font-family:'Liberation Mono', monospace;font-size:15.65px;color:#111;white-space:pre;-webkit-text-stroke:0.3px #111">    -----------------------------------------------------</div><div style="position:absolute;left:7.60px;top:185.02px;height:31.3px;line-height:31.3px;font-family:'Liberation Mono', monospace;font-size:15.65px;color:#111;white-space:pre;-webkit-text-stroke:0.3px #111">    clk                          0.00      1.00      0.00</div><div style="position:absolute;left:7.60px;top:204.58px;height:31.3px;line-height:31.3px;font-family:'Liberation Mono', monospace;font-size:15.65px;color:#111;white-space:pre;-webkit-text-stroke:0.3px #111">    -----------------------------------------------------</div><div style="position:absolute;left:7.60px;top:224.14px;height:31.3px;line-height:31.3px;font-family:'Liberation Mono', monospace;font-size:15.65px;color:#111;white-space:pre;-webkit-text-stroke:0.3px #111">    max_delay/setup                                  0.00</div><div style="position:absolute;left:7.60px;top:243.70px;height:31.3px;line-height:31.3px;font-family:'Liberation Mono', monospace;font-size:15.65px;color:#111;white-space:pre;-webkit-text-stroke:0.3px #111"></div><div style="position:absolute;left:7.60px;top:263.26px;height:31.3px;line-height:31.3px;font-family:'Liberation Mono', monospace;font-size:15.65px;color:#111;white-space:pre;-webkit-text-stroke:0.3px #111">                                                   Weighted</div><div style="position:absolute;left:7.60px;top:282.82px;height:31.3px;line-height:31.3px;font-family:'Liberation Mono', monospace;font-size:15.65px;color:#111;white-space:pre;-webkit-text-stroke:0.3px #111">    Group (min_delay/hold)       Cost     Weight     Cost</div><div style="position:absolute;left:7.60px;top:302.38px;height:31.3px;line-height:31.3px;font-family:'Liberation Mono', monospace;font-size:15.65px;color:#111;white-space:pre;-webkit-text-stroke:0.3px #111">    -----------------------------------------------------</div><div style="position:absolute;left:7.60px;top:321.94px;height:31.3px;line-height:31.3px;font-family:'Liberation Mono', monospace;font-size:15.65px;color:#111;white-space:pre;-webkit-text-stroke:0.3px #111">    clk                          0.00      1.00      0.00</div><div style="position:absolute;left:7.60px;top:341.50px;height:31.3px;line-height:31.3px;font-family:'Liberation Mono', monospace;font-size:15.65px;color:#111;white-space:pre;-webkit-text-stroke:0.3px #111">    -----------------------------------------------------</div><div style="position:absolute;left:7.60px;top:361.06px;height:31.3px;line-height:31.3px;font-family:'Liberation Mono', monospace;font-size:15.65px;color:#111;white-space:pre;-webkit-text-stroke:0.3px #111">    min_delay/hold                                   0.00</div><div style="position:absolute;left:7.60px;top:380.62px;height:31.3px;line-height:31.3px;font-family:'Liberation Mono', monospace;font-size:15.65px;color:#111;white-space:pre;-webkit-text-stroke:0.3px #111"></div><div style="position:absolute;left:7.60px;top:400.18px;height:31.3px;line-height:31.3px;font-family:'Liberation Mono', monospace;font-size:15.65px;color:#111;white-space:pre;-webkit-text-stroke:0.3px #111">    Constraint                                       Cost</div><div style="position:absolute;left:7.60px;top:419.74px;height:31.3px;line-height:31.3px;font-family:'Liberation Mono', monospace;font-size:15.65px;color:#111;white-space:pre;-webkit-text-stroke:0.3px #111">    -----------------------------------------------------</div><div style="position:absolute;left:7.60px;top:439.30px;height:31.3px;line-height:31.3px;font-family:'Liberation Mono', monospace;font-size:15.65px;color:#111;white-space:pre;-webkit-text-stroke:0.3px #111">    max_delay/setup                                  0.00  (MET)</div><div style="position:absolute;left:7.60px;top:458.86px;height:31.3px;line-height:31.3px;font-family:'Liberation Mono', monospace;font-size:15.65px;color:#111;white-space:pre;-webkit-text-stroke:0.3px #111">    min_delay/hold                                   0.00  (MET)</div><div style="position:absolute;left:7.60px;top:478.42px;height:31.3px;line-height:31.3px;font-family:'Liberation Mono', monospace;font-size:15.65px;color:#111;white-space:pre;-webkit-text-stroke:0.3px #111">    recovery                                         0.00  (MET)</div><div style="position:absolute;left:7.60px;top:497.98px;height:31.3px;line-height:31.3px;font-family:'Liberation Mono', monospace;font-size:15.65px;color:#111;white-space:pre;-webkit-text-stroke:0.3px #111">    removal                                          0.00  (MET)</div><div style="position:absolute;left:7.60px;top:517.54px;height:31.3px;line-height:31.3px;font-family:'Liberation Mono', monospace;font-size:15.65px;color:#111;white-space:pre;-webkit-text-stroke:0.3px #111">    sequential_clock_pulse_width                     0.00  (MET)</div><div style="position:absolute;left:7.60px;top:537.10px;height:31.3px;line-height:31.3px;font-family:'Liberation Mono', monospace;font-size:15.65px;color:#111;white-space:pre;-webkit-text-stroke:0.3px #111">    max_capacitance                                  0.00  (MET)</div><div style="position:absolute;left:7.60px;top:556.66px;height:31.3px;line-height:31.3px;font-family:'Liberation Mono', monospace;font-size:15.65px;color:#111;white-space:pre;-webkit-text-stroke:0.3px #111">    max_transition                                   0.00  (MET)</div><div style="position:absolute;left:7.60px;top:576.22px;height:31.3px;line-height:31.3px;font-family:'Liberation Mono', monospace;font-size:15.65px;color:#111;white-space:pre;-webkit-text-stroke:0.3px #111"></div><div style="position:absolute;left:7.60px;top:595.78px;height:31.3px;line-height:31.3px;font-family:'Liberation Mono', monospace;font-size:15.65px;color:#111;white-space:pre;-webkit-text-stroke:0.3px #111">1</div></div><div style="position:absolute;left:300px;top:756.6px;width:420px;height:7px;overflow:hidden"><div style="position:absolute;left:14.60px;top:-7.68px;height:31.3px;line-height:31.3px;font-family:'Liberation Mono', monospace;font-size:15.65px;color:#111;white-space:pre">****************************************</div></div><div style="position:absolute;left:1289px;top:768.2px;width:722px;height:591.2px;background:#F8F8F8;overflow:hidden"><div style="position:absolute;left:16.00px;top:9.97px;height:29.26px;line-height:29.26px;font-family:'Liberation Mono', monospace;font-size:14.63px;color:#111;white-space:pre;-webkit-text-stroke:0.3px #111">Startpoint: data[1] (input port clocked by clk)</div><div style="position:absolute;left:16.00px;top:28.29px;height:29.26px;line-height:29.26px;font-family:'Liberation Mono', monospace;font-size:14.63px;color:#111;white-space:pre;-webkit-text-stroke:0.3px #111">Endpoint: pid_init/error_sig_reg_1_</div><div style="position:absolute;left:16.00px;top:46.61px;height:29.26px;line-height:29.26px;font-family:'Liberation Mono', monospace;font-size:14.63px;color:#111;white-space:pre;-webkit-text-stroke:0.3px #111">             (rising edge-triggered flip-flop clocked by clk)</div><div style="position:absolute;left:16.00px;top:64.93px;height:29.26px;line-height:29.26px;font-family:'Liberation Mono', monospace;font-size:14.63px;color:#111;white-space:pre;-webkit-text-stroke:0.3px #111">Path Group: clk</div><div style="position:absolute;left:16.00px;top:83.25px;height:29.26px;line-height:29.26px;font-family:'Liberation Mono', monospace;font-size:14.63px;color:#111;white-space:pre;-webkit-text-stroke:0.3px #111">Path Type: min</div><div style="position:absolute;left:16.00px;top:101.57px;height:29.26px;line-height:29.26px;font-family:'Liberation Mono', monospace;font-size:14.63px;color:#111;white-space:pre;-webkit-text-stroke:0.3px #111"></div><div style="position:absolute;left:16.00px;top:119.89px;height:29.26px;line-height:29.26px;font-family:'Liberation Mono', monospace;font-size:14.63px;color:#111;white-space:pre;-webkit-text-stroke:0.3px #111">Point                                                   Incr       Path</div><div style="position:absolute;left:16.00px;top:138.21px;height:29.26px;line-height:29.26px;font-family:'Liberation Mono', monospace;font-size:14.63px;color:#111;white-space:pre;-webkit-text-stroke:0.3px #111">------------------------------------------------------------------------------</div><div style="position:absolute;left:16.00px;top:156.53px;height:29.26px;line-height:29.26px;font-family:'Liberation Mono', monospace;font-size:14.63px;color:#111;white-space:pre;-webkit-text-stroke:0.3px #111">clock clk (rise edge)                                 0.0000     0.0000</div><div style="position:absolute;left:16.00px;top:174.85px;height:29.26px;line-height:29.26px;font-family:'Liberation Mono', monospace;font-size:14.63px;color:#111;white-space:pre;-webkit-text-stroke:0.3px #111">clock network delay (propagated)                      0.0000     0.0000</div><div style="position:absolute;left:16.00px;top:193.17px;height:29.26px;line-height:29.26px;font-family:'Liberation Mono', monospace;font-size:14.63px;color:#111;white-space:pre;-webkit-text-stroke:0.3px #111">input external delay                                  0.0200     0.0200 f</div><div style="position:absolute;left:16.00px;top:211.49px;height:29.26px;line-height:29.26px;font-family:'Liberation Mono', monospace;font-size:14.63px;color:#111;white-space:pre;-webkit-text-stroke:0.3px #111">data[1] (in)                                          0.0000 &amp;   0.0200 f</div><div style="position:absolute;left:16.00px;top:229.81px;height:29.26px;line-height:29.26px;font-family:'Liberation Mono', monospace;font-size:14.63px;color:#111;white-space:pre;-webkit-text-stroke:0.3px #111">pid_init/U93/ZN (CKND0)                               0.0201 &amp;   0.0401 r</div><div style="position:absolute;left:16.00px;top:248.13px;height:29.26px;line-height:29.26px;font-family:'Liberation Mono', monospace;font-size:14.63px;color:#111;white-space:pre;-webkit-text-stroke:0.3px #111">pid_init/U85/ZN (AOI211D0)                            0.0365 &amp;   0.0766 f</div><div style="position:absolute;left:16.00px;top:266.45px;height:29.26px;line-height:29.26px;font-family:'Liberation Mono', monospace;font-size:14.63px;color:#111;white-space:pre;-webkit-text-stroke:0.3px #111">pid_init/U4/ZN (MUX2ND0)                              0.0467 &amp;   0.1234 r</div><div style="position:absolute;left:16.00px;top:284.77px;height:29.26px;line-height:29.26px;font-family:'Liberation Mono', monospace;font-size:14.63px;color:#111;white-space:pre;-webkit-text-stroke:0.3px #111">pid_init/FE_PHC85_n45/Z (DEL015)                      0.1702 &amp;   0.2936 r</div><div style="position:absolute;left:16.00px;top:303.09px;height:29.26px;line-height:29.26px;font-family:'Liberation Mono', monospace;font-size:14.63px;color:#111;white-space:pre;-webkit-text-stroke:0.3px #111">pid_init/error_sig_reg_1_/D (DFCNQD1)                 0.0000 &amp;   0.2936 r</div><div style="position:absolute;left:16.00px;top:321.41px;height:29.26px;line-height:29.26px;font-family:'Liberation Mono', monospace;font-size:14.63px;color:#111;white-space:pre;-webkit-text-stroke:0.3px #111">data arrival time                                                0.2936</div><div style="position:absolute;left:16.00px;top:339.73px;height:29.26px;line-height:29.26px;font-family:'Liberation Mono', monospace;font-size:14.63px;color:#111;white-space:pre;-webkit-text-stroke:0.3px #111"></div><div style="position:absolute;left:16.00px;top:358.05px;height:29.26px;line-height:29.26px;font-family:'Liberation Mono', monospace;font-size:14.63px;color:#111;white-space:pre;-webkit-text-stroke:0.3px #111">clock clk (rise edge)                                 0.0000     0.0000</div><div style="position:absolute;left:16.00px;top:376.37px;height:29.26px;line-height:29.26px;font-family:'Liberation Mono', monospace;font-size:14.63px;color:#111;white-space:pre;-webkit-text-stroke:0.3px #111">clock network delay (propagated)                      0.0627     0.0627</div><div style="position:absolute;left:16.00px;top:394.69px;height:29.26px;line-height:29.26px;font-family:'Liberation Mono', monospace;font-size:14.63px;color:#111;white-space:pre;-webkit-text-stroke:0.3px #111">clock reconvergence pessimism                         0.0000     0.0627</div><div style="position:absolute;left:16.00px;top:413.01px;height:29.26px;line-height:29.26px;font-family:'Liberation Mono', monospace;font-size:14.63px;color:#111;white-space:pre;-webkit-text-stroke:0.3px #111">clock uncertainty                                     0.1000     0.1627</div><div style="position:absolute;left:16.00px;top:431.33px;height:29.26px;line-height:29.26px;font-family:'Liberation Mono', monospace;font-size:14.63px;color:#111;white-space:pre;-webkit-text-stroke:0.3px #111">pid_init/error_sig_reg_1_/CP (DFCNQD1)                           0.1627 r</div><div style="position:absolute;left:16.00px;top:449.65px;height:29.26px;line-height:29.26px;font-family:'Liberation Mono', monospace;font-size:14.63px;color:#111;white-space:pre;-webkit-text-stroke:0.3px #111">library hold time                                     0.0075     0.1702</div><div style="position:absolute;left:16.00px;top:467.97px;height:29.26px;line-height:29.26px;font-family:'Liberation Mono', monospace;font-size:14.63px;color:#111;white-space:pre;-webkit-text-stroke:0.3px #111">data required time                                               0.1702</div><div style="position:absolute;left:16.00px;top:486.29px;height:29.26px;line-height:29.26px;font-family:'Liberation Mono', monospace;font-size:14.63px;color:#111;white-space:pre;-webkit-text-stroke:0.3px #111">------------------------------------------------------------------------------</div><div style="position:absolute;left:16.00px;top:504.61px;height:29.26px;line-height:29.26px;font-family:'Liberation Mono', monospace;font-size:14.63px;color:#111;white-space:pre;-webkit-text-stroke:0.3px #111">data required time                                               0.1702</div><div style="position:absolute;left:16.00px;top:522.93px;height:29.26px;line-height:29.26px;font-family:'Liberation Mono', monospace;font-size:14.63px;color:#111;white-space:pre;-webkit-text-stroke:0.3px #111">data arrival time                                               -0.2936</div><div style="position:absolute;left:16.00px;top:541.25px;height:29.26px;line-height:29.26px;font-family:'Liberation Mono', monospace;font-size:14.63px;color:#111;white-space:pre;-webkit-text-stroke:0.3px #111">------------------------------------------------------------------------------</div><div style="position:absolute;left:16.00px;top:559.57px;height:29.26px;line-height:29.26px;font-family:'Liberation Mono', monospace;font-size:14.63px;color:#111;white-space:pre;-webkit-text-stroke:0.3px #111">slack (MET)                                                      0.1234</div></div></body></html>
